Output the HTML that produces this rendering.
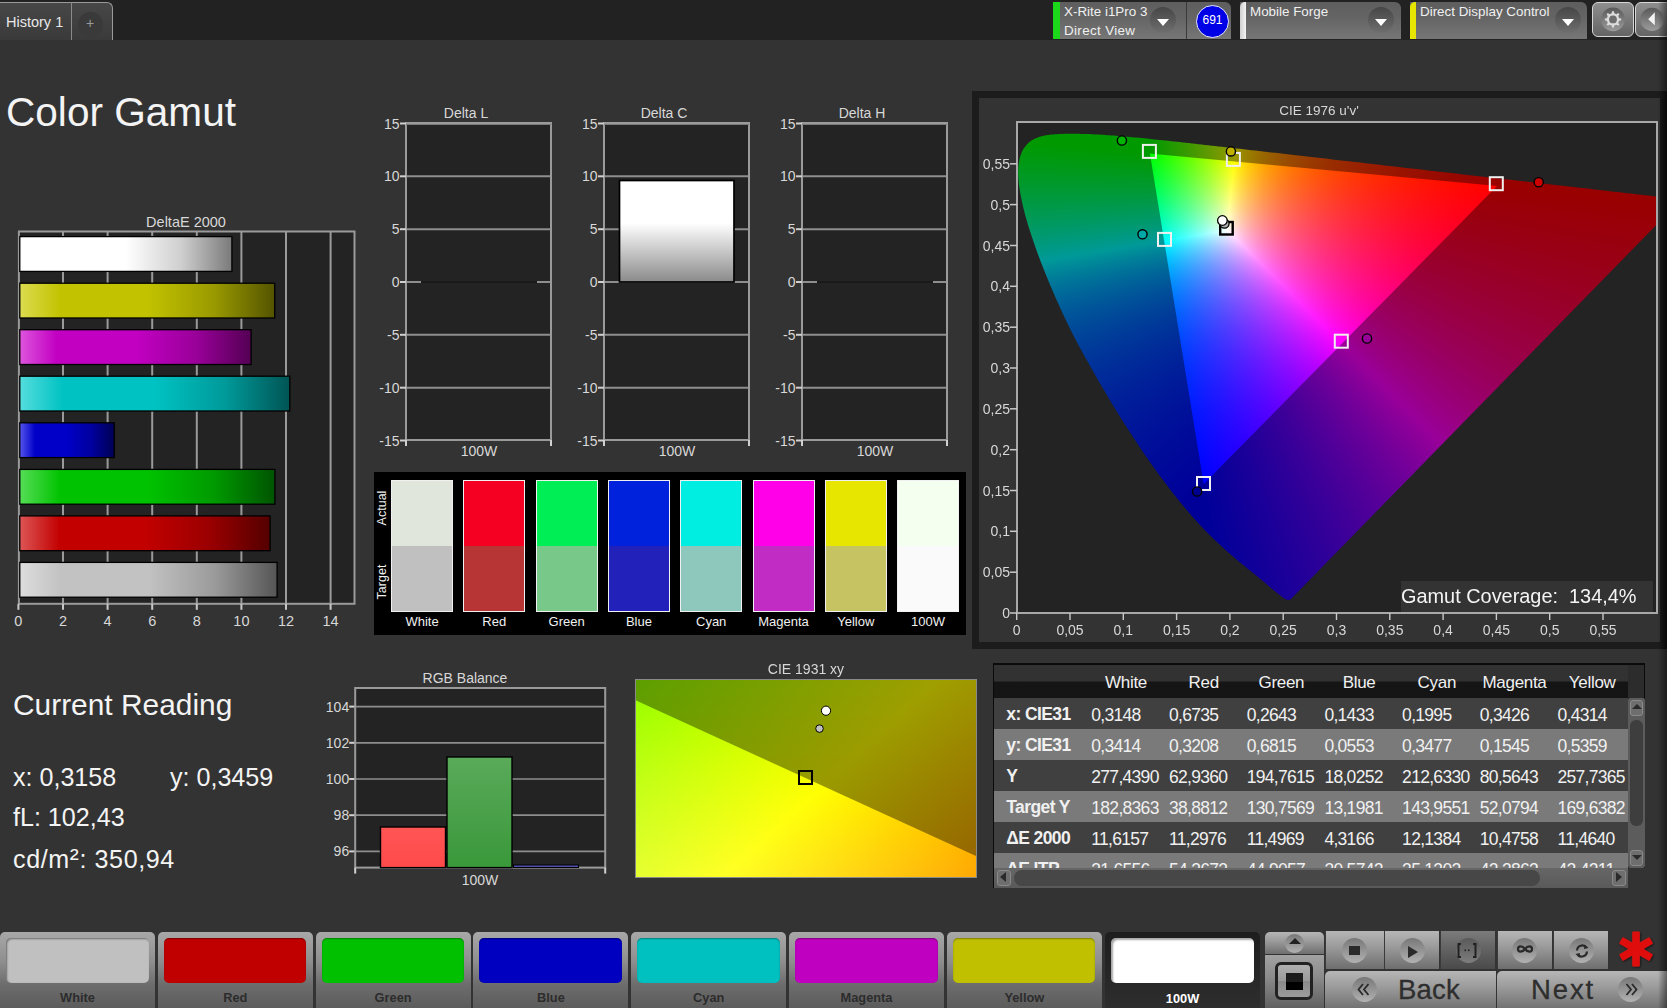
<!DOCTYPE html>
<html><head><meta charset="utf-8">
<style>
*{box-sizing:border-box;margin:0;padding:0}
html,body{width:1667px;height:1008px;overflow:hidden;background:#333333;font-family:"Liberation Sans",sans-serif;color:#e6e6e6}
.a{position:absolute}
svg text{font-family:"Liberation Sans",sans-serif}
#topbar{left:0;top:0;width:1667px;height:40px;background:#222222}
.tab{left:0;top:2px;width:113px;height:38px;background:linear-gradient(#474747,#3a3a3a);border-top:1.3px solid #9a9a9a;border-right:1.3px solid #9a9a9a;border-top-right-radius:6px}
.wid{top:2px;height:37px;background:linear-gradient(#5e5e5e,#646464 40%,#767676);border-radius:0 6px 0 0}
.strip{top:0;left:0;width:7px;height:37px}
.dd{width:26px;height:26px;border-radius:50%;background:linear-gradient(#464646,#6e6e6e)}
.dd:after{content:"";position:absolute;left:7px;top:11.5px;border-left:6px solid transparent;border-right:6px solid transparent;border-top:7px solid #fff}
.wtxt{font-size:13.4px;color:#f0f0f0;white-space:nowrap}
#title{left:6px;top:89.3px;font-size:40.6px;color:#f4f4f4;white-space:nowrap}
</style></head><body>
<div id="topbar" class="a"></div>
<div class="a tab">
  <div class="a" style="left:6px;top:10.5px;font-size:14.5px;color:#e8e8e8;white-space:nowrap">History 1</div>
  <div class="a" style="left:71px;top:-1px;width:1.3px;height:38px;background:#8a8a8a"></div>
  <div class="a" style="left:78px;top:9px;width:25px;height:25px;border-radius:50%;background:#3a3a3a"></div>
  <div class="a" style="left:86px;top:12px;font-size:14px;color:#9a9a9a">+</div>
</div>

<!-- meter widget -->
<div class="a wid" style="left:1053px;width:178px">
  <div class="a strip" style="background:#1bd81b"></div>
  <div class="a wtxt" style="left:11px;top:2px">X-Rite i1Pro 3</div>
  <div class="a wtxt" style="left:11px;top:21px;letter-spacing:0.35px">Direct View</div>
  <div class="a dd" style="left:97px;top:5px"></div>
  <div class="a" style="left:133px;top:0;width:1px;height:37px;background:#3a3a3a"></div>
  <div class="a" style="left:143px;top:3px;width:33px;height:33px;border-radius:50%;background:#0000e6;border:1.5px solid #e8e8ff"></div>
  <div class="a" style="left:143px;top:11px;width:33px;text-align:center;font-size:12px;color:#fff">691</div>
</div>
<div class="a wid" style="left:1240px;width:161px">
  <div class="a strip" style="width:6px;background:linear-gradient(90deg,#cfcfcf,#f4f4f4);border-radius:5px 0 0 0"></div>
  <div class="a wtxt" style="left:10px;top:2px">Mobile Forge</div>
  <div class="a dd" style="left:128px;top:5px"></div>
</div>
<div class="a wid" style="left:1410px;width:177px">
  <div class="a strip" style="width:6px;background:#e6e600;border-radius:5px 0 0 0"></div>
  <div class="a wtxt" style="left:10px;top:2px">Direct Display Control</div>
  <div class="a dd" style="left:145px;top:5px"></div>
</div>
<div class="a" style="left:1592px;top:2px;width:42px;height:35px;border-radius:6px;border:1.5px solid #d8d8d8;background:linear-gradient(#8e8e8e,#777 55%,#646464)"></div>
<div class="a" style="left:1635px;top:2px;width:40px;height:35px;border-radius:6px;border:1.5px solid #d8d8d8;background:linear-gradient(#8e8e8e,#777 55%,#646464)"></div>
<svg class="a" style="left:1592px;top:2px" width="75" height="36" viewBox="0 0 75 36">
<defs><linearGradient id="gcirc" x1="0" x2="0" y1="0" y2="1"><stop offset="0" stop-color="#595959"/><stop offset="1" stop-color="#9c9c9c"/></linearGradient></defs>
<circle cx="21" cy="17.4" r="11.8" fill="url(#gcirc)"/>
<path d="M19.75 11.23 L20.02 9.26 L21.98 9.26 L22.25 11.23 L24.48 12.15 L26.06 10.95 L27.45 12.34 L26.25 13.92 L27.17 16.15 L29.14 16.42 L29.14 18.38 L27.17 18.65 L26.25 20.88 L27.45 22.46 L26.06 23.85 L24.48 22.65 L22.25 23.57 L21.98 25.54 L20.02 25.54 L19.75 23.57 L17.52 22.65 L15.94 23.85 L14.55 22.46 L15.75 20.88 L14.83 18.65 L12.86 18.38 L12.86 16.42 L14.83 16.15 L15.75 13.92 L14.55 12.34 L15.94 10.95 L17.52 12.15 Z" fill="#dcdcdc"/><circle cx="21" cy="17.4" r="3.9" fill="#6e6e6e"/>
<circle cx="60" cy="17.4" r="11.6" fill="url(#gcirc)"/>
<path d="M56.2 17.2 L62.8 10.2 L62.8 23.2 Z" fill="#f2f2f2"/>
</svg>
<div id="title" class="a">Color Gamut</div>

<svg class="a" style="left:0;top:200px" width="370" height="440" viewBox="0 200 370 440">
<defs>
<linearGradient id="dew" x1="0" x2="1" y1="0" y2="0"><stop offset="0" stop-color="#ffffff"/><stop offset="0.16" stop-color="#ffffff"/><stop offset="0.5" stop-color="#ffffff"/><stop offset="0.76" stop-color="#cfcfcf"/><stop offset="1" stop-color="#7a7a7a"/></linearGradient>
<linearGradient id="dey" x1="0" x2="1" y1="0" y2="0"><stop offset="0" stop-color="#dcdc50"/><stop offset="0.16" stop-color="#c2c200"/><stop offset="0.5" stop-color="#c2c200"/><stop offset="0.76" stop-color="#9a9a00"/><stop offset="1" stop-color="#545400"/></linearGradient>
<linearGradient id="dem" x1="0" x2="1" y1="0" y2="0"><stop offset="0" stop-color="#dd55dd"/><stop offset="0.16" stop-color="#c200c2"/><stop offset="0.5" stop-color="#c200c2"/><stop offset="0.76" stop-color="#9a009a"/><stop offset="1" stop-color="#540054"/></linearGradient>
<linearGradient id="dec" x1="0" x2="1" y1="0" y2="0"><stop offset="0" stop-color="#55dddd"/><stop offset="0.16" stop-color="#00c2c2"/><stop offset="0.5" stop-color="#00c2c2"/><stop offset="0.76" stop-color="#009a9a"/><stop offset="1" stop-color="#005454"/></linearGradient>
<linearGradient id="deb" x1="0" x2="1" y1="0" y2="0"><stop offset="0" stop-color="#5555ee"/><stop offset="0.16" stop-color="#0000c8"/><stop offset="0.5" stop-color="#0000c8"/><stop offset="0.76" stop-color="#00009e"/><stop offset="1" stop-color="#000054"/></linearGradient>
<linearGradient id="deg" x1="0" x2="1" y1="0" y2="0"><stop offset="0" stop-color="#55dd55"/><stop offset="0.16" stop-color="#00c200"/><stop offset="0.5" stop-color="#00c200"/><stop offset="0.76" stop-color="#009a00"/><stop offset="1" stop-color="#005400"/></linearGradient>
<linearGradient id="der" x1="0" x2="1" y1="0" y2="0"><stop offset="0" stop-color="#dd5555"/><stop offset="0.16" stop-color="#c20000"/><stop offset="0.5" stop-color="#c20000"/><stop offset="0.76" stop-color="#9a0000"/><stop offset="1" stop-color="#540000"/></linearGradient>
<linearGradient id="dek" x1="0" x2="1" y1="0" y2="0"><stop offset="0" stop-color="#dddddd"/><stop offset="0.16" stop-color="#c2c2c2"/><stop offset="0.5" stop-color="#c2c2c2"/><stop offset="0.76" stop-color="#9a9a9a"/><stop offset="1" stop-color="#555555"/></linearGradient>
</defs>
<rect x="18.9" y="231.5" width="335.6" height="372.29999999999995" fill="#232323"/>
<line x1="63.0" y1="231.5" x2="63.0" y2="603.8" stroke="#9a9a9a" stroke-width="2"/>
<line x1="107.6" y1="231.5" x2="107.6" y2="603.8" stroke="#9a9a9a" stroke-width="2"/>
<line x1="152.2" y1="231.5" x2="152.2" y2="603.8" stroke="#9a9a9a" stroke-width="2"/>
<line x1="196.8" y1="231.5" x2="196.8" y2="603.8" stroke="#9a9a9a" stroke-width="2"/>
<line x1="241.4" y1="231.5" x2="241.4" y2="603.8" stroke="#9a9a9a" stroke-width="2"/>
<line x1="286.0" y1="231.5" x2="286.0" y2="603.8" stroke="#9a9a9a" stroke-width="2"/>
<line x1="330.6" y1="231.5" x2="330.6" y2="603.8" stroke="#9a9a9a" stroke-width="2"/>
<rect x="18.9" y="231.5" width="335.6" height="372.29999999999995" fill="none" stroke="#9a9a9a" stroke-width="2"/>
<rect x="19.799999999999997" y="236.6" width="212.1" height="34.8" fill="url(#dew)" stroke="#000" stroke-width="1.3"/>
<rect x="19.799999999999997" y="283.2" width="254.9" height="34.8" fill="url(#dey)" stroke="#000" stroke-width="1.3"/>
<rect x="19.799999999999997" y="329.7" width="231.3" height="34.8" fill="url(#dem)" stroke="#000" stroke-width="1.3"/>
<rect x="19.799999999999997" y="376.2" width="270.0" height="34.8" fill="url(#dec)" stroke="#000" stroke-width="1.3"/>
<rect x="19.799999999999997" y="422.8" width="94.5" height="34.8" fill="url(#deb)" stroke="#000" stroke-width="1.3"/>
<rect x="19.799999999999997" y="469.4" width="255.1" height="34.8" fill="url(#deg)" stroke="#000" stroke-width="1.3"/>
<rect x="19.799999999999997" y="515.9" width="250.3" height="34.8" fill="url(#der)" stroke="#000" stroke-width="1.3"/>
<rect x="19.799999999999997" y="562.4" width="257.3" height="34.8" fill="url(#dek)" stroke="#000" stroke-width="1.3"/>
<line x1="18.4" y1="603.8" x2="18.4" y2="609.8" stroke="#c8c8c8" stroke-width="2"/>
<text x="18.4" y="626" font-size="14.5" fill="#d8d8d8" text-anchor="middle">0</text>
<line x1="63.0" y1="603.8" x2="63.0" y2="609.8" stroke="#c8c8c8" stroke-width="2"/>
<text x="63.0" y="626" font-size="14.5" fill="#d8d8d8" text-anchor="middle">2</text>
<line x1="107.6" y1="603.8" x2="107.6" y2="609.8" stroke="#c8c8c8" stroke-width="2"/>
<text x="107.6" y="626" font-size="14.5" fill="#d8d8d8" text-anchor="middle">4</text>
<line x1="152.2" y1="603.8" x2="152.2" y2="609.8" stroke="#c8c8c8" stroke-width="2"/>
<text x="152.2" y="626" font-size="14.5" fill="#d8d8d8" text-anchor="middle">6</text>
<line x1="196.8" y1="603.8" x2="196.8" y2="609.8" stroke="#c8c8c8" stroke-width="2"/>
<text x="196.8" y="626" font-size="14.5" fill="#d8d8d8" text-anchor="middle">8</text>
<line x1="241.4" y1="603.8" x2="241.4" y2="609.8" stroke="#c8c8c8" stroke-width="2"/>
<text x="241.4" y="626" font-size="14.5" fill="#d8d8d8" text-anchor="middle">10</text>
<line x1="286.0" y1="603.8" x2="286.0" y2="609.8" stroke="#c8c8c8" stroke-width="2"/>
<text x="286.0" y="626" font-size="14.5" fill="#d8d8d8" text-anchor="middle">12</text>
<line x1="330.6" y1="603.8" x2="330.6" y2="609.8" stroke="#c8c8c8" stroke-width="2"/>
<text x="330.6" y="626" font-size="14.5" fill="#d8d8d8" text-anchor="middle">14</text>
<text x="186" y="227" font-size="14.5" fill="#d8d8d8" text-anchor="middle">DeltaE 2000</text>
</svg>
<svg class="a" style="left:366px;top:95px" width="200" height="375" viewBox="366 95 200 375">
<rect x="406" y="123.0" width="145" height="317.0" fill="#232323"/>
<line x1="406" y1="176.3" x2="551" y2="176.3" stroke="#8e8e8e" stroke-width="2"/>
<line x1="406" y1="229.2" x2="551" y2="229.2" stroke="#8e8e8e" stroke-width="2"/>
<line x1="406" y1="282.0" x2="551" y2="282.0" stroke="#8e8e8e" stroke-width="2"/>
<line x1="406" y1="334.8" x2="551" y2="334.8" stroke="#8e8e8e" stroke-width="2"/>
<line x1="406" y1="387.7" x2="551" y2="387.7" stroke="#8e8e8e" stroke-width="2"/>
<rect x="406" y="123.0" width="145" height="317.0" fill="none" stroke="#9a9a9a" stroke-width="2"/>
<line x1="406" y1="124.5" x2="551" y2="124.5" stroke="#7a7a7a" stroke-width="1"/>
<rect x="421" y="281" width="116" height="2" fill="#1a1a1a"/>
<line x1="400" y1="123.5" x2="406" y2="123.5" stroke="#d0d0d0" stroke-width="2"/>
<text x="399.5" y="128.5" font-size="14" fill="#d8d8d8" text-anchor="end">15</text>
<line x1="400" y1="176.3" x2="406" y2="176.3" stroke="#d0d0d0" stroke-width="2"/>
<text x="399.5" y="181.3" font-size="14" fill="#d8d8d8" text-anchor="end">10</text>
<line x1="400" y1="229.2" x2="406" y2="229.2" stroke="#d0d0d0" stroke-width="2"/>
<text x="399.5" y="234.2" font-size="14" fill="#d8d8d8" text-anchor="end">5</text>
<line x1="400" y1="282.0" x2="406" y2="282.0" stroke="#d0d0d0" stroke-width="2"/>
<text x="399.5" y="287.0" font-size="14" fill="#d8d8d8" text-anchor="end">0</text>
<line x1="400" y1="334.8" x2="406" y2="334.8" stroke="#d0d0d0" stroke-width="2"/>
<text x="399.5" y="339.8" font-size="14" fill="#d8d8d8" text-anchor="end">-5</text>
<line x1="400" y1="387.7" x2="406" y2="387.7" stroke="#d0d0d0" stroke-width="2"/>
<text x="399.5" y="392.7" font-size="14" fill="#d8d8d8" text-anchor="end">-10</text>
<line x1="400" y1="440.5" x2="406" y2="440.5" stroke="#d0d0d0" stroke-width="2"/>
<text x="399.5" y="445.5" font-size="14" fill="#d8d8d8" text-anchor="end">-15</text>
<line x1="406" y1="440.0" x2="406" y2="446.0" stroke="#d0d0d0" stroke-width="2"/>
<line x1="551" y1="440.0" x2="551" y2="446.0" stroke="#d0d0d0" stroke-width="2"/>
<text x="479" y="456" font-size="14" fill="#d8d8d8" text-anchor="middle">100W</text>
<text x="466" y="118" font-size="14" fill="#d8d8d8" text-anchor="middle">Delta L</text>
</svg>
<svg class="a" style="left:563.5px;top:95px" width="200" height="375" viewBox="563.5 95 200 375">
<defs><linearGradient id="dcg" x1="0" x2="0" y1="0" y2="1"><stop offset="0" stop-color="#ffffff"/><stop offset="0.42" stop-color="#ffffff"/><stop offset="1" stop-color="#8a8a8a"/></linearGradient></defs>
<rect x="603.5" y="123.0" width="145" height="317.0" fill="#232323"/>
<line x1="603.5" y1="176.3" x2="748.5" y2="176.3" stroke="#8e8e8e" stroke-width="2"/>
<line x1="603.5" y1="229.2" x2="748.5" y2="229.2" stroke="#8e8e8e" stroke-width="2"/>
<line x1="603.5" y1="282.0" x2="748.5" y2="282.0" stroke="#8e8e8e" stroke-width="2"/>
<line x1="603.5" y1="334.8" x2="748.5" y2="334.8" stroke="#8e8e8e" stroke-width="2"/>
<line x1="603.5" y1="387.7" x2="748.5" y2="387.7" stroke="#8e8e8e" stroke-width="2"/>
<rect x="603.5" y="123.0" width="145" height="317.0" fill="none" stroke="#9a9a9a" stroke-width="2"/>
<line x1="603.5" y1="124.5" x2="748.5" y2="124.5" stroke="#7a7a7a" stroke-width="1"/>
<rect x="619.0" y="180.5" width="114.5" height="101.5" fill="url(#dcg)" stroke="#000" stroke-width="1.7"/>
<line x1="597.5" y1="123.5" x2="603.5" y2="123.5" stroke="#d0d0d0" stroke-width="2"/>
<text x="597.0" y="128.5" font-size="14" fill="#d8d8d8" text-anchor="end">15</text>
<line x1="597.5" y1="176.3" x2="603.5" y2="176.3" stroke="#d0d0d0" stroke-width="2"/>
<text x="597.0" y="181.3" font-size="14" fill="#d8d8d8" text-anchor="end">10</text>
<line x1="597.5" y1="229.2" x2="603.5" y2="229.2" stroke="#d0d0d0" stroke-width="2"/>
<text x="597.0" y="234.2" font-size="14" fill="#d8d8d8" text-anchor="end">5</text>
<line x1="597.5" y1="282.0" x2="603.5" y2="282.0" stroke="#d0d0d0" stroke-width="2"/>
<text x="597.0" y="287.0" font-size="14" fill="#d8d8d8" text-anchor="end">0</text>
<line x1="597.5" y1="334.8" x2="603.5" y2="334.8" stroke="#d0d0d0" stroke-width="2"/>
<text x="597.0" y="339.8" font-size="14" fill="#d8d8d8" text-anchor="end">-5</text>
<line x1="597.5" y1="387.7" x2="603.5" y2="387.7" stroke="#d0d0d0" stroke-width="2"/>
<text x="597.0" y="392.7" font-size="14" fill="#d8d8d8" text-anchor="end">-10</text>
<line x1="597.5" y1="440.5" x2="603.5" y2="440.5" stroke="#d0d0d0" stroke-width="2"/>
<text x="597.0" y="445.5" font-size="14" fill="#d8d8d8" text-anchor="end">-15</text>
<line x1="603.5" y1="440.0" x2="603.5" y2="446.0" stroke="#d0d0d0" stroke-width="2"/>
<line x1="748.5" y1="440.0" x2="748.5" y2="446.0" stroke="#d0d0d0" stroke-width="2"/>
<text x="676.5" y="456" font-size="14" fill="#d8d8d8" text-anchor="middle">100W</text>
<text x="663.5" y="118" font-size="14" fill="#d8d8d8" text-anchor="middle">Delta C</text>
</svg>
<svg class="a" style="left:761.8px;top:95px" width="200" height="375" viewBox="761.8 95 200 375">
<rect x="801.8" y="123.0" width="145" height="317.0" fill="#232323"/>
<line x1="801.8" y1="176.3" x2="946.8" y2="176.3" stroke="#8e8e8e" stroke-width="2"/>
<line x1="801.8" y1="229.2" x2="946.8" y2="229.2" stroke="#8e8e8e" stroke-width="2"/>
<line x1="801.8" y1="282.0" x2="946.8" y2="282.0" stroke="#8e8e8e" stroke-width="2"/>
<line x1="801.8" y1="334.8" x2="946.8" y2="334.8" stroke="#8e8e8e" stroke-width="2"/>
<line x1="801.8" y1="387.7" x2="946.8" y2="387.7" stroke="#8e8e8e" stroke-width="2"/>
<rect x="801.8" y="123.0" width="145" height="317.0" fill="none" stroke="#9a9a9a" stroke-width="2"/>
<line x1="801.8" y1="124.5" x2="946.8" y2="124.5" stroke="#7a7a7a" stroke-width="1"/>
<rect x="816.8" y="281" width="116" height="2" fill="#1a1a1a"/>
<line x1="795.8" y1="123.5" x2="801.8" y2="123.5" stroke="#d0d0d0" stroke-width="2"/>
<text x="795.3" y="128.5" font-size="14" fill="#d8d8d8" text-anchor="end">15</text>
<line x1="795.8" y1="176.3" x2="801.8" y2="176.3" stroke="#d0d0d0" stroke-width="2"/>
<text x="795.3" y="181.3" font-size="14" fill="#d8d8d8" text-anchor="end">10</text>
<line x1="795.8" y1="229.2" x2="801.8" y2="229.2" stroke="#d0d0d0" stroke-width="2"/>
<text x="795.3" y="234.2" font-size="14" fill="#d8d8d8" text-anchor="end">5</text>
<line x1="795.8" y1="282.0" x2="801.8" y2="282.0" stroke="#d0d0d0" stroke-width="2"/>
<text x="795.3" y="287.0" font-size="14" fill="#d8d8d8" text-anchor="end">0</text>
<line x1="795.8" y1="334.8" x2="801.8" y2="334.8" stroke="#d0d0d0" stroke-width="2"/>
<text x="795.3" y="339.8" font-size="14" fill="#d8d8d8" text-anchor="end">-5</text>
<line x1="795.8" y1="387.7" x2="801.8" y2="387.7" stroke="#d0d0d0" stroke-width="2"/>
<text x="795.3" y="392.7" font-size="14" fill="#d8d8d8" text-anchor="end">-10</text>
<line x1="795.8" y1="440.5" x2="801.8" y2="440.5" stroke="#d0d0d0" stroke-width="2"/>
<text x="795.3" y="445.5" font-size="14" fill="#d8d8d8" text-anchor="end">-15</text>
<line x1="801.8" y1="440.0" x2="801.8" y2="446.0" stroke="#d0d0d0" stroke-width="2"/>
<line x1="946.8" y1="440.0" x2="946.8" y2="446.0" stroke="#d0d0d0" stroke-width="2"/>
<text x="874.8" y="456" font-size="14" fill="#d8d8d8" text-anchor="middle">100W</text>
<text x="861.8" y="118" font-size="14" fill="#d8d8d8" text-anchor="middle">Delta H</text>
</svg>
<div class="a" style="left:374px;top:472px;width:592px;height:163px;background:#000"></div>
<div class="a" style="left:391.0px;top:480px;width:62px;height:132px;border:1.5px solid #f0f0f0;background:linear-gradient(#e0e6dc 0,#e0e6dc 50%,#c0c0c0 50%,#c0c0c0 100%)"></div>
<div class="a" style="left:381.0px;top:614px;width:82px;text-align:center;font-size:13px;color:#f0f0f0">White</div>
<div class="a" style="left:463.3px;top:480px;width:62px;height:132px;border:1.5px solid #f0f0f0;background:linear-gradient(#f50022 0,#f50022 50%,#b83535 50%,#b83535 100%)"></div>
<div class="a" style="left:453.3px;top:614px;width:82px;text-align:center;font-size:13px;color:#f0f0f0">Red</div>
<div class="a" style="left:535.6px;top:480px;width:62px;height:132px;border:1.5px solid #f0f0f0;background:linear-gradient(#00ee55 0,#00ee55 50%,#77c889 50%,#77c889 100%)"></div>
<div class="a" style="left:525.6px;top:614px;width:82px;text-align:center;font-size:13px;color:#f0f0f0">Green</div>
<div class="a" style="left:607.9px;top:480px;width:62px;height:132px;border:1.5px solid #f0f0f0;background:linear-gradient(#0022dd 0,#0022dd 50%,#2222bb 50%,#2222bb 100%)"></div>
<div class="a" style="left:597.9px;top:614px;width:82px;text-align:center;font-size:13px;color:#f0f0f0">Blue</div>
<div class="a" style="left:680.2px;top:480px;width:62px;height:132px;border:1.5px solid #f0f0f0;background:linear-gradient(#00eee2 0,#00eee2 50%,#8ec8bc 50%,#8ec8bc 100%)"></div>
<div class="a" style="left:670.2px;top:614px;width:82px;text-align:center;font-size:13px;color:#f0f0f0">Cyan</div>
<div class="a" style="left:752.5px;top:480px;width:62px;height:132px;border:1.5px solid #f0f0f0;background:linear-gradient(#ff00e8 0,#ff00e8 50%,#c02cc4 50%,#c02cc4 100%)"></div>
<div class="a" style="left:742.5px;top:614px;width:82px;text-align:center;font-size:13px;color:#f0f0f0">Magenta</div>
<div class="a" style="left:824.8px;top:480px;width:62px;height:132px;border:1.5px solid #f0f0f0;background:linear-gradient(#e6e600 0,#e6e600 50%,#c6c462 50%,#c6c462 100%)"></div>
<div class="a" style="left:814.8px;top:614px;width:82px;text-align:center;font-size:13px;color:#f0f0f0">Yellow</div>
<div class="a" style="left:897.1px;top:480px;width:62px;height:132px;border:1.5px solid #f0f0f0;background:linear-gradient(#f4fff0 0,#f4fff0 50%,#fafafa 50%,#fafafa 100%)"></div>
<div class="a" style="left:887.1px;top:614px;width:82px;text-align:center;font-size:13px;color:#f0f0f0">100W</div>
<div class="a" style="left:352px;top:501px;width:60px;text-align:center;font-size:12.5px;color:#f0f0f0;transform:rotate(-90deg)">Actual</div>
<div class="a" style="left:352px;top:575px;width:60px;text-align:center;font-size:12.5px;color:#f0f0f0;transform:rotate(-90deg)">Target</div>
<div class="a" style="left:972px;top:91px;width:695px;height:558px;background:#1c1c1c"></div>
<div class="a" style="left:979px;top:98px;width:681px;height:544px;background:#333333"></div>
<div class="a" style="left:1660px;top:91px;width:7px;height:558px;background:linear-gradient(90deg,#1c1c1c,#111)"></div>
<div class="a" style="left:1017px;top:122px;width:640px;height:491px;background:#232323"></div>
<noscript><div class="a" style="left:1017px;top:122px;width:640px;height:491px;clip-path:polygon(273.5px 477.4px,273.3px 477.4px,273.0px 477.7px,272.7px 477.7px,272.3px 478.0px,271.7px 478.0px,271.0px 478.0px,270.1px 478.0px,268.6px 477.2px,265.8px 475.4px,262.1px 472.5px,256.7px 468.2px,249.9px 462.4px,241.3px 455.3px,230.0px 446.1px,216.5px 434.8px,199.8px 419.9px,179.8px 399.6px,153.3px 367.7px,122.0px 324.1px,88.0px 269.8px,55.3px 211.1px,29.7px 154.8px,12.4px 107.3px,3.4px 72.0px,1.2px 47.4px,4.6px 30.5px,12.8px 19.8px,24.3px 14.3px,38.1px 12.3px,53.1px 11.8px,68.3px 12.0px,84.2px 12.7px,101.3px 14.0px,119.8px 15.6px,140.3px 17.7px,162.9px 20.1px,187.9px 22.9px,215.7px 26.0px,246.1px 29.5px,279.4px 33.3px,315.2px 37.4px,353.1px 41.7px,392.1px 46.2px,429.8px 50.5px,466.5px 54.7px,499.8px 58.5px,529.3px 61.9px,554.3px 64.8px,575.3px 67.2px,592.9px 69.2px,608.3px 70.9px,621.2px 72.4px,631.7px 73.6px,639.8px 74.5px,650.9px 75.8px,660.5px 76.9px,664.2px 77.3px);background:linear-gradient(90deg,#009900 0px,#009900 12px,#009900 24px,#009900 36px,#009900 48px,#009900 60px,#009900 72px,#009900 84px,#009900 96px,#009900 108px,#009900 120px,#059900 132px,#159900 144px,#269900 156px,#389900 168px,#4c9900 180px,#609900 192px,#779900 204px,#8f9900 216px,#998a00 228px,#997600 240px,#996700 252px,#995a00 264px,#994f00 276px,#994500 288px,#993d00 300px,#993700 312px,#993000 324px,#992b00 336px,#992600 348px,#992200 360px,#991e00 372px,#991b00 384px,#991700 396px,#991500 408px,#991200 420px,#990f00 432px,#990d00 444px,#990b00 456px,#990900 468px,#990700 480px,#990500 492px,#990400 504px,#990200 516px,#990100 528px,#990000 540px,#990000 552px,#990000 564px,#990000 576px,#990000 588px,#990000 600px,#990000 612px,#990000 624px,#990000 636px,#990000 640px) 0 0px/640px 4px no-repeat,linear-gradient(90deg,#009900 0px,#009900 12px,#009900 24px,#009900 36px,#009900 48px,#009900 60px,#009900 72px,#009900 84px,#009900 96px,#009900 108px,#009900 120px,#049900 132px,#149900 144px,#259900 156px,#389900 168px,#4c9900 180px,#619900 192px,#779900 204px,#8f9900 216px,#998900 228px,#997500 240px,#996600 252px,#995900 264px,#994e00 276px,#994500 288px,#993d00 300px,#993600 312px,#993000 324px,#992a00 336px,#992600 348px,#992100 360px,#991e00 372px,#991a00 384px,#991700 396px,#991400 408px,#991100 420px,#990f00 432px,#990d00 444px,#990a00 456px,#990900 468px,#990700 480px,#990500 492px,#990300 504px,#990200 516px,#990100 528px,#990000 540px,#990000 552px,#990000 564px,#990000 576px,#990000 588px,#990000 600px,#990000 612px,#990000 624px,#990000 636px,#990000 640px) 0 4px/640px 4px no-repeat,linear-gradient(90deg,#009900 0px,#009900 12px,#009900 24px,#009900 36px,#009900 48px,#009900 60px,#009900 72px,#009900 84px,#009900 96px,#009900 108px,#009900 120px,#039900 132px,#139900 144px,#259900 156px,#379900 168px,#4b9900 180px,#619900 192px,#789900 204px,#909900 216px,#998800 228px,#997500 240px,#996500 252px,#995800 264px,#994d00 276px,#994400 288px,#993c00 300px,#993500 312px,#982f00 324px,#992a00 336px,#992500 348px,#992100 360px,#991d00 372px,#991900 384px,#991600 396px,#991300 408px,#991100 420px,#990e00 432px,#990c00 444px,#990a00 456px,#990800 468px,#990600 480px,#990500 492px,#990300 504px,#990100 516px,#990000 528px,#990000 540px,#990000 552px,#990000 564px,#990000 576px,#990000 588px,#990000 600px,#990000 612px,#990000 624px,#990000 636px,#990000 640px) 0 8px/640px 4px no-repeat,linear-gradient(90deg,#009900 0px,#009900 12px,#009900 24px,#009900 36px,#009900 48px,#009900 60px,#009900 72px,#009900 84px,#009900 96px,#009900 108px,#009900 120px,#029900 132px,#139900 144px,#249900 156px,#379900 168px,#4b9900 180px,#619900 192px,#789900 204px,#919900 216px,#998700 228px,#997400 240px,#996400 252px,#995700 264px,#994c00 276px,#994300 288px,#993b00 300px,#993400 312px,#992e00 324px,#992900 336px,#992400 348px,#992000 360px,#991c00 372px,#991900 384px,#991600 396px,#991300 408px,#991000 420px,#990e00 432px,#990c00 444px,#990900 456px,#990800 468px,#990600 480px,#990400 492px,#980300 504px,#990100 516px,#990000 528px,#990000 540px,#990000 552px,#990000 564px,#990000 576px,#990000 588px,#990000 600px,#990000 612px,#990000 624px,#990000 636px,#990000 640px) 0 12px/640px 4px no-repeat,linear-gradient(90deg,#009900 0px,#009900 12px,#009900 24px,#009900 36px,#009900 48px,#009900 60px,#009900 72px,#009900 84px,#009900 96px,#009900 108px,#009900 120px,#019900 132px,#129900 144px,#249900 156px,#379900 168px,#4b9900 180px,#619900 192px,#789900 204px,#929900 216px,#998700 228px,#997300 240px,#996300 252px,#995600 264px,#994b00 276px,#994200 288px,#993a00 300px,#993300 312px,#992e00 324px,#992800 336px,#992400 348px,#991f00 360px,#991c00 372px,#991800 384px,#991500 396px,#991200 408px,#991000 420px,#990d00 432px,#990b00 444px,#990900 456px,#990700 468px,#990500 480px,#990400 492px,#990200 504px,#990100 516px,#990000 528px,#990000 540px,#990000 552px,#990000 564px,#990000 576px,#990000 588px,#990000 600px,#990000 612px,#990000 624px,#990000 636px,#990000 640px) 0 16px/640px 4px no-repeat,linear-gradient(90deg,#009902 0px,#009901 12px,#009900 24px,#009900 36px,#009900 48px,#009900 60px,#009900 72px,#009900 84px,#009900 96px,#009900 108px,#009900 120px,#009900 132px,#119900 144px,#239900 156px,#369900 168px,#4b9900 180px,#619900 192px,#799900 204px,#929900 216px,#998600 228px,#997200 240px,#996200 252px,#995500 264px,#994a00 276px,#994100 288px,#993a00 300px,#993300 312px,#992d00 324px,#992800 336px,#992300 348px,#991f00 360px,#991b00 372px,#991800 384px,#991400 396px,#991200 408px,#990f00 420px,#990d00 432px,#990a00 444px,#990800 456px,#990700 468px,#990500 480px,#990300 492px,#990200 504px,#990000 516px,#990000 528px,#990000 540px,#990000 552px,#990000 564px,#990000 576px,#990000 588px,#990000 600px,#990000 612px,#990000 624px,#990000 636px,#990000 640px) 0 20px/640px 4px no-repeat,linear-gradient(90deg,#009906 0px,#009905 12px,#009904 24px,#009903 36px,#009902 48px,#009901 60px,#009900 72px,#009900 84px,#009900 96px,#009900 108px,#009900 120px,#009900 132px,#109900 144px,#239900 156px,#369900 168px,#4b9900 180px,#619900 192px,#799900 204px,#939900 216px,#998500 228px,#997100 240px,#996100 252px,#995400 264px,#994a00 276px,#994000 288px,#993900 300px,#993200 312px,#992c00 324px,#992700 336px,#992200 348px,#991e00 360px,#991a00 372px,#991700 384px,#991400 396px,#991100 408px,#990e00 420px,#990c00 432px,#990a00 444px,#990800 456px,#990600 468px,#990400 480px,#990300 492px,#990100 504px,#990000 516px,#990000 528px,#990000 540px,#990000 552px,#990000 564px,#990000 576px,#990000 588px,#990000 600px,#990000 612px,#990000 624px,#990000 636px,#990000 640px) 0 24px/640px 4px no-repeat,linear-gradient(90deg,#00990a 0px,#009909 12px,#009908 24px,#009907 36px,#009906 48px,#009905 60px,#009904 72px,#009903 84px,#009902 96px,#009900 108px,#009900 120px,#009900 132px,#109900 144px,#229900 156px,#369900 168px,#4b9900 180px,#619900 192px,#7a9900 204px,#949900 216px,#998400 228px,#997000 240px,#996000 252px,#995300 264px,#994900 276px,#994000 288px,#993800 300px,#993100 312px,#992b00 324px,#992600 336px,#992100 348px,#991d00 360px,#991a00 372px,#991600 384px,#991300 396px,#991000 408px,#990e00 420px,#990c00 432px,#990900 444px,#990700 456px,#990600 468px,#990400 480px,#990200 492px,#990100 504px,#990000 516px,#990000 528px,#990000 540px,#990000 552px,#990000 564px,#990000 576px,#990000 588px,#990000 600px,#990000 612px,#990000 624px,#990000 636px,#990000 640px) 0 28px/640px 4px no-repeat,linear-gradient(90deg,#00990e 0px,#00990d 12px,#00990c 24px,#00990b 36px,#00990b 48px,#00990a 60px,#009909 72px,#009908 84px,#009906 96px,#009905 108px,#009904 120px,#009903 132px,#009903 133.5px,#01ff05 133.51px,#19ff03 144px,#38ff00 156px,#3dff00 158.5px,#269900 158.51px,#359900 168px,#4b9900 180px,#619900 192px,#7a9900 204px,#959900 216px,#998300 228px,#996f00 240px,#995f00 252px,#995300 264px,#994800 276px,#993f00 288px,#993700 300px,#993000 312px,#992b00 324px,#992500 336px,#992100 348px,#991d00 360px,#991900 372px,#991600 384px,#991300 396px,#991000 408px,#990d00 420px,#990b00 432px,#990900 444px,#990700 456px,#990500 468px,#990300 480px,#990200 492px,#990000 504px,#990000 516px,#990000 528px,#990000 540px,#990000 552px,#990000 564px,#990000 576px,#990000 588px,#990000 600px,#990000 612px,#990000 624px,#990000 636px,#990000 640px) 0 32px/640px 4px no-repeat,linear-gradient(90deg,#009912 0px,#009911 12px,#009911 24px,#009910 36px,#00990f 48px,#00990e 60px,#00990d 72px,#00990c 84px,#00990b 96px,#00990a 108px,#009909 120px,#009908 132px,#009908 133.5px,#00ff0d 133.51px,#18ff0c 144px,#37ff0a 156px,#58ff07 168px,#7cff05 180px,#a3fe02 192px,#c2ff00 201.5px,#769900 201.51px,#7b9900 204px,#969900 216px,#998200 228px,#996e00 240px,#995e00 252px,#995200 264px,#994700 276px,#993e00 288px,#993600 300px,#993000 312px,#992a00 324px,#992500 336px,#992000 348px,#991c00 360px,#991800 372px,#991500 384px,#991200 396px,#990f00 408px,#990d00 420px,#990a00 432px,#990800 444px,#990600 456px,#990400 468px,#990300 480px,#990100 492px,#990000 504px,#990000 516px,#990000 528px,#990000 540px,#990000 552px,#990000 564px,#990000 576px,#990000 588px,#990000 600px,#990000 612px,#990000 624px,#990000 636px,#990000 640px) 0 36px/640px 4px no-repeat,linear-gradient(90deg,#009916 0px,#009915 12px,#009915 24px,#009914 36px,#009913 48px,#009913 60px,#009912 72px,#009911 84px,#009910 96px,#009910 108px,#00990f 120px,#00990e 132px,#00990d 134.5px,#00ff16 134.51px,#17ff15 144px,#36ff13 156px,#58ff11 168px,#7cff0f 180px,#a3ff0d 192px,#cdff0a 204px,#fbff07 216px,#ffd703 228px,#ffb600 240px,#fead00 244.5px,#996600 244.51px,#995d00 252px,#995100 264px,#994600 276px,#993d00 288px,#993500 300px,#992f00 312px,#992900 324px,#992400 336px,#991f00 348px,#991b00 360px,#991800 372px,#991400 384px,#991100 396px,#990f00 408px,#990c00 420px,#990a00 432px,#990800 444px,#990600 456px,#990400 468px,#990200 480px,#990100 492px,#990000 504px,#990000 516px,#990000 528px,#990000 540px,#990000 552px,#990000 564px,#990000 576px,#990000 588px,#990000 600px,#990000 612px,#990000 624px,#990000 636px,#990000 640px) 0 40px/640px 4px no-repeat,linear-gradient(90deg,#00991a 0px,#00991a 12px,#009919 24px,#009919 36px,#009918 48px,#009917 60px,#009917 72px,#009916 84px,#009915 96px,#009915 108px,#009914 120px,#009913 132px,#009913 135.5px,#01ff20 135.51px,#15ff1f 144px,#35ff1d 156px,#57ff1b 168px,#7cfe1a 180px,#a3ff18 192px,#ceff15 204px,#fdff13 216px,#ffd60e 228px,#ffb50a 240px,#ff9b06 252px,#ff8504 264px,#ff7401 276px,#ff6600 287.5px,#993c00 287.51px,#993c00 288px,#993500 300px,#992e00 312px,#992800 324px,#992300 336px,#991f00 348px,#991b00 360px,#991700 372px,#991400 384px,#991100 396px,#990e00 408px,#990c00 420px,#990900 432px,#990700 444px,#990500 456px,#990300 468px,#990200 480px,#990000 492px,#990000 504px,#990000 516px,#990000 528px,#990000 540px,#990000 552px,#990000 564px,#990000 576px,#990000 588px,#990000 600px,#990000 612px,#990000 624px,#990000 636px,#990000 640px) 0 44px/640px 4px no-repeat,linear-gradient(90deg,#00991e 0px,#00991e 12px,#00991e 24px,#00991d 36px,#00991d 48px,#00991c 60px,#00991c 72px,#00991b 84px,#00991b 96px,#00991a 108px,#009919 120px,#009919 132px,#009919 135.5px,#00ff29 135.51px,#14ff28 144px,#34ff27 156px,#56ff26 168px,#7cff24 180px,#a4fe23 192px,#cfff21 204px,#feff1f 216px,#ffd418 228px,#ffb313 240px,#ff990f 252px,#ff840b 264px,#ff7208 276px,#ff6306 288px,#ff5604 300px,#ff4c02 312px,#ff4200 324px,#ff3e00 330.5px,#992400 330.51px,#992200 336px,#991e00 348px,#991a00 360px,#991600 372px,#991300 384px,#991000 396px,#990d00 408px,#990b00 420px,#990900 432px,#990700 444px,#990500 456px,#990300 468px,#990100 480px,#990000 492px,#990000 504px,#990000 516px,#990000 528px,#990000 540px,#990000 552px,#990000 564px,#990000 576px,#990000 588px,#990000 600px,#990000 612px,#990000 624px,#990000 636px,#990000 640px) 0 48px/640px 4px no-repeat,linear-gradient(90deg,#009923 0px,#009922 12px,#009922 24px,#009922 36px,#009921 48px,#009921 60px,#009921 72px,#009920 84px,#009920 96px,#009920 108px,#00991f 120px,#00991f 132px,#00991e 136.5px,#01ff33 136.51px,#12ff33 144px,#33ff32 156px,#56ff31 168px,#7bff2f 180px,#a4ff2e 192px,#d0ff2d 204px,#fffd2b 216px,#ffd223 228px,#feb11c 240px,#ff9717 252px,#ff8213 264px,#ff700f 276px,#ff620c 288px,#ff5509 300px,#ff4a07 312px,#ff4105 324px,#ff3804 336px,#ff3102 348px,#ff2a01 360px,#fe2400 372px,#ff2400 373.5px,#991500 373.51px,#991200 384px,#991000 396px,#990d00 408px,#990a00 420px,#990800 432px,#990600 444px,#990400 456px,#990200 468px,#990100 480px,#990000 492px,#990000 504px,#990000 516px,#990000 528px,#990000 540px,#990000 552px,#990000 564px,#990000 576px,#990000 588px,#990000 600px,#990000 612px,#990000 624px,#990000 636px,#990000 640px) 0 52px/640px 4px no-repeat,linear-gradient(90deg,#009927 0px,#009927 12px,#009927 24px,#009927 36px,#009926 48px,#009926 60px,#009926 72px,#009926 84px,#009925 96px,#009925 108px,#009925 120px,#009925 132px,#009924 137.5px,#01ff3d 137.51px,#11ff3d 144px,#32ff3c 156px,#55ff3c 168px,#7bff3b 180px,#a4ff3a 192px,#d1ff39 204px,#fefc38 216px,#fed12e 228px,#feb026 240px,#fe961f 252px,#ff801a 264px,#ff6f16 276px,#ff6012 288px,#ff540f 300px,#ff490d 312px,#ff3f0a 324px,#ff3708 336px,#fe3007 348px,#ff2905 360px,#ff2304 372px,#ff1e02 384px,#ff1901 396px,#ff1500 408px,#ff1200 416.5px,#990a00 416.51px,#990a00 420px,#990800 432px,#990600 444px,#990400 456px,#990200 468px,#990000 480px,#990000 492px,#990000 504px,#990000 516px,#990000 528px,#990000 540px,#990000 552px,#990000 564px,#990000 576px,#990000 588px,#990000 600px,#990000 612px,#990000 624px,#990000 636px,#990000 640px) 0 56px/640px 4px no-repeat,linear-gradient(90deg,#00992b 0px,#00992b 12px,#00992b 24px,#00992b 36px,#00992b 48px,#00992b 60px,#00992b 72px,#00992b 84px,#00992b 96px,#00992b 108px,#00992b 120px,#00992b 132px,#00992b 137.5px,#00ff47 137.51px,#0fff47 144px,#31ff47 156px,#54ff47 168px,#7bfe47 180px,#a4ff46 192px,#d2ff46 204px,#fffa45 216px,#ffcf38 228px,#ffae2f 240px,#ff9428 252px,#ff7f22 264px,#fe6d1d 276px,#ff5f19 288px,#ff5215 300px,#ff4712 312px,#ff3e10 324px,#ff360d 336px,#ff2e0b 348px,#ff2809 360px,#ff2208 372px,#ff1d06 384px,#ff1805 396px,#fe1404 408px,#ff1003 420px,#ff0c02 432px,#ff0901 444px,#ff0600 456px,#ff0500 459.5px,#990300 459.51px,#990100 468px,#990000 480px,#990000 492px,#990000 504px,#990000 516px,#990000 528px,#990000 540px,#990000 552px,#990000 564px,#990000 576px,#990000 588px,#990000 600px,#990000 612px,#990000 624px,#990000 636px,#990000 640px) 0 60px/640px 4px no-repeat,linear-gradient(90deg,#009930 0px,#009930 12px,#009930 24px,#009930 36px,#009930 48px,#009930 60px,#009930 72px,#009930 84px,#009931 96px,#009931 108px,#009931 120px,#009931 132px,#009931 138.5px,#01ff52 138.51px,#0eff52 144px,#2fff52 156px,#53ff52 168px,#7afe53 180px,#a5fe53 192px,#d2ff53 204px,#fff952 216px,#fecd44 228px,#feac39 240px,#fe9230 252px,#fe7d2a 264px,#ff6c24 276px,#ff5d1f 288px,#ff511b 300px,#ff4618 312px,#ff3d15 324px,#ff3412 336px,#ff2d10 348px,#ff270e 360px,#ff210c 372px,#ff1c0a 384px,#ff1709 396px,#ff1307 408px,#ff0f06 420px,#ff0b05 432px,#ff0804 444px,#ff0503 456px,#ff0202 468px,#ff0001 478.5px,#990000 478.51px,#990000 480px,#990000 492px,#990000 504px,#990000 516px,#990000 528px,#990000 540px,#990000 552px,#990000 564px,#990000 576px,#990000 588px,#990000 600px,#990000 612px,#990000 624px,#990000 636px,#990000 640px) 0 64px/640px 4px no-repeat,linear-gradient(90deg,#009935 0px,#009935 12px,#009935 24px,#009935 36px,#009935 48px,#009936 60px,#009936 72px,#009936 84px,#009936 96px,#009937 108px,#009937 120px,#009937 132px,#009937 139.5px,#02ff5d 139.51px,#0cff5d 144px,#2eff5e 156px,#53ff5e 168px,#7aff5f 180px,#a5ff60 192px,#d3ff61 204px,#fff75f 216px,#ffcc4f 228px,#ffaa43 240px,#ff9039 252px,#fe7b32 264px,#fe6a2b 276px,#ff5c26 288px,#ff4f21 300px,#fe451d 312px,#ff3b1a 324px,#ff3317 336px,#ff2c14 348px,#ff2612 360px,#ff2010 372px,#ff1b0e 384px,#ff160c 396px,#fe120b 408px,#fe0e09 420px,#ff0a08 432px,#fe0707 444px,#ff0406 456px,#ff0105 468px,#ff0004 474.5px,#990002 474.51px,#990002 480px,#990002 492px,#990001 504px,#990001 516px,#990000 528px,#990000 540px,#990000 552px,#990000 564px,#990000 576px,#990000 588px,#990000 600px,#990000 612px,#990000 624px,#990000 636px,#990000 640px) 0 68px/640px 4px no-repeat,linear-gradient(90deg,#009939 0px,#00993a 12px,#00993a 24px,#00993a 36px,#00993b 48px,#00993b 60px,#00993b 72px,#00993c 84px,#00993c 96px,#00993d 108px,#00993d 120px,#00993e 132px,#00993e 139.5px,#00ff68 139.51px,#0bff68 144px,#2dff69 156px,#52fe6a 168px,#7aff6c 180px,#a5ff6d 192px,#d4ff6e 204px,#fff56c 216px,#ffca5a 228px,#ffa94d 240px,#ff8f42 252px,#fe7a39 264px,#ff6932 276px,#ff5a2c 288px,#ff4e27 300px,#ff4323 312px,#ff3a1f 324px,#ff321c 336px,#ff2b19 348px,#ff2416 360px,#ff1f14 372px,#ff1a12 384px,#ff1510 396px,#ff110e 408px,#fe0d0d 420px,#ff090b 432px,#ff060a 444px,#ff0309 456px,#ff0008 468px,#ff0007 470.5px,#990004 470.51px,#990004 480px,#990003 492px,#990003 504px,#990002 516px,#990002 528px,#990001 540px,#990001 552px,#990000 564px,#990000 576px,#990000 588px,#990000 600px,#990000 612px,#990000 624px,#990000 636px,#990000 640px) 0 72px/640px 4px no-repeat,linear-gradient(90deg,#00993e 0px,#00993e 12px,#00993f 24px,#00993f 36px,#009940 48px,#009940 60px,#009941 72px,#009942 84px,#009942 96px,#009943 108px,#009944 120px,#009944 132px,#009945 140.5px,#01ff73 140.51px,#09ff74 144px,#2cfe75 156px,#51ff77 168px,#79ff79 180px,#a5ff7b 192px,#d5ff7d 204px,#fff47a 216px,#ffc866 228px,#ffa757 240px,#ff8d4b 252px,#ff7841 264px,#ff673a 276px,#fe5833 288px,#ff4c2e 300px,#ff4229 312px,#ff3925 324px,#fe3121 336px,#ff291e 348px,#ff231b 360px,#ff1e18 372px,#ff1816 384px,#ff1414 396px,#ff1012 408px,#ff0c10 420px,#ff080f 432px,#ff050d 444px,#ff020c 456px,#ff000b 466.5px,#990006 466.51px,#990006 468px,#990005 480px,#990005 492px,#990004 504px,#990004 516px,#990003 528px,#990003 540px,#990002 552px,#990002 564px,#990001 576px,#990001 588px,#990000 600px,#990000 612px,#990000 624px,#990000 636px,#990000 640px) 0 76px/640px 4px no-repeat,linear-gradient(90deg,#009943 0px,#009943 12px,#009944 24px,#009945 36px,#009945 48px,#009946 60px,#009947 72px,#009947 84px,#009948 96px,#009949 108px,#00994a 120px,#00994b 132px,#00994c 141.5px,#02ff7f 141.51px,#07ff80 144px,#2aff82 156px,#50ff84 168px,#79ff86 180px,#a6ff89 192px,#d6ff8b 204px,#fff287 216px,#fec672 228px,#ffa561 240px,#ff8b54 252px,#fe764a 264px,#fe6541 276px,#ff573a 288px,#ff4b34 300px,#ff402f 312px,#ff372a 324px,#ff2f26 336px,#ff2822 348px,#ff221f 360px,#ff1c1d 372px,#ff171a 384px,#ff1318 396px,#fe0f16 408px,#ff0b14 420px,#ff0712 432px,#ff0410 444px,#ff010f 456px,#ff000e 462.5px,#990008 462.51px,#980008 468px,#990007 480px,#990006 492px,#990006 504px,#990005 516px,#990005 528px,#990004 540px,#990003 552px,#990003 564px,#990002 576px,#990002 588px,#990002 600px,#990001 612px,#990001 624px,#990001 636px,#990000 640px) 0 80px/640px 4px no-repeat,linear-gradient(90deg,#009948 0px,#009948 12px,#009949 24px,#00994a 36px,#00994b 48px,#00994c 60px,#00994d 72px,#00994e 84px,#00994f 96px,#009950 108px,#009951 120px,#009952 132px,#009953 141.5px,#00ff8b 141.51px,#06ff8c 144px,#29fe8e 156px,#4fff91 168px,#79ff94 180px,#a6ff97 192px,#d7ff9b 204px,#fff095 216px,#ffc47d 228px,#ffa36b 240px,#ff895d 252px,#ff7552 264px,#ff6448 276px,#ff5541 288px,#ff493a 300px,#ff3f34 312px,#ff362f 324px,#ff2e2b 336px,#ff2727 348px,#ff2124 360px,#ff1b21 372px,#ff161e 384px,#ff121c 396px,#fe0d19 408px,#ff0a17 420px,#ff0615 432px,#ff0314 444px,#ff0012 456px,#ff0012 458.5px,#99000a 458.51px,#98000a 468px,#990009 480px,#990008 492px,#990007 504px,#990007 516px,#990006 528px,#990005 540px,#990005 552px,#990004 564px,#990004 576px,#990003 588px,#990003 600px,#990002 612px,#990002 624px,#990002 636px,#990002 640px) 0 84px/640px 4px no-repeat,linear-gradient(90deg,#00994d 0px,#00994e 12px,#00994e 24px,#00994f 36px,#009950 48px,#009951 60px,#009953 72px,#009954 84px,#009955 96px,#009956 108px,#009958 120px,#009959 132px,#00995b 142.5px,#01ff98 142.51px,#04ff98 144px,#28ff9b 156px,#4eff9e 168px,#78ffa2 180px,#a6ffa6 192px,#d9ffaa 204px,#ffeea4 216px,#ffc28a 228px,#ffa176 240px,#ff8866 252px,#fe735a 264px,#ff6250 276px,#ff5447 288px,#ff4840 300px,#ff3d3a 312px,#ff3435 324px,#ff2d30 336px,#ff262c 348px,#ff1f28 360px,#ff1a25 372px,#ff1522 384px,#ff111f 396px,#ff0c1d 408px,#ff091b 420px,#ff0519 432px,#ff0217 444px,#ff0015 454.5px,#99000c 454.51px,#99000c 456px,#99000b 468px,#99000b 480px,#99000a 492px,#990009 504px,#990008 516px,#990008 528px,#990007 540px,#990006 552px,#990006 564px,#990005 576px,#990005 588px,#990004 600px,#990004 612px,#990003 624px,#990003 636px,#990003 640px) 0 88px/640px 4px no-repeat,linear-gradient(90deg,#009952 0px,#009953 12px,#009954 24px,#009955 36px,#009956 48px,#009957 60px,#009959 72px,#00995a 84px,#00995c 96px,#00995d 108px,#00995f 120px,#009961 132px,#009963 143.5px,#02ffa5 143.51px,#02ffa5 144px,#26ffa8 156px,#4dffac 168px,#78feb1 180px,#a7ffb5 192px,#daffba 204px,#ffecb2 216px,#ffc096 228px,#ff9f80 240px,#ff8670 252px,#ff7162 264px,#ff6058 276px,#ff524e 288px,#ff4647 300px,#ff3c40 312px,#ff333a 324px,#ff2b35 336px,#ff2431 348px,#ff1e2d 360px,#ff1929 372px,#ff1426 384px,#fe0f23 396px,#ff0b21 408px,#ff081e 420px,#ff041c 432px,#ff011a 444px,#ff0019 450.5px,#99000f 450.51px,#99000e 456px,#99000d 468px,#99000c 480px,#99000b 492px,#99000b 504px,#99000a 516px,#990009 528px,#990008 540px,#990008 552px,#990007 564px,#990006 576px,#990006 588px,#990005 600px,#990005 612px,#990004 624px,#990004 636px,#990004 640px) 0 92px/640px 4px no-repeat,linear-gradient(90deg,#009957 0px,#009958 12px,#009959 24px,#00995b 36px,#00995c 48px,#00995d 60px,#00995f 72px,#009960 84px,#009962 96px,#009964 108px,#009966 120px,#009968 132px,#00996a 143.5px,#00ffb2 143.51px,#00ffb2 144px,#25ffb6 156px,#4cffbb 168px,#78ffc0 180px,#a7ffc5 192px,#dbffcb 204px,#ffeac1 216px,#ffbfa2 228px,#ff9e8b 240px,#ff8479 252px,#ff6f6b 264px,#ff5e5f 276px,#ff5055 288px,#ff454d 300px,#ff3a46 312px,#ff3240 324px,#ff2a3a 336px,#ff2336 348px,#ff1d31 360px,#ff182e 372px,#ff132a 384px,#ff0e27 396px,#ff0a24 408px,#ff0722 420px,#ff031f 432px,#ff001d 444px,#ff001d 446.5px,#990011 446.51px,#990010 456px,#99000f 468px,#99000e 480px,#99000d 492px,#99000c 504px,#99000b 516px,#99000b 528px,#99000a 540px,#990009 552px,#990008 564px,#990008 576px,#990007 588px,#990007 600px,#990006 612px,#990006 624px,#990005 636px,#990005 640px) 0 96px/640px 4px no-repeat,linear-gradient(90deg,#00995c 0px,#00995d 12px,#00995f 24px,#009960 36px,#009962 48px,#009963 60px,#009965 72px,#009967 84px,#009969 96px,#00996b 108px,#00996d 120px,#009970 132px,#009973 144px,#009973 144.5px,#01ffc0 144.51px,#23ffc4 156px,#4bffc9 168px,#77ffcf 180px,#a7ffd5 192px,#dcffdc 204px,#ffe9d0 216px,#ffbdaf 228px,#ff9c96 240px,#fe8283 252px,#fe6d73 264px,#ff5d67 276px,#ff4f5c 288px,#ff4353 300px,#ff394c 312px,#ff3045 324px,#ff2940 336px,#ff223a 348px,#ff1c36 360px,#fe1632 372px,#ff122e 384px,#ff0d2b 396px,#fe0928 408px,#ff0625 420px,#ff0223 432px,#ff0021 442.5px,#990013 442.51px,#980013 444px,#990012 456px,#990011 468px,#990010 480px,#99000f 492px,#99000e 504px,#99000d 516px,#99000c 528px,#99000b 540px,#99000b 552px,#99000a 564px,#990009 576px,#990009 588px,#990008 600px,#990007 612px,#990007 624px,#990006 636px,#990006 640px) 0 100px/640px 4px no-repeat,linear-gradient(90deg,#009962 0px,#009963 12px,#009965 24px,#009966 36px,#009968 48px,#00996a 60px,#00996c 72px,#00996e 84px,#009970 96px,#009972 108px,#009975 120px,#009978 132px,#00997b 144px,#00997b 145.5px,#02ffce 145.51px,#22ffd3 156px,#4affd8 168px,#77ffdf 180px,#a8ffe6 192px,#ddffee 204px,#ffe7df 216px,#ffbbbc 228px,#ff9aa1 240px,#ff808d 252px,#ff6c7c 264px,#ff5b6f 276px,#ff4d63 288px,#fe415a 300px,#ff3752 312px,#ff2f4b 324px,#ff2745 336px,#ff203f 348px,#ff1a3b 360px,#fe1536 372px,#fe1032 384px,#fe0c2f 396px,#ff082c 408px,#ff0529 420px,#ff0126 432px,#ff0025 438.5px,#990016 438.51px,#990015 444px,#990014 456px,#990013 468px,#990011 480px,#990010 492px,#99000f 504px,#99000e 516px,#99000e 528px,#99000d 540px,#99000c 552px,#99000b 564px,#99000a 576px,#99000a 588px,#990009 600px,#990009 612px,#990008 624px,#990008 636px,#990007 640px) 0 104px/640px 4px no-repeat,linear-gradient(90deg,#009967 0px,#009969 12px,#00996a 24px,#00996c 36px,#00996e 48px,#009970 60px,#009972 72px,#009975 84px,#009977 96px,#00997a 108px,#00997d 120px,#009980 132px,#009983 144px,#009984 145.5px,#00ffdc 145.51px,#20ffe1 156px,#49ffe8 168px,#76ffef 180px,#a8fff7 192px,#ddfdff 204px,#ffe5ef 216px,#feb8c9 228px,#ff98ac 240px,#ff7e96 252px,#ff6a85 264px,#ff5977 276px,#ff4b6b 288px,#ff4061 300px,#ff3658 312px,#ff2d51 324px,#ff264a 336px,#ff1f44 348px,#ff193f 360px,#ff143b 372px,#ff0f37 384px,#ff0b33 396px,#ff072f 408px,#ff042c 420px,#ff002a 432px,#ff0029 434.5px,#990018 434.51px,#990017 444px,#990016 456px,#990014 468px,#990013 480px,#990012 492px,#990011 504px,#990010 516px,#99000f 528px,#99000e 540px,#99000d 552px,#99000d 564px,#99000c 576px,#99000b 588px,#99000a 600px,#99000a 612px,#990009 624px,#990009 636px,#990009 640px) 0 108px/640px 4px no-repeat,linear-gradient(90deg,#00996d 0px,#00996e 12px,#009970 24px,#009972 36px,#009974 48px,#009977 60px,#009979 72px,#00997c 84px,#00997f 96px,#009982 108px,#009985 120px,#009988 132px,#00998c 144px,#00998d 146.5px,#01feeb 146.51px,#1efef1 156px,#48fff8 168px,#75fdff 180px,#a1f4ff 192px,#cfebff 204px,#fee2ff 216px,#ffb6d6 228px,#ff96b8 240px,#ff7ca0 252px,#fe688e 264px,#ff577e 276px,#ff4a72 288px,#ff3e67 300px,#ff345e 312px,#ff2c56 324px,#fe244f 336px,#ff1e49 348px,#ff1844 360px,#ff133f 372px,#ff0e3b 384px,#ff0a37 396px,#ff0633 408px,#ff0230 420px,#ff002d 430.5px,#99001b 430.51px,#99001b 432px,#990019 444px,#990018 456px,#990016 468px,#990015 480px,#990014 492px,#990013 504px,#990012 516px,#990011 528px,#990010 540px,#99000f 552px,#99000e 564px,#99000d 576px,#99000c 588px,#99000c 600px,#99000b 612px,#99000a 624px,#99000a 636px,#99000a 640px) 0 112px/640px 4px no-repeat,linear-gradient(90deg,#009972 0px,#009974 12px,#009976 24px,#009978 36px,#00997b 48px,#00997d 60px,#009980 72px,#009983 84px,#009986 96px,#009989 108px,#00998d 120px,#009991 132px,#009995 144px,#009996 147.5px,#03fffb 147.51px,#1dfdff 156px,#44f5ff 168px,#6dedff 180px,#97e4ff 192px,#c2dcff 204px,#efd3ff 216px,#feb4e4 228px,#ff93c3 240px,#ff7aaa 252px,#ff6697 264px,#ff5687 276px,#ff4879 288px,#ff3d6e 300px,#ff3364 312px,#ff2a5c 324px,#ff2355 336px,#ff1c4e 348px,#fe1749 360px,#ff1143 372px,#fe0d3f 384px,#ff093b 396px,#ff0537 408px,#ff0134 420px,#fe0032 427.5px,#99001d 427.51px,#99001d 432px,#99001b 444px,#99001a 456px,#990018 468px,#990017 480px,#990015 492px,#990014 504px,#990013 516px,#990012 528px,#990011 540px,#990010 552px,#99000f 564px,#99000f 576px,#99000e 588px,#99000d 600px,#99000c 612px,#99000c 624px,#99000b 636px,#99000b 640px) 0 116px/640px 4px no-repeat,linear-gradient(90deg,#009978 0px,#00997a 12px,#00997c 24px,#00997f 36px,#009981 48px,#009984 60px,#009987 72px,#00998a 84px,#00998e 96px,#009991 108px,#009995 120px,#009799 132px,#009399 144px,#009299 147.5px,#01f3ff 147.51px,#19eeff 156px,#3fe6ff 168px,#66deff 180px,#8ed6ff 192px,#b7cdff 204px,#e1c5ff 216px,#ffb2f1 228px,#ff91cf 240px,#ff78b5 252px,#ff64a0 264px,#ff548f 276px,#ff4680 288px,#ff3b75 300px,#ff316a 312px,#ff2962 324px,#ff225a 336px,#fe1b53 348px,#fe154d 360px,#ff1048 372px,#ff0c43 384px,#ff083f 396px,#ff043b 408px,#ff0037 420px,#ff0036 423.5px,#990020 423.51px,#99001f 432px,#99001d 444px,#99001b 456px,#99001a 468px,#990018 480px,#990017 492px,#990016 504px,#990015 516px,#990014 528px,#990013 540px,#990012 552px,#990011 564px,#990010 576px,#99000f 588px,#99000e 600px,#99000e 612px,#99000d 624px,#99000c 636px,#99000c 640px) 0 120px/640px 4px no-repeat,linear-gradient(90deg,#00997e 0px,#009980 12px,#009983 24px,#009985 36px,#009988 48px,#00998b 60px,#00998e 72px,#009992 84px,#009996 96px,#009799 108px,#009399 120px,#008f99 132px,#008b99 144px,#008999 148.5px,#02e4ff 148.51px,#16e0ff 156px,#3ad8ff 168px,#60d1ff 180px,#86c9ff 192px,#adc0ff 204px,#d5b8ff 216px,#feafff 228px,#ff8fdb 240px,#ff76bf 252px,#ff62a9 264px,#ff5297 276px,#ff4588 288px,#ff397b 300px,#ff3071 312px,#ff2767 324px,#ff205f 336px,#ff1a58 348px,#fe1452 360px,#ff0f4c 372px,#ff0a47 384px,#ff0643 396px,#ff033f 408px,#ff003b 419.5px,#990023 419.51px,#990023 420px,#990021 432px,#99001f 444px,#99001d 456px,#99001c 468px,#99001a 480px,#990019 492px,#990018 504px,#990016 516px,#990015 528px,#990014 540px,#990013 552px,#990012 564px,#990011 576px,#990010 588px,#990010 600px,#99000f 612px,#99000e 624px,#99000d 636px,#99000d 640px) 0 124px/640px 4px no-repeat,linear-gradient(90deg,#009984 0px,#009986 12px,#009989 24px,#00998c 36px,#00998f 48px,#009992 60px,#009996 72px,#009799 84px,#009499 96px,#009099 108px,#008b99 120px,#008799 132px,#008399 144px,#008299 148.5px,#00d8ff 148.51px,#13d3ff 156px,#36ccfe 168px,#5ac4fe 180px,#7ebdff 192px,#a3b5ff 204px,#c9acff 216px,#f0a4ff 228px,#ff8de7 240px,#fe74c9 252px,#fe60b2 264px,#ff509f 276px,#ff438f 288px,#ff3882 300px,#ff2e77 312px,#ff266d 324px,#ff1f65 336px,#fe185d 348px,#ff1357 360px,#ff0e51 372px,#ff094c 384px,#ff0547 396px,#ff0242 408px,#ff0040 415.5px,#990026 415.51px,#990025 420px,#990023 432px,#990021 444px,#99001f 456px,#99001e 468px,#99001c 480px,#99001b 492px,#990019 504px,#990018 516px,#990017 528px,#990016 540px,#990015 552px,#990014 564px,#990013 576px,#990012 588px,#990011 600px,#990010 612px,#99000f 624px,#99000f 636px,#99000e 640px) 0 128px/640px 4px no-repeat,linear-gradient(90deg,#00998a 0px,#00998d 12px,#009990 24px,#009993 36px,#009996 48px,#009799 60px,#009499 72px,#009099 84px,#008c99 96px,#008899 108px,#008499 120px,#008099 132px,#007c99 144px,#007a99 149.5px,#01cbfe 149.51px,#11c8ff 156px,#32c1ff 168px,#54b9ff 180px,#77b2fe 192px,#9aaaff 204px,#bfa2ff 216px,#e49aff 228px,#ff8bf3 240px,#ff72d4 252px,#ff5ebb 264px,#ff4ea7 276px,#ff4197 288px,#ff3689 300px,#ff2c7d 312px,#ff2473 324px,#ff1d6a 336px,#ff1762 348px,#ff115c 360px,#ff0c55 372px,#ff0850 384px,#ff044b 396px,#ff0046 408px,#ff0045 411.5px,#990029 411.51px,#990028 420px,#990025 432px,#990023 444px,#990021 456px,#99001f 468px,#99001e 480px,#99001c 492px,#99001b 504px,#99001a 516px,#990018 528px,#990017 540px,#990016 552px,#990015 564px,#990014 576px,#990013 588px,#990012 600px,#990011 612px,#990011 624px,#990010 636px,#990010 640px) 0 132px/640px 4px no-repeat,linear-gradient(90deg,#009990 0px,#009993 12px,#009996 24px,#009799 36px,#009499 48px,#009099 60px,#008d99 72px,#008999 84px,#008599 96px,#008299 108px,#007e99 120px,#007a99 132px,#007699 144px,#007399 150.5px,#01c0ff 150.51px,#0fbdff 156px,#2eb6ff 168px,#4faffe 180px,#70a7ff 192px,#92a0fe 204px,#b598ff 216px,#d990fe 228px,#fd88ff 240px,#fe70df 252px,#ff5cc5 264px,#ff4cb0 276px,#ff3f9f 288px,#fe3490 300px,#ff2b84 312px,#ff2379 324px,#ff1c70 336px,#ff1668 348px,#fe1060 360px,#ff0b5a 372px,#fe0754 384px,#ff034f 396px,#fe004b 407.5px,#99002c 407.51px,#99002c 408px,#99002a 420px,#990027 432px,#990025 444px,#990023 456px,#990021 468px,#990020 480px,#99001e 492px,#99001d 504px,#99001b 516px,#99001a 528px,#990019 540px,#990017 552px,#990016 564px,#990015 576px,#990014 588px,#990013 600px,#990013 612px,#990012 624px,#990011 636px,#990011 640px) 0 136px/640px 4px no-repeat,linear-gradient(90deg,#009996 0px,#009799 12px,#009499 24px,#009199 36px,#008d99 48px,#008a99 60px,#008699 72px,#008399 84px,#007f99 96px,#007b99 108px,#007799 120px,#007499 132px,#007099 144px,#006d99 150.5px,#00b6ff 150.51px,#0cb3ff 156px,#2bacff 168px,#4aa5ff 180px,#6a9eff 192px,#8b97fe 204px,#ac8fff 216px,#cf87fe 228px,#f280ff 240px,#ff6eea 252px,#ff5ace 264px,#ff4ab8 276px,#ff3da6 288px,#fe3397 300px,#ff298a 312px,#ff217f 324px,#fe1a75 336px,#ff146d 348px,#ff0f65 360px,#ff0a5f 372px,#ff0658 384px,#ff0253 396px,#ff0050 403.5px,#990030 403.51px,#99002f 408px,#99002c 420px,#990029 432px,#990027 444px,#990025 456px,#990023 468px,#990021 480px,#990020 492px,#99001e 504px,#99001d 516px,#99001b 528px,#99001a 540px,#990019 552px,#990018 564px,#990017 576px,#990016 588px,#990015 600px,#990014 612px,#990013 624px,#990012 636px,#990012 640px) 0 140px/640px 4px no-repeat,linear-gradient(90deg,#009499 0px,#009199 12px,#008e99 24px,#008b99 36px,#008799 48px,#008499 60px,#008099 72px,#007d99 84px,#007999 96px,#007599 108px,#007299 120px,#006e99 132px,#006a99 144px,#006899 151.5px,#01acff 151.51px,#0aaafe 156px,#28a3ff 168px,#469dff 180px,#6595ff 192px,#848eff 204px,#a487ff 216px,#c57fff 228px,#e778fe 240px,#fe6cf5 252px,#ff58d8 264px,#ff48c1 276px,#ff3cae 288px,#ff319e 300px,#ff2891 312px,#ff2085 324px,#ff197b 336px,#ff1372 348px,#ff0d6a 360px,#ff0963 372px,#ff045d 384px,#ff0157 396px,#fe0056 399.5px,#980033 399.51px,#990031 408px,#98002e 420px,#99002c 432px,#990029 444px,#990027 456px,#990025 468px,#990023 480px,#990022 492px,#990020 504px,#99001e 516px,#99001d 528px,#99001c 540px,#99001a 552px,#990019 564px,#990018 576px,#990017 588px,#990016 600px,#990015 612px,#990014 624px,#990013 636px,#990013 640px) 0 144px/640px 4px no-repeat,linear-gradient(90deg,#008e99 0px,#008b99 12px,#008899 24px,#008599 36px,#008199 48px,#007e99 60px,#007b99 72px,#007799 84px,#007499 96px,#007099 108px,#006c99 120px,#006999 132px,#006599 144px,#006299 152.5px,#01a3ff 152.51px,#08a2ff 156px,#259bff 168px,#4294ff 180px,#608dfe 192px,#7e86ff 204px,#9d7ffe 216px,#bc78ff 228px,#dc70ff 240px,#fd69ff 252px,#ff56e2 264px,#ff47ca 276px,#ff3ab6 288px,#fe2fa5 300px,#ff2697 312px,#ff1e8b 324px,#ff1781 336px,#ff1177 348px,#ff0c6f 360px,#fe0768 372px,#ff0361 384px,#ff005c 395.5px,#990037 395.51px,#990037 396px,#990033 408px,#990030 420px,#99002e 432px,#99002b 444px,#990029 456px,#990027 468px,#990025 480px,#990023 492px,#990022 504px,#990020 516px,#99001f 528px,#99001d 540px,#99001c 552px,#99001b 564px,#99001a 576px,#990018 588px,#990017 600px,#990016 612px,#990016 624px,#990015 636px,#990014 640px) 0 148px/640px 4px no-repeat,linear-gradient(90deg,#008999 0px,#008699 12px,#008299 24px,#007f99 36px,#007c99 48px,#007999 60px,#007599 72px,#007299 84px,#006e99 96px,#006b99 108px,#006799 120px,#006499 132px,#006099 144px,#005d99 152.5px,#009bff 152.51px,#079aff 156px,#2293ff 168px,#3e8dfe 180px,#5b86ff 192px,#787fff 204px,#9678ff 216px,#b471fe 228px,#d36afe 240px,#f262fe 252px,#ff54ec 264px,#ff45d3 276px,#ff38be 288px,#fe2dad 300px,#ff249e 312px,#fe1d91 324px,#ff1686 336px,#ff107d 348px,#ff0b74 360px,#ff066c 372px,#ff0266 384px,#ff0062 391.5px,#99003a 391.51px,#990039 396px,#990036 408px,#980033 420px,#990030 432px,#99002d 444px,#99002b 456px,#990029 468px,#990027 480px,#990025 492px,#990023 504px,#990022 516px,#990020 528px,#99001f 540px,#99001d 552px,#99001c 564px,#99001b 576px,#99001a 588px,#990019 600px,#990018 612px,#990017 624px,#990016 636px,#990016 640px) 0 152px/640px 4px no-repeat,linear-gradient(90deg,#008399 0px,#008099 12px,#007d99 24px,#007a99 36px,#007799 48px,#007499 60px,#007099 72px,#006d99 84px,#006a99 96px,#006699 108px,#006399 120px,#005f99 132px,#005b99 144px,#005899 153.5px,#0193ff 153.51px,#0592ff 156px,#208cff 168px,#3b85ff 180px,#567fff 192px,#7278fe 204px,#8f71ff 216px,#ac6afe 228px,#ca63ff 240px,#e95cff 252px,#fe52f6 264px,#ff43dc 276px,#ff36c6 288px,#ff2cb4 300px,#ff23a5 312px,#ff1b97 324px,#ff148c 336px,#ff0f82 348px,#fe0979 360px,#ff0571 372px,#ff016a 384px,#ff0068 387.5px,#99003e 387.51px,#99003c 396px,#990038 408px,#990035 420px,#990032 432px,#99002f 444px,#99002d 456px,#99002b 468px,#990029 480px,#990027 492px,#990025 504px,#990023 516px,#990022 528px,#990020 540px,#99001f 552px,#99001e 564px,#99001c 576px,#99001b 588px,#99001a 600px,#990019 612px,#990018 624px,#990017 636px,#990017 640px) 0 156px/640px 4px no-repeat,linear-gradient(90deg,#007e99 0px,#007b99 12px,#007899 24px,#007599 36px,#007299 48px,#006f99 60px,#006c98 72px,#006899 84px,#006599 96px,#006299 108px,#005e99 120px,#005b99 132px,#005799 144px,#005499 154.5px,#018cff 154.51px,#038bff 156px,#1d85ff 168px,#377fff 180px,#5278ff 192px,#6d72ff 204px,#896bff 216px,#a564ff 228px,#c25dff 240px,#df56ff 252px,#fd4ffe 264px,#ff41e5 276px,#ff34ce 288px,#ff2abb 300px,#ff21ab 312px,#fe199e 324px,#fe1392 336px,#ff0d87 348px,#ff087e 360px,#ff0376 372px,#ff006f 383.5px,#990042 383.51px,#990042 384px,#99003e 396px,#99003b 408px,#990037 420px,#990034 432px,#990032 444px,#99002f 456px,#99002d 468px,#99002b 480px,#990029 492px,#990027 504px,#990025 516px,#990023 528px,#990022 540px,#990020 552px,#99001f 564px,#99001e 576px,#99001d 588px,#99001b 600px,#99001a 612px,#990019 624px,#980018 636px,#990018 640px) 0 160px/640px 4px no-repeat,linear-gradient(90deg,#007a99 0px,#007799 12px,#007499 24px,#007199 36px,#006e99 48px,#006a99 60px,#006799 72px,#006499 84px,#006199 96px,#005d98 108px,#005a99 120px,#005799 132px,#005399 144px,#005098 154.5px,#0085ff 154.51px,#0285ff 156px,#1b7fff 168px,#3478ff 180px,#4e72ff 192px,#696cff 204px,#8365ff 216px,#9f5fff 228px,#ba58ff 240px,#d751ff 252px,#f34aff 264px,#ff3eee 276px,#ff32d6 288px,#ff28c3 300px,#ff1fb2 312px,#ff18a4 324px,#fe1197 336px,#ff0c8d 348px,#ff0783 360px,#fe027b 372px,#ff0076 379.5px,#990046 379.51px,#990045 384px,#990041 396px,#99003d 408px,#99003a 420px,#990036 432px,#990034 444px,#990031 456px,#99002f 468px,#99002c 480px,#99002a 492px,#990028 504px,#990027 516px,#990025 528px,#990023 540px,#990022 552px,#990020 564px,#99001f 576px,#99001e 588px,#99001d 600px,#99001c 612px,#99001b 624px,#99001a 636px,#990019 640px) 0 164px/640px 4px no-repeat,linear-gradient(90deg,#007599 0px,#007299 12px,#006f99 24px,#006c99 36px,#006999 48px,#006699 60px,#006399 72px,#006099 84px,#005d99 96px,#005999 108px,#005699 120px,#005399 132px,#004f99 144px,#004c99 155.5px,#017eff 155.51px,#017eff 156px,#1979fe 168px,#3173ff 180px,#4a6cff 192px,#6466ff 204px,#7e60ff 216px,#9859ff 228px,#b353ff 240px,#ce4cff 252px,#ea45ff 264px,#ff3cf7 276px,#ff30de 288px,#ff26ca 300px,#ff1eb9 312px,#ff16aa 324px,#ff109d 336px,#ff0a92 348px,#ff0588 360px,#fe017f 372px,#ff007d 375.5px,#99004b 375.51px,#990047 384px,#990043 396px,#99003f 408px,#99003c 420px,#990039 432px,#990036 444px,#990033 456px,#990031 468px,#99002e 480px,#99002c 492px,#99002a 504px,#990028 516px,#990026 528px,#990025 540px,#990023 552px,#990022 564px,#990021 576px,#99001f 588px,#99001e 600px,#99001d 612px,#99001c 624px,#99001b 636px,#99001a 640px) 0 168px/640px 4px no-repeat,linear-gradient(90deg,#007199 0px,#006e99 12px,#006b99 24px,#006899 36px,#006599 48px,#006299 60px,#005f99 72px,#005c99 84px,#005999 96px,#005699 108px,#005299 120px,#004f99 132px,#004c99 144px,#004899 156px,#004899 156.5px,#0178ff 156.51px,#1773ff 168px,#2f6dff 180px,#4767ff 192px,#6061ff 204px,#795bff 216px,#9254ff 228px,#ac4eff 240px,#c747ff 252px,#e241ff 264px,#fd3aff 276px,#ff2ee7 288px,#ff24d2 300px,#ff1cc0 312px,#ff14b0 324px,#ff0ea3 336px,#ff0997 348px,#ff048d 360px,#ff0085 371.5px,#99004f 371.51px,#99004f 372px,#99004a 384px,#990046 396px,#990042 408px,#99003e 420px,#99003b 432px,#990038 444px,#990035 456px,#990032 468px,#990030 480px,#99002e 492px,#99002c 504px,#99002a 516px,#990028 528px,#990026 540px,#990025 552px,#990023 564px,#990022 576px,#990021 588px,#99001f 600px,#99001e 612px,#99001d 624px,#99001c 636px,#99001c 640px) 0 172px/640px 4px no-repeat,linear-gradient(90deg,#006d99 0px,#006a99 12px,#006799 24px,#006499 36px,#006199 48px,#005e99 60px,#005b99 72px,#005899 84px,#005599 96px,#005299 108px,#004f99 120px,#004c99 132px,#004899 144px,#004599 156px,#004599 156.5px,#0073ff 156.51px,#156dff 168px,#2c68ff 180px,#4462fe 192px,#5c5cff 204px,#7456ff 216px,#8d50ff 228px,#a649ff 240px,#c043ff 252px,#da3cff 264px,#f436ff 276px,#ff2cef 288px,#ff22d9 300px,#ff1ac7 312px,#ff13b7 324px,#fe0da9 336px,#fe079d 348px,#ff0292 360px,#ff008d 367.5px,#990054 367.51px,#990052 372px,#99004d 384px,#990048 396px,#990044 408px,#990041 420px,#99003d 432px,#99003a 444px,#990037 456px,#990034 468px,#990032 480px,#990030 492px,#99002e 504px,#99002c 516px,#99002a 528px,#990028 540px,#990026 552px,#990025 564px,#990023 576px,#990022 588px,#990021 600px,#99001f 612px,#99001e 624px,#99001d 636px,#99001d 640px) 0 176px/640px 4px no-repeat,linear-gradient(90deg,#006999 0px,#006699 12px,#006499 24px,#006199 36px,#005e99 48px,#005b99 60px,#005899 72px,#005599 84px,#005299 96px,#004f99 108px,#004c99 120px,#004899 132px,#004599 144px,#004299 156px,#004199 157.5px,#016dff 157.51px,#1368fe 168px,#2a63ff 180px,#415dff 192px,#5857fe 204px,#7051ff 216px,#884bff 228px,#a045ff 240px,#b93fff 252px,#d238ff 264px,#ec32ff 276px,#ff2af8 288px,#ff21e1 300px,#fe18ce 312px,#ff11bd 324px,#ff0baf 336px,#ff06a3 348px,#ff0198 360px,#ff0094 364.5px,#990058 364.51px,#990055 372px,#990050 384px,#99004b 396px,#980047 408px,#990043 420px,#99003f 432px,#99003c 444px,#990039 456px,#990036 468px,#990034 480px,#990031 492px,#99002f 504px,#99002d 516px,#99002b 528px,#99002a 540px,#990028 552px,#990026 564px,#990025 576px,#990023 588px,#990022 600px,#990021 612px,#990020 624px,#99001e 636px,#99001e 640px) 0 180px/640px 4px no-repeat,linear-gradient(90deg,#006599 0px,#006399 12px,#006099 24px,#005d99 36px,#005a99 48px,#005799 60px,#005499 72px,#005299 84px,#004f99 96px,#004b99 108px,#004899 120px,#004599 132px,#004299 144px,#003f99 156px,#003e99 158.5px,#0168ff 158.51px,#1164ff 168px,#275eff 180px,#3e58ff 192px,#5453ff 204px,#6b4dff 216px,#8347ff 228px,#9a41ff 240px,#b23bff 252px,#cb35ff 264px,#e42eff 276px,#fd28fe 288px,#ff1fe9 300px,#ff16d5 312px,#ff0fc4 324px,#ff09b5 336px,#fe04a8 348px,#ff009d 360px,#ff009d 360.5px,#99005d 360.51px,#990058 372px,#990052 384px,#98004e 396px,#990049 408px,#990045 420px,#990042 432px,#99003e 444px,#99003b 456px,#990038 468px,#990036 480px,#990033 492px,#990031 504px,#99002f 516px,#99002d 528px,#99002b 540px,#990029 552px,#990028 564px,#990026 576px,#990025 588px,#990023 600px,#990022 612px,#990021 624px,#990020 636px,#99001f 640px) 0 184px/640px 4px no-repeat,linear-gradient(90deg,#006299 0px,#005f99 12px,#005d99 24px,#005a99 36px,#005799 48px,#005499 60px,#005199 72px,#004e99 84px,#004b99 96px,#004899 108px,#004599 120px,#004299 132px,#003f99 144px,#003c99 156px,#003b99 158.5px,#0063ff 158.51px,#105fff 168px,#255aff 180px,#3b54ff 192px,#514eff 204px,#6749ff 216px,#7e43ff 228px,#953dff 240px,#ac37ff 252px,#c431ff 264px,#dc2bff 276px,#f525ff 288px,#ff1df0 300px,#ff15dc 312px,#ff0eca 324px,#ff08bb 336px,#ff03ae 348px,#ff00a6 356.5px,#990063 356.51px,#990061 360px,#99005b 372px,#990055 384px,#990050 396px,#99004c 408px,#990048 420px,#990044 432px,#990040 444px,#99003d 456px,#99003a 468px,#990038 480px,#990035 492px,#990033 504px,#990031 516px,#99002f 528px,#99002d 540px,#99002b 552px,#990029 564px,#990028 576px,#990026 588px,#990025 600px,#990023 612px,#990022 624px,#990021 636px,#980021 640px) 0 188px/640px 4px no-repeat,linear-gradient(90deg,#005f99 0px,#005c99 12px,#005999 24px,#005799 36px,#005499 48px,#005199 60px,#004e99 72px,#004b99 84px,#004899 96px,#004699 108px,#004399 120px,#003f99 132px,#003c99 144px,#003999 156px,#003999 159.5px,#015eff 159.51px,#0e5bff 168px,#2355ff 180px,#3850ff 192px,#4e4aff 204px,#6345ff 216px,#793fff 228px,#9039ff 240px,#a734ff 252px,#be2eff 264px,#d528ff 276px,#ed22ff 288px,#ff1bf8 300px,#ff13e3 312px,#ff0cd1 324px,#ff06c1 336px,#ff01b3 348px,#ff00af 352.5px,#990068 352.51px,#990064 360px,#99005e 372px,#990058 384px,#990053 396px,#99004e 408px,#99004a 420px,#990046 432px,#990043 444px,#99003f 456px,#99003c 468px,#99003a 480px,#990037 492px,#990035 504px,#990032 516px,#990030 528px,#99002e 540px,#99002c 552px,#99002b 564px,#990029 576px,#990028 588px,#990026 600px,#990025 612px,#980023 624px,#980022 636px,#990022 640px) 0 192px/640px 4px no-repeat,linear-gradient(90deg,#005b99 0px,#005999 12px,#005699 24px,#005499 36px,#005199 48px,#004e99 60px,#004b99 72px,#004899 84px,#004699 96px,#004399 108px,#004099 120px,#003d99 132px,#003a99 144px,#003799 156px,#003699 160.5px,#0159ff 160.51px,#0d56ff 168px,#2151ff 180px,#364cff 192px,#4b47fe 204px,#6041fe 216px,#753cfe 228px,#8b36ff 240px,#a130fe 252px,#b72bff 264px,#ce25fe 276px,#e51fff 288px,#fd19ff 300px,#ff11ea 312px,#ff0ad7 324px,#fe05c7 336px,#ff00b9 348px,#ff00b9 348.5px,#99006e 348.51px,#990067 360px,#990061 372px,#99005b 384px,#980055 396px,#990051 408px,#99004c 420px,#990048 432px,#990045 444px,#990041 456px,#99003e 468px,#99003b 480px,#990039 492px,#990036 504px,#990034 516px,#990032 528px,#990030 540px,#99002e 552px,#99002c 564px,#99002b 576px,#990029 588px,#990027 600px,#990026 612px,#990025 624px,#990023 636px,#990023 640px) 0 196px/640px 4px no-repeat,linear-gradient(90deg,#005899 0px,#005699 12px,#005399 24px,#005199 36px,#004e99 48px,#004b99 60px,#004999 72px,#004699 84px,#004399 96px,#004099 108px,#003d99 120px,#003a99 132px,#003799 144px,#003499 156px,#003399 160.5px,#0055ff 160.51px,#0b53ff 168px,#1f4dff 180px,#3348ff 192px,#4843ff 204px,#5c3eff 216px,#7138ff 228px,#8633ff 240px,#9c2dfe 252px,#b227ff 264px,#c822ff 276px,#de1cff 288px,#f516fe 300px,#fe0ff2 312px,#ff09de 324px,#fe03cd 336px,#ff00c3 344.5px,#990074 344.51px,#990072 348px,#99006b 360px,#990064 372px,#99005e 384px,#990058 396px,#990053 408px,#99004f 420px,#99004b 432px,#990047 444px,#990043 456px,#990040 468px,#99003d 480px,#99003b 492px,#990038 504px,#990036 516px,#990034 528px,#990031 540px,#990030 552px,#99002e 564px,#99002c 576px,#99002a 588px,#990029 600px,#990027 612px,#990026 624px,#990025 636px,#990024 640px) 0 200px/640px 4px no-repeat,linear-gradient(90deg,#005699 0px,#005399 12px,#005099 24px,#004e99 36px,#004b99 48px,#004999 60px,#004699 72px,#004399 84px,#004099 96px,#003e99 108px,#003b99 120px,#003899 132px,#003599 144px,#003299 156px,#003199 161.5px,#0151ff 161.51px,#0a4fff 168px,#1d4afe 180px,#3145ff 192px,#453fff 204px,#593afe 216px,#6d35ff 228px,#8230ff 240px,#972aff 252px,#ac25ff 264px,#c21ffe 276px,#d819ff 288px,#ee14ff 300px,#fe0df9 312px,#ff07e5 324px,#fe01d4 336px,#ff00ce 340.5px,#99007b 340.51px,#990076 348px,#99006e 360px,#990067 372px,#990060 384px,#99005b 396px,#990056 408px,#990051 420px,#99004d 432px,#990049 444px,#990046 456px,#990042 468px,#99003f 480px,#99003c 492px,#99003a 504px,#990037 516px,#990035 528px,#990033 540px,#990031 552px,#99002f 564px,#99002d 576px,#99002c 588px,#99002a 600px,#990029 612px,#990027 624px,#990026 636px,#990025 640px) 0 204px/640px 4px no-repeat,linear-gradient(90deg,#005399 0px,#005099 12px,#004e99 24px,#004b99 36px,#004999 48px,#004699 60px,#004399 72px,#004199 84px,#003e99 96px,#003b99 108px,#003899 120px,#003699 132px,#003399 144px,#003099 156px,#002f99 161.5px,#004eff 161.51px,#094bfe 168px,#1c46fe 180px,#2f41ff 192px,#423cfe 204px,#5637ff 216px,#6a32ff 228px,#7e2dff 240px,#9227fe 252px,#a722ff 264px,#bc1cfe 276px,#d117ff 288px,#e711ff 300px,#fd0bff 312px,#ff05ec 324px,#ff00da 336px,#ff00da 336.5px,#990082 336.51px,#990079 348px,#990071 360px,#99006a 372px,#980063 384px,#99005e 396px,#990058 408px,#990054 420px,#99004f 432px,#99004b 444px,#990048 456px,#990044 468px,#990041 480px,#99003e 492px,#99003c 504px,#990039 516px,#990037 528px,#990035 540px,#990033 552px,#990031 564px,#99002f 576px,#99002d 588px,#99002c 600px,#99002a 612px,#990029 624px,#990027 636px,#990027 640px) 0 208px/640px 4px no-repeat,linear-gradient(90deg,#005099 0px,#004e99 12px,#004b99 24px,#004999 36px,#004699 48px,#004499 60px,#004199 72px,#003e99 84px,#003c99 96px,#003999 108px,#003699 120px,#003399 132px,#003199 144px,#002e99 156px,#002c99 162.5px,#004aff 162.51px,#0848fe 168px,#1a43ff 180px,#2d3eff 192px,#4039ff 204px,#5334ff 216px,#662fff 228px,#7a2afe 240px,#8e24ff 252px,#a21fff 264px,#b61aff 276px,#cb14ff 288px,#e00ffe 300px,#f509ff 312px,#fe03f3 324px,#fe00e6 332.5px,#990089 332.51px,#990086 336px,#99007d 348px,#990074 360px,#98006d 372px,#990066 384px,#990060 396px,#99005b 408px,#990056 420px,#990052 432px,#99004d 444px,#99004a 456px,#990046 468px,#990043 480px,#990040 492px,#99003d 504px,#99003b 516px,#990038 528px,#990036 540px,#990034 552px,#990032 564px,#990030 576px,#99002f 588px,#99002d 600px,#99002b 612px,#99002a 624px,#990028 636px,#990028 640px) 0 212px/640px 4px no-repeat,linear-gradient(90deg,#004e99 0px,#004b99 12px,#004999 24px,#004699 36px,#004499 48px,#004199 60px,#003f99 72px,#003c99 84px,#003999 96px,#003799 108px,#003499 120px,#003199 132px,#002f99 144px,#002c99 156px,#002a99 163.5px,#0146ff 163.51px,#0745ff 168px,#1940ff 180px,#2b3bfe 192px,#3d36ff 204px,#5031ff 216px,#632cff 228px,#7627fe 240px,#8a22ff 252px,#9d1dff 264px,#b117ff 276px,#c512ff 288px,#da0dff 300px,#ef07ff 312px,#ff02fa 324px,#ff00f3 328.5px,#990091 328.51px,#99008a 336px,#990080 348px,#990078 360px,#990070 372px,#990069 384px,#990063 396px,#99005d 408px,#990058 420px,#990054 432px,#990050 444px,#99004c 456px,#990048 468px,#990045 480px,#990042 492px,#99003f 504px,#99003d 516px,#99003a 528px,#990038 540px,#990036 552px,#990034 564px,#990032 576px,#990030 588px,#99002e 600px,#99002d 612px,#99002b 624px,#99002a 636px,#990029 640px) 0 216px/640px 4px no-repeat,linear-gradient(90deg,#004b99 0px,#004999 12px,#004699 24px,#004499 36px,#004199 48px,#003f99 60px,#003c99 72px,#003a99 84px,#003799 96px,#003599 108px,#003299 120px,#002f99 132px,#002d99 144px,#002a99 156px,#002899 163.5px,#0043fe 163.51px,#0541ff 168px,#173dfe 180px,#2938fe 192px,#3b33ff 204px,#4d2eff 216px,#6029fe 228px,#7324fe 240px,#851fff 252px,#991aff 264px,#ac15ff 276px,#c010ff 288px,#d40bff 300px,#e805ff 312px,#fd00ff 324px,#fd00ff 324.5px,#980099 324.51px,#99008e 336px,#990084 348px,#99007b 360px,#990073 372px,#99006c 384px,#990066 396px,#990060 408px,#99005b 420px,#990056 432px,#990052 444px,#99004e 456px,#99004a 468px,#990047 480px,#990044 492px,#990041 504px,#99003e 516px,#99003c 528px,#990039 540px,#990037 552px,#990035 564px,#990033 576px,#990031 588px,#990030 600px,#99002e 612px,#99002c 624px,#99002b 636px,#99002b 640px) 0 220px/640px 4px no-repeat,linear-gradient(90deg,#004999 0px,#004699 12px,#004499 24px,#004299 36px,#003f99 48px,#003d99 60px,#003a99 72px,#003899 84px,#003599 96px,#003399 108px,#003099 120px,#002d99 132px,#002b99 144px,#002899 156px,#002699 164.5px,#0040ff 164.51px,#043eff 168px,#163aff 180px,#2735ff 192px,#3930fe 204px,#4b2cff 216px,#5d27ff 228px,#6f22ff 240px,#821dfe 252px,#9418ff 264px,#a713ff 276px,#bb0eff 288px,#ce09ff 300px,#e203ff 312px,#ef00ff 320.5px,#900099 320.51px,#930099 324px,#990092 336px,#990087 348px,#99007e 360px,#990076 372px,#99006f 384px,#990068 396px,#990063 408px,#99005d 420px,#990059 432px,#990054 444px,#990050 456px,#99004c 468px,#990049 480px,#990046 492px,#990043 504px,#990040 516px,#99003e 528px,#99003b 540px,#990039 552px,#990037 564px,#990035 576px,#990033 588px,#990031 600px,#99002f 612px,#99002e 624px,#99002c 636px,#99002c 640px) 0 224px/640px 4px no-repeat,linear-gradient(90deg,#004699 0px,#004499 12px,#004299 24px,#003f99 36px,#003d99 48px,#003b99 60px,#003899 72px,#003699 84px,#003399 96px,#003199 108px,#002e99 120px,#002b99 132px,#002999 144px,#002699 156px,#002499 165.5px,#013cff 165.51px,#033bff 168px,#1437ff 180px,#2532ff 192px,#372eff 204px,#4829ff 216px,#5a24ff 228px,#6c20fe 240px,#7e1bfe 252px,#9016ff 264px,#a311ff 276px,#b60cff 288px,#c907fe 300px,#dc02fe 312px,#e200ff 316.5px,#890099 316.51px,#8f0099 324px,#990096 336px,#99008b 348px,#990082 360px,#990079 372px,#990072 384px,#99006b 396px,#990065 408px,#990060 420px,#99005b 432px,#990056 444px,#990052 456px,#99004e 468px,#99004b 480px,#990048 492px,#990045 504px,#990042 516px,#99003f 528px,#99003d 540px,#99003a 552px,#990038 564px,#990036 576px,#990034 588px,#990032 600px,#990031 612px,#99002f 624px,#99002e 636px,#99002d 640px) 0 228px/640px 4px no-repeat,linear-gradient(90deg,#004499 0px,#004299 12px,#004099 24px,#003d99 36px,#003b99 48px,#003999 60px,#003699 72px,#003499 84px,#003199 96px,#002f99 108px,#002c99 120px,#002a99 132px,#002799 144px,#002499 156px,#002399 165.5px,#0039ff 165.51px,#0239ff 168px,#1334ff 180px,#2430ff 192px,#352bff 204px,#4627ff 216px,#5722ff 228px,#691dff 240px,#7a19ff 252px,#8c14ff 264px,#9e0fff 276px,#b10aff 288px,#c305ff 300px,#d600ff 312px,#d600ff 312.5px,#810099 312.51px,#8c0099 324px,#970099 336px,#99008f 348px,#990085 360px,#99007c 372px,#990075 384px,#99006e 396px,#990068 408px,#990062 420px,#99005d 432px,#990059 444px,#990054 456px,#990051 468px,#99004d 480px,#99004a 492px,#990046 504px,#990044 516px,#990041 528px,#99003e 540px,#99003c 552px,#99003a 564px,#990038 576px,#990036 588px,#990034 600px,#990032 612px,#990030 624px,#99002f 636px,#99002e 640px) 0 232px/640px 4px no-repeat,linear-gradient(90deg,#004299 0px,#004099 12px,#003e99 24px,#003b98 36px,#003999 48px,#003799 60px,#003498 72px,#003299 84px,#002f99 96px,#002d99 108px,#002a99 120px,#002899 132px,#002599 144px,#002399 156px,#002199 166.5px,#0036ff 166.51px,#0136fe 168px,#1232ff 180px,#222dff 192px,#3329ff 204px,#4324ff 216px,#5420ff 228px,#661bff 240px,#7716ff 252px,#8812ff 264px,#9a0dff 276px,#ac08ff 288px,#be03ff 300px,#cb00ff 308.5px,#7a0099 308.51px,#7d0099 312px,#880099 324px,#930099 336px,#990092 348px,#980088 360px,#990080 372px,#990078 384px,#990071 396px,#99006b 408px,#990065 420px,#990060 432px,#99005b 444px,#990057 456px,#990053 468px,#99004f 480px,#99004b 492px,#990048 504px,#990045 516px,#990043 528px,#990040 540px,#99003e 552px,#99003b 564px,#990039 576px,#990037 588px,#990035 600px,#990033 612px,#990032 624px,#990030 636px,#990030 640px) 0 236px/640px 4px no-repeat,linear-gradient(90deg,#004099 0px,#003e99 12px,#003c99 24px,#003999 36px,#003799 48px,#003599 60px,#003299 72px,#003099 84px,#002e99 96px,#002b99 108px,#002999 120px,#002698 132px,#002499 144px,#002199 156px,#001f99 167.5px,#0134ff 167.51px,#0134ff 168px,#102fff 180px,#212bff 192px,#3126ff 204px,#4122ff 216px,#521eff 228px,#6319ff 240px,#7414ff 252px,#8510ff 264px,#960bff 276px,#a806ff 288px,#b901ff 300px,#bf00ff 304.5px,#740099 304.51px,#7a0099 312px,#850099 324px,#900099 336px,#990096 348px,#99008c 360px,#990083 372px,#99007b 384px,#990074 396px,#99006d 408px,#990067 420px,#990062 432px,#99005d 444px,#990059 456px,#990055 468px,#990051 480px,#99004d 492px,#99004a 504px,#990047 516px,#990044 528px,#990042 540px,#99003f 552px,#99003d 564px,#99003b 576px,#990039 588px,#990037 600px,#990035 612px,#990033 624px,#990031 636px,#990031 640px) 0 240px/640px 4px no-repeat,linear-gradient(90deg,#003e99 0px,#003c99 12px,#003a99 24px,#003899 36px,#003599 48px,#003399 60px,#003199 72px,#002e99 84px,#002c99 96px,#002a99 108px,#002799 120px,#002599 132px,#002299 144px,#002099 156px,#001d98 167.5px,#0031ff 167.51px,#0031ff 168px,#0f2dff 180px,#1f29ff 192px,#2f24fe 204px,#3f20ff 216px,#4f1bff 228px,#6017ff 240px,#7012ff 252px,#810eff 264px,#9209ff 276px,#a305ff 288px,#b500ff 300px,#b500ff 300.5px,#6d0099 300.51px,#770099 312px,#820099 324px,#8c0099 336px,#970099 348px,#99008f 360px,#990086 372px,#99007e 384px,#990077 396px,#990070 408px,#99006a 420px,#990064 432px,#990060 444px,#99005b 456px,#990057 468px,#990053 480px,#99004f 492px,#99004c 504px,#990049 516px,#990046 528px,#990043 540px,#990041 552px,#99003e 564px,#99003c 576px,#99003a 588px,#990038 600px,#990036 612px,#990034 624px,#990033 636px,#990032 640px) 0 244px/640px 4px no-repeat,linear-gradient(90deg,#003c99 0px,#003a99 12px,#003899 24px,#003699 36px,#003399 48px,#003199 60px,#002f99 72px,#002d99 84px,#002a99 96px,#002899 108px,#002699 120px,#002399 132px,#002199 144px,#001e99 156px,#001c99 168px,#001c99 168.5px,#002eff 168.51px,#0e2bff 180px,#1e26ff 192px,#2d22ff 204px,#3d1eff 216px,#4d19fe 228px,#5d15ff 240px,#6d11ff 252px,#7e0cff 264px,#8f08ff 276px,#9f03ff 288px,#ac00fe 297.5px,#680098 297.51px,#6a0099 300px,#740099 312px,#7e0098 324px,#890099 336px,#940099 348px,#990093 360px,#990089 372px,#990081 384px,#990079 396px,#990073 408px,#99006c 420px,#990067 432px,#990062 444px,#99005d 456px,#990059 468px,#990055 480px,#990051 492px,#99004e 504px,#99004b 516px,#990048 528px,#990045 540px,#980042 552px,#990040 564px,#99003e 576px,#99003b 588px,#990039 600px,#990038 612px,#990036 624px,#990034 636px,#990033 640px) 0 248px/640px 4px no-repeat,linear-gradient(90deg,#003a99 0px,#003899 12px,#003699 24px,#003499 36px,#003299 48px,#003099 60px,#002d99 72px,#002b99 84px,#002999 96px,#002699 108px,#002499 120px,#002299 132px,#001f99 144px,#001d99 156px,#001a99 168px,#001a99 169.5px,#012cff 169.51px,#0d28ff 180px,#1c24ff 192px,#2c20ff 204px,#3b1cfe 216px,#4b17ff 228px,#5b13ff 240px,#6a0fff 252px,#7b0aff 264px,#8b06ff 276px,#9b01ff 288px,#a200ff 293.5px,#620099 293.51px,#670099 300px,#710099 312px,#7b0099 324px,#860099 336px,#900099 348px,#990096 360px,#99008d 372px,#990084 384px,#99007c 396px,#990075 408px,#99006f 420px,#990069 432px,#990064 444px,#99005f 456px,#99005b 468px,#990057 480px,#990053 492px,#990050 504px,#99004c 516px,#990049 528px,#980047 540px,#990044 552px,#990042 564px,#99003f 576px,#99003d 588px,#99003b 600px,#990039 612px,#990037 624px,#990035 636px,#990035 640px) 0 252px/640px 4px no-repeat,linear-gradient(90deg,#003999 0px,#003799 12px,#003499 24px,#003299 36px,#003099 48px,#002e99 60px,#002c99 72px,#002999 84px,#002799 96px,#002599 108px,#002399 120px,#002099 132px,#001e99 144px,#001c99 156px,#001999 168px,#001999 169.5px,#002aff 169.51px,#0c26ff 180px,#1b22ff 192px,#2a1eff 204px,#391aff 216px,#4816fe 228px,#5811ff 240px,#680dff 252px,#7709ff 264px,#8704ff 276px,#9800ff 288px,#9900ff 289.5px,#5c0099 289.51px,#650099 300px,#6e0099 312px,#790099 324px,#830099 336px,#8d0099 348px,#970099 360px,#990090 372px,#990087 384px,#99007f 396px,#990078 408px,#990072 420px,#99006c 432px,#990066 444px,#990062 456px,#99005d 468px,#990059 480px,#990055 492px,#990052 504px,#99004e 516px,#99004b 528px,#990048 540px,#990046 552px,#990043 564px,#990041 576px,#99003e 588px,#99003c 600px,#99003a 612px,#990038 624px,#990037 636px,#990036 640px) 0 256px/640px 4px no-repeat,linear-gradient(90deg,#003799 0px,#003599 12px,#003399 24px,#003199 36px,#002f99 48px,#002c99 60px,#002a99 72px,#002899 84px,#002699 96px,#002399 108px,#002199 120px,#001f99 132px,#001d99 144px,#001a99 156px,#001899 168px,#001799 170.5px,#0027ff 170.51px,#0b24ff 180px,#1a20ff 192px,#281cff 204px,#3718ff 216px,#4614ff 228px,#5610ff 240px,#650bfe 252px,#7407ff 264px,#8403ff 276px,#9000ff 285.5px,#570099 285.51px,#590099 288px,#620099 300px,#6c0099 312px,#760099 324px,#800099 336px,#8a0099 348px,#940099 360px,#990093 372px,#99008a 384px,#990082 396px,#99007b 408px,#990074 420px,#99006e 432px,#990069 444px,#990064 456px,#99005f 468px,#99005b 480px,#990057 492px,#990053 504px,#990050 516px,#99004d 528px,#99004a 540px,#990047 552px,#990045 564px,#990042 576px,#990040 588px,#99003e 600px,#99003c 612px,#99003a 624px,#990038 636px,#990037 640px) 0 260px/640px 4px no-repeat,linear-gradient(90deg,#003599 0px,#003399 12px,#003199 24px,#002f99 36px,#002d99 48px,#002b99 60px,#002999 72px,#002699 84px,#002499 96px,#002299 108px,#002099 120px,#001e99 132px,#001b99 144px,#001999 156px,#001799 168px,#001699 171.5px,#0125ff 171.51px,#0a22ff 180px,#181eff 192px,#271aff 204px,#3616ff 216px,#4412ff 228px,#530eff 240px,#620aff 252px,#7206ff 264px,#8101ff 276px,#8700ff 281.5px,#520099 281.51px,#570099 288px,#600099 300px,#690099 312px,#730099 324px,#7d0099 336px,#870099 348px,#910099 360px,#990096 372px,#99008d 384px,#990085 396px,#99007e 408px,#990077 420px,#990071 432px,#99006b 444px,#990066 456px,#990061 468px,#99005d 480px,#990059 492px,#990055 504px,#990052 516px,#98004f 528px,#99004c 540px,#990049 552px,#990046 564px,#990044 576px,#990041 588px,#99003f 600px,#99003d 612px,#99003b 624px,#990039 636px,#990039 640px) 0 264px/640px 4px no-repeat,linear-gradient(90deg,#003499 0px,#003299 12px,#003099 24px,#002e99 36px,#002b99 48px,#002999 60px,#002799 72px,#002599 84px,#002399 96px,#002199 108px,#001f99 120px,#001c99 132px,#001a99 144px,#001899 156px,#001599 168px,#001599 171.5px,#0023ff 171.51px,#0920ff 180px,#171cff 192px,#2518fe 204px,#3414ff 216px,#4210ff 228px,#510cff 240px,#6008ff 252px,#6f04fe 264px,#7e00ff 276px,#7f00ff 277.5px,#4d0099 277.51px,#540099 288px,#5e0099 300px,#670099 312px,#700099 324px,#7a0099 336px,#840099 348px,#8d0099 360px,#970099 372px,#990090 384px,#990088 396px,#990080 408px,#990079 420px,#990073 432px,#99006e 444px,#990068 456px,#990064 468px,#99005f 480px,#99005b 492px,#990057 504px,#990054 516px,#990050 528px,#99004d 540px,#99004a 552px,#990048 564px,#990045 576px,#990043 588px,#990041 600px,#99003e 612px,#99003c 624px,#99003a 636px,#99003a 640px) 0 268px/640px 4px no-repeat,linear-gradient(90deg,#003299 0px,#003099 12px,#002e99 24px,#002c99 36px,#002a99 48px,#002899 60px,#002699 72px,#002499 84px,#002299 96px,#001f99 108px,#001d99 120px,#001b99 132px,#001999 144px,#001799 156px,#001499 168px,#001499 172.5px,#0021ff 172.51px,#081eff 180px,#161bff 192px,#2417fe 204px,#3213fe 216px,#400fff 228px,#4f0bfe 240px,#5d07ff 252px,#6c03fe 264px,#7700ff 273.5px,#480099 273.51px,#4a0099 276px,#530099 288px,#5c0099 300px,#650099 312px,#6e0099 324px,#770099 336px,#810099 348px,#8a0099 360px,#940099 372px,#990094 384px,#99008b 396px,#990083 408px,#99007c 420px,#990076 432px,#990070 444px,#99006b 456px,#990066 468px,#990061 480px,#99005d 492px,#990059 504px,#990056 516px,#990052 528px,#99004f 540px,#99004c 552px,#990049 564px,#990047 576px,#990044 588px,#990042 600px,#990040 612px,#99003e 624px,#99003c 636px,#99003b 640px) 0 272px/640px 4px no-repeat,linear-gradient(90deg,#003199 0px,#002f99 12px,#002d99 24px,#002b99 36px,#002999 48px,#002799 60px,#002499 72px,#002299 84px,#002099 96px,#001e99 108px,#001c99 120px,#001a99 132px,#001899 144px,#001599 156px,#001399 168px,#001299 173.5px,#011eff 173.51px,#071dff 180px,#1519fe 192px,#2315ff 204px,#3111ff 216px,#3f0dff 228px,#4d09ff 240px,#5b05ff 252px,#6901ff 264px,#7000ff 269.5px,#430099 269.51px,#480099 276px,#510099 288px,#5a0099 300px,#630099 312px,#6c0099 324px,#750099 336px,#7e0099 348px,#870099 360px,#910099 372px,#990097 384px,#99008e 396px,#990086 408px,#99007f 420px,#990078 432px,#990072 444px,#99006d 456px,#990068 468px,#990063 480px,#99005f 492px,#99005b 504px,#990057 516px,#990054 528px,#990051 540px,#99004e 552px,#99004b 564px,#990048 576px,#990046 588px,#990043 600px,#990041 612px,#99003f 624px,#99003d 636px,#99003c 640px) 0 276px/640px 4px no-repeat,linear-gradient(90deg,#002f99 0px,#002d99 12px,#002b99 24px,#002999 36px,#002799 48px,#002599 60px,#002399 72px,#002199 84px,#001f99 96px,#001d99 108px,#001b99 120px,#001999 132px,#001799 144px,#001499 156px,#001299 168px,#001199 173.5px,#001dff 173.51px,#061bfe 180px,#1417ff 192px,#2113ff 204px,#2f10ff 216px,#3d0cff 228px,#4b08fe 240px,#5904ff 252px,#6700ff 264px,#6800ff 265.5px,#3f0099 265.51px,#460099 276px,#4f0099 288px,#580099 300px,#600099 312px,#690099 324px,#720099 336px,#7b0099 348px,#850099 360px,#8e0099 372px,#970099 384px,#990091 396px,#990089 408px,#990081 420px,#99007b 432px,#990075 444px,#99006f 456px,#99006a 468px,#990065 480px,#980061 492px,#99005d 504px,#990059 516px,#990056 528px,#990052 540px,#99004f 552px,#99004d 564px,#99004a 576px,#990047 588px,#990045 600px,#990043 612px,#990040 624px,#99003e 636px,#99003e 640px) 0 280px/640px 4px no-repeat,linear-gradient(90deg,#002e99 0px,#002c99 12px,#002a99 24px,#002899 36px,#002699 48px,#002499 60px,#002299 72px,#002099 84px,#001e99 96px,#001c99 108px,#001a99 120px,#001899 132px,#001599 144px,#001399 156px,#001199 168px,#001099 174.5px,#001bff 174.51px,#0619ff 180px,#1316ff 192px,#2012ff 204px,#2e0efe 216px,#3b0afe 228px,#4906fe 240px,#5703fe 252px,#6100ff 261.5px,#3b0099 261.51px,#3c0099 264px,#450099 276px,#4d0099 288px,#560099 300px,#5e0099 312px,#670099 324px,#700099 336px,#790099 348px,#820099 360px,#8b0099 372px,#940099 384px,#990094 396px,#99008c 408px,#990084 420px,#99007d 432px,#990077 444px,#990071 456px,#99006c 468px,#990067 480px,#990063 492px,#98005f 504px,#99005b 516px,#990057 528px,#990054 540px,#990051 552px,#99004e 564px,#99004b 576px,#990049 588px,#990046 600px,#990044 612px,#990042 624px,#990040 636px,#99003f 640px) 0 284px/640px 4px no-repeat,linear-gradient(90deg,#002c99 0px,#002b99 12px,#002999 24px,#002799 36px,#002599 48px,#002399 60px,#002199 72px,#001f99 84px,#001d99 96px,#001b99 108px,#001999 120px,#001699 132px,#001499 144px,#001299 156px,#001099 168px,#000f99 175.5px,#0119ff 175.51px,#0518fe 180px,#1214ff 192px,#1f10ff 204px,#2c0dff 216px,#3909ff 228px,#4705ff 240px,#5401ff 252px,#5a00ff 257.5px,#370099 257.51px,#3b0099 264px,#430099 276px,#4b0099 288px,#540099 300px,#5c0099 312px,#650099 324px,#6e0099 336px,#760099 348px,#7f0099 360px,#880099 372px,#910099 384px,#990097 396px,#99008e 408px,#990087 420px,#990080 432px,#990079 444px,#990074 456px,#99006e 468px,#990069 480px,#990065 492px,#990061 504px,#99005d 516px,#990059 528px,#990056 540px,#990053 552px,#990050 564px,#99004d 576px,#99004a 588px,#990048 600px,#990045 612px,#990043 624px,#990041 636px,#990040 640px) 0 288px/640px 4px no-repeat,linear-gradient(90deg,#002b99 0px,#002999 12px,#002799 24px,#002599 36px,#002399 48px,#002199 60px,#002099 72px,#001e99 84px,#001c99 96px,#001999 108px,#001799 120px,#001599 132px,#001399 144px,#001199 156px,#000f99 168px,#000e99 175.5px,#0017ff 175.51px,#0416ff 180px,#1112ff 192px,#1e0fff 204px,#2b0bff 216px,#3807fe 228px,#4504ff 240px,#5200ff 252px,#5300ff 253.5px,#330099 253.51px,#390099 264px,#410099 276px,#4a0099 288px,#520099 300px,#5a0099 312px,#630099 324px,#6b0099 336px,#740099 348px,#7d0099 360px,#850099 372px,#8e0099 384px,#970099 396px,#990091 408px,#990089 420px,#990082 432px,#99007c 444px,#990076 456px,#990071 468px,#98006c 480px,#990067 492px,#990063 504px,#99005f 516px,#99005b 528px,#990058 540px,#990054 552px,#990051 564px,#99004e 576px,#99004c 588px,#990049 600px,#990047 612px,#990045 624px,#990042 636px,#990042 640px) 0 292px/640px 4px no-repeat,linear-gradient(90deg,#002a99 0px,#002899 12px,#002699 24px,#002499 36px,#002299 48px,#002099 60px,#001e99 72px,#001c99 84px,#001a99 96px,#001899 108px,#001699 120px,#001499 132px,#001299 144px,#001099 156px,#000e99 168px,#000d99 176.5px,#0015fe 176.51px,#0314ff 180px,#1011fe 192px,#1d0dff 204px,#290aff 216px,#3606ff 228px,#4303ff 240px,#4d00ff 249.5px,#2f0099 249.51px,#300099 252px,#380099 264px,#400099 276px,#480099 288px,#500099 300px,#580099 312px,#610099 324px,#690099 336px,#720099 348px,#7a0099 360px,#830099 372px,#8b0099 384px,#940099 396px,#990094 408px,#99008c 420px,#990085 432px,#98007e 444px,#990078 456px,#990073 468px,#99006e 480px,#990069 492px,#990065 504px,#990061 516px,#99005d 528px,#990059 540px,#990056 552px,#990053 564px,#990050 576px,#99004d 588px,#99004b 600px,#990048 612px,#990046 624px,#990044 636px,#990043 640px) 0 296px/640px 4px no-repeat,linear-gradient(90deg,#002999 0px,#002799 12px,#002599 24px,#002399 36px,#002199 48px,#001f99 60px,#001d99 72px,#001b99 84px,#001999 96px,#001799 108px,#001599 120px,#001399 132px,#001199 144px,#000f99 156px,#000d99 168px,#000c99 176.5px,#0014fe 176.51px,#0313ff 180px,#0f0fff 192px,#1b0cfe 204px,#2808ff 216px,#3505ff 228px,#4201ff 240px,#4700ff 245.5px,#2b0099 245.51px,#2f0099 252px,#370099 264px,#3f0099 276px,#470099 288px,#4f0099 300px,#570099 312px,#5f0099 324px,#670099 336px,#6f0099 348px,#780099 360px,#800099 372px,#890099 384px,#910099 396px,#990097 408px,#99008f 420px,#990087 432px,#990081 444px,#98007b 456px,#990075 468px,#990070 480px,#99006b 492px,#990067 504px,#990062 516px,#99005f 528px,#99005b 540px,#990058 552px,#990055 564px,#990052 576px,#99004f 588px,#99004c 600px,#99004a 612px,#990047 624px,#990045 636px,#990044 640px) 0 300px/640px 4px no-repeat,linear-gradient(90deg,#002799 0px,#002699 12px,#002499 24px,#002299 36px,#002099 48px,#001e99 60px,#001c99 72px,#001a99 84px,#001899 96px,#001699 108px,#001499 120px,#001299 132px,#001099 144px,#000e99 156px,#000c99 168px,#000b99 177.5px,#0012ff 177.51px,#0212ff 180px,#0e0eff 192px,#1a0bff 204px,#2707fe 216px,#3304ff 228px,#4000ff 240px,#4100ff 241.5px,#270099 241.51px,#2e0099 252px,#350099 264px,#3d0099 276px,#450099 288px,#4d0099 300px,#550099 312px,#5d0099 324px,#650099 336px,#6d0099 348px,#750099 360px,#7e0099 372px,#860099 384px,#8f0099 396px,#970099 408px,#990092 420px,#99008a 432px,#990083 444px,#99007d 456px,#990077 468px,#990072 480px,#99006d 492px,#990069 504px,#990064 516px,#990060 528px,#99005d 540px,#990059 552px,#990056 564px,#990053 576px,#990050 588px,#99004e 600px,#99004b 612px,#990049 624px,#990046 636px,#990046 640px) 0 304px/640px 4px no-repeat,linear-gradient(90deg,#002699 0px,#002499 12px,#002399 24px,#002199 36px,#001f99 48px,#001d99 60px,#001b99 72px,#001999 84px,#001799 96px,#001599 108px,#001399 120px,#001199 132px,#000f99 144px,#000e99 156px,#000c99 168px,#000a99 178.5px,#0010ff 178.51px,#0110ff 180px,#0d0dff 192px,#1909ff 204px,#2606ff 216px,#3202ff 228px,#3b00ff 237.5px,#240099 237.51px,#250099 240px,#2d0099 252px,#340099 264px,#3c0099 276px,#440099 288px,#4b0099 300px,#530099 312px,#5b0099 324px,#630099 336px,#6b0099 348px,#730099 360px,#7b0099 372px,#840099 384px,#8c0099 396px,#940099 408px,#990094 420px,#99008d 432px,#990086 444px,#98007f 456px,#99007a 468px,#990074 480px,#99006f 492px,#99006b 504px,#990066 516px,#990062 528px,#99005f 540px,#99005b 552px,#990058 564px,#990055 576px,#990052 588px,#99004f 600px,#99004d 612px,#99004a 624px,#990048 636px,#990047 640px) 0 308px/640px 4px no-repeat,linear-gradient(90deg,#002599 0px,#002399 12px,#002199 24px,#002099 36px,#001e99 48px,#001c99 60px,#001a99 72px,#001899 84px,#001699 96px,#001499 108px,#001299 120px,#001199 132px,#000f99 144px,#000d99 156px,#000b99 168px,#000999 178.5px,#000fff 178.51px,#010fff 180px,#0c0bff 192px,#1808ff 204px,#2405ff 216px,#3001ff 228px,#3700ff 234.5px,#210099 234.51px,#240099 240px,#2c0099 252px,#330099 264px,#3b0099 276px,#420099 288px,#4a0099 300px,#510099 312px,#590099 324px,#610099 336px,#690099 348px,#710099 360px,#790099 372px,#810099 384px,#890099 396px,#920099 408px,#990097 420px,#99008f 432px,#990088 444px,#990082 456px,#99007c 468px,#990076 480px,#990071 492px,#99006d 504px,#990068 516px,#990064 528px,#990060 540px,#99005d 552px,#990059 564px,#990056 576px,#990053 588px,#990051 600px,#99004e 612px,#99004c 624px,#990049 636px,#990048 640px) 0 312px/640px 4px no-repeat,linear-gradient(90deg,#002499 0px,#002299 12px,#002099 24px,#001f99 36px,#001d99 48px,#001b99 60px,#001999 72px,#001799 84px,#001599 96px,#001399 108px,#001299 120px,#001099 132px,#000e99 144px,#000c98 156px,#000a99 168px,#000898 179.5px,#000dff 179.51px,#000dff 180px,#0c0aff 192px,#1707ff 204px,#2303ff 216px,#2f00ff 228px,#3100ff 230.5px,#1e0099 230.51px,#230099 240px,#2b0099 252px,#320099 264px,#390099 276px,#410099 288px,#480099 300px,#500098 312px,#580099 324px,#5f0099 336px,#670099 348px,#6f0099 360px,#770099 372px,#7f0099 384px,#870099 396px,#8f0099 408px,#970099 420px,#990092 432px,#99008b 444px,#990084 456px,#99007e 468px,#990078 480px,#990073 492px,#99006f 504px,#99006a 516px,#990066 528px,#990062 540px,#99005e 552px,#99005b 564px,#990058 576px,#990055 588px,#990052 600px,#99004f 612px,#99004d 624px,#99004b 636px,#99004a 640px) 0 316px/640px 4px no-repeat,linear-gradient(90deg,#002399 0px,#002199 12px,#001f99 24px,#001d99 36px,#001c99 48px,#001a99 60px,#001899 72px,#001699 84px,#001499 96px,#001399 108px,#001199 120px,#000f99 132px,#000d98 144px,#000b99 156px,#000999 168px,#000799 180px,#000799 180.5px,#000cff 180.51px,#0b09ff 192px,#1606ff 204px,#2202ff 216px,#2c00ff 226.5px,#1b0099 226.51px,#1b0099 228px,#220099 240px,#2a0099 252px,#310099 264px,#380098 276px,#3f0099 288px,#470099 300px,#4e0099 312px,#560099 324px,#5d0099 336px,#650099 348px,#6d0099 360px,#750099 372px,#7c0099 384px,#840099 396px,#8c0099 408px,#940099 420px,#990095 432px,#99008d 444px,#990086 456px,#990080 468px,#99007b 480px,#990075 492px,#990070 504px,#99006c 516px,#990068 528px,#990064 540px,#990060 552px,#99005d 564px,#99005a 576px,#990056 588px,#990054 600px,#990051 612px,#99004e 624px,#99004c 636px,#99004b 640px) 0 320px/640px 4px no-repeat,linear-gradient(90deg,#002299 0px,#002099 12px,#001e99 24px,#001c99 36px,#001b99 48px,#001999 60px,#001799 72px,#001599 84px,#001499 96px,#001299 108px,#001099 120px,#000e99 132px,#000c99 144px,#000a99 156px,#000899 168px,#000699 180px,#000699 180.5px,#000bff 180.51px,#0a08ff 192px,#1504ff 204px,#2101ff 216px,#2700ff 222.5px,#180099 222.51px,#1b0099 228px,#220099 240px,#290099 252px,#300099 264px,#370099 276px,#3e0099 288px,#450099 300px,#4d0099 312px,#540099 324px,#5c0099 336px,#630099 348px,#6b0099 360px,#720099 372px,#7a0099 384px,#820099 396px,#8a0099 408px,#920099 420px,#990097 432px,#990090 444px,#990089 456px,#990083 468px,#99007d 480px,#990077 492px,#990072 504px,#99006e 516px,#99006a 528px,#990066 540px,#990062 552px,#99005e 564px,#99005b 576px,#990058 588px,#990055 600px,#990052 612px,#990050 624px,#99004d 636px,#99004c 640px) 0 324px/640px 4px no-repeat,linear-gradient(90deg,#002199 0px,#001f99 12px,#001d99 24px,#001b99 36px,#001a99 48px,#001899 60px,#001699 72px,#001499 84px,#001399 96px,#001199 108px,#000f99 120px,#000d99 132px,#000b99 144px,#000999 156px,#000899 168px,#000699 180px,#000599 181.5px,#0009ff 181.51px,#0907ff 192px,#1503ff 204px,#2000ff 216px,#2200ff 218.5px,#150099 218.51px,#1a0099 228px,#210099 240px,#280099 252px,#2f0099 264px,#360099 276px,#3d0099 288px,#440099 300px,#4b0099 312px,#530099 324px,#5a0099 336px,#610099 348px,#690099 360px,#700099 372px,#780099 384px,#800099 396px,#870099 408px,#8f0099 420px,#970099 432px,#990092 444px,#99008b 456px,#990085 468px,#99007f 480px,#99007a 492px,#990074 504px,#990070 516px,#99006b 528px,#990067 540px,#990064 552px,#990060 564px,#99005d 576px,#99005a 588px,#990057 600px,#990054 612px,#990051 624px,#99004f 636px,#99004e 640px) 0 328px/640px 4px no-repeat,linear-gradient(90deg,#002099 0px,#001e99 12px,#001c99 24px,#001b99 36px,#001999 48px,#001799 60px,#001599 72px,#001499 84px,#001299 96px,#001099 108px,#000e99 120px,#000c99 132px,#000b99 144px,#000999 156px,#000799 168px,#000599 180px,#000599 182.5px,#0008ff 182.51px,#0905ff 192px,#1402ff 204px,#1d00ff 214.5px,#120099 214.51px,#120099 216px,#190099 228px,#200099 240px,#270099 252px,#2e0099 264px,#350099 276px,#3c0099 288px,#430099 300px,#4a0099 312px,#510099 324px,#580099 336px,#600099 348px,#670099 360px,#6e0099 372px,#760099 384px,#7d0099 396px,#850099 408px,#8d0099 420px,#940099 432px,#990095 444px,#99008e 456px,#990087 468px,#990081 480px,#99007c 492px,#990077 504px,#990072 516px,#99006d 528px,#990069 540px,#990065 552px,#990062 564px,#99005e 576px,#99005b 588px,#990058 600px,#990055 612px,#990053 624px,#990050 636px,#99004f 640px) 0 332px/640px 4px no-repeat,linear-gradient(90deg,#001f99 0px,#001d99 12px,#001b99 24px,#001a99 36px,#001899 48px,#001699 60px,#001499 72px,#001399 84px,#001199 96px,#000f99 108px,#000d99 120px,#000c99 132px,#000a99 144px,#000899 156px,#000699 168px,#000499 180px,#000499 182.5px,#0007ff 182.51px,#0804fe 192px,#1301ff 204px,#1800ff 210.5px,#0f0099 210.51px,#120099 216px,#180099 228px,#1f0099 240px,#260099 252px,#2d0099 264px,#340099 276px,#3a0099 288px,#410099 300px,#480099 312px,#500099 324px,#570099 336px,#5e0099 348px,#650099 360px,#6c0099 372px,#740099 384px,#7b0099 396px,#830099 408px,#8a0099 420px,#920099 432px,#990097 444px,#990090 456px,#990089 468px,#990083 480px,#99007e 492px,#990079 504px,#990074 516px,#99006f 528px,#99006b 540px,#990067 552px,#990063 564px,#990060 576px,#99005d 588px,#99005a 600px,#990057 612px,#990054 624px,#990051 636px,#990051 640px) 0 336px/640px 4px no-repeat,linear-gradient(90deg,#001e99 0px,#001c99 12px,#001a99 24px,#001999 36px,#001799 48px,#001599 60px,#001499 72px,#001299 84px,#001099 96px,#000e99 108px,#000d99 120px,#000b99 132px,#000999 144px,#000799 156px,#000599 168px,#000499 180px,#000399 183.5px,#0005ff 183.51px,#0703ff 192px,#1200ff 204px,#1400ff 206.5px,#0c0099 206.51px,#110099 216px,#180099 228px,#1e0099 240px,#250099 252px,#2c0099 264px,#320099 276px,#390099 288px,#400099 300px,#470099 312px,#4e0099 324px,#550099 336px,#5c0099 348px,#630099 360px,#6b0099 372px,#720099 384px,#790099 396px,#810099 408px,#880099 420px,#8f0099 432px,#970099 444px,#990093 456px,#99008c 468px,#990086 480px,#990080 492px,#99007b 504px,#990076 516px,#990071 528px,#99006d 540px,#990069 552px,#990065 564px,#990062 576px,#99005e 588px,#99005b 600px,#990058 612px,#990055 624px,#990053 636px,#990052 640px) 0 340px/640px 4px no-repeat,linear-gradient(90deg,#001d99 0px,#001b99 12px,#001999 24px,#001899 36px,#001699 48px,#001499 60px,#001399 72px,#001199 84px,#000f99 96px,#000e99 108px,#000c99 120px,#000a99 132px,#000899 144px,#000799 156px,#000599 168px,#000399 180px,#000299 184.5px,#0004ff 184.51px,#0602ff 192px,#0f00ff 202.5px,#0a0099 202.51px,#0a0099 204px,#110099 216px,#170099 228px,#1e0099 240px,#240099 252px,#2b0099 264px,#310099 276px,#380099 288px,#3f0099 300px,#460099 312px,#4d0099 324px,#540099 336px,#5b0099 348px,#620099 360px,#690099 372px,#700099 384px,#770099 396px,#7e0099 408px,#860099 420px,#8d0099 432px,#950099 444px,#990095 456px,#99008e 468px,#990088 480px,#990082 492px,#99007d 504px,#990078 516px,#990073 528px,#99006f 540px,#99006b 552px,#990067 564px,#990063 576px,#990060 588px,#99005d 600px,#99005a 612px,#990057 624px,#990054 636px,#990053 640px) 0 344px/640px 4px no-repeat,linear-gradient(90deg,#001c99 0px,#001a99 12px,#001999 24px,#001799 36px,#001599 48px,#001499 60px,#001299 72px,#001099 84px,#000f99 96px,#000d99 108px,#000b99 120px,#000999 132px,#000899 144px,#000699 156px,#000499 168px,#000299 180px,#000299 184.5px,#0003ff 184.51px,#0601ff 192px,#0b00ff 198.5px,#070099 198.51px,#0a0099 204px,#100099 216px,#160099 228px,#1d0099 240px,#230099 252px,#2a0099 264px,#300099 276px,#370099 288px,#3e0099 300px,#450099 312px,#4b0099 324px,#520099 336px,#590099 348px,#600099 360px,#670099 372px,#6e0099 384px,#750099 396px,#7c0099 408px,#840099 420px,#8b0099 432px,#920099 444px,#990098 456px,#990091 468px,#99008a 480px,#990084 492px,#99007f 504px,#99007a 516px,#990075 528px,#990070 540px,#99006c 552px,#990068 564px,#990065 576px,#990061 588px,#99005e 600px,#99005b 612px,#990058 624px,#990056 636px,#990055 640px) 0 348px/640px 4px no-repeat,linear-gradient(90deg,#001b99 0px,#001999 12px,#001899 24px,#001699 36px,#001499 48px,#001399 60px,#001199 72px,#000f99 84px,#000e99 96px,#000c99 108px,#000a99 120px,#000999 132px,#000799 144px,#000599 156px,#000399 168px,#000299 180px,#000199 185.5px,#0002ff 185.51px,#0500fe 192px,#0700ff 194.5px,#040099 194.51px,#090099 204px,#0f0099 216px,#160099 228px,#1c0099 240px,#230099 252px,#290099 264px,#2f0099 276px,#360099 288px,#3d0099 300px,#430099 312px,#4a0099 324px,#510099 336px,#580099 348px,#5e0099 360px,#650099 372px,#6c0099 384px,#730099 396px,#7a0099 408px,#810099 420px,#890099 432px,#900099 444px,#970099 456px,#990093 468px,#99008c 480px,#990086 492px,#990081 504px,#99007c 516px,#990077 528px,#990072 540px,#99006e 552px,#99006a 564px,#990066 576px,#990063 588px,#990060 600px,#99005d 612px,#99005a 624px,#990057 636px,#990056 640px) 0 352px/640px 4px no-repeat,linear-gradient(90deg,#001a99 0px,#001899 12px,#001799 24px,#001599 36px,#001499 48px,#001299 60px,#001099 72px,#000f99 84px,#000d99 96px,#000b99 108px,#000a99 120px,#000899 132px,#000699 144px,#000599 156px,#000399 168px,#000199 180px,#000099 186.5px,#0000fe 186.51px,#0300ff 190.5px,#020099 190.51px,#030099 192px,#090099 204px,#0f0099 216px,#150099 228px,#1b0099 240px,#220099 252px,#280099 264px,#2f0099 276px,#350099 288px,#3b0099 300px,#420099 312px,#490099 324px,#4f0099 336px,#560099 348px,#5d0099 360px,#640099 372px,#6a0099 384px,#710099 396px,#780099 408px,#7f0099 420px,#860099 432px,#8d0099 444px,#950099 456px,#990095 468px,#99008f 480px,#990088 492px,#990083 504px,#99007e 516px,#990079 528px,#990074 540px,#990070 552px,#99006c 564px,#990068 576px,#990065 588px,#990061 600px,#99005e 612px,#99005b 624px,#990058 636px,#990057 640px) 0 356px/640px 4px no-repeat,linear-gradient(90deg,#001999 0px,#001899 12px,#001699 24px,#001499 36px,#001399 48px,#001199 60px,#001099 72px,#000e99 84px,#000c99 96px,#000b99 108px,#000999 120px,#000799 132px,#000699 144px,#000499 156px,#000299 168px,#000099 180px,#020099 192px,#080099 204px,#0e0099 216px,#150099 228px,#1b0099 240px,#210099 252px,#270099 264px,#2e0099 276px,#340099 288px,#3a0099 300px,#410099 312px,#470099 324px,#4e0099 336px,#550099 348px,#5b0099 360px,#620099 372px,#690099 384px,#6f0099 396px,#760099 408px,#7d0099 420px,#840099 432px,#8b0099 444px,#920099 456px,#990098 468px,#990091 480px,#99008b 492px,#990085 504px,#99007f 516px,#99007b 528px,#990076 540px,#990072 552px,#99006e 564px,#99006a 576px,#990066 588px,#990063 600px,#990060 612px,#99005d 624px,#99005a 636px,#990059 640px) 0 360px/640px 4px no-repeat,linear-gradient(90deg,#001899 0px,#001799 12px,#001599 24px,#001499 36px,#001299 48px,#001099 60px,#000f99 72px,#000d99 84px,#000c99 96px,#000a99 108px,#000899 120px,#000799 132px,#000599 144px,#000399 156px,#000299 168px,#000099 180px,#020099 192px,#080099 204px,#0e0099 216px,#140099 228px,#1a0099 240px,#200099 252px,#260099 264px,#2d0099 276px,#330099 288px,#390099 300px,#400099 312px,#460099 324px,#4d0099 336px,#530099 348px,#5a0099 360px,#600099 372px,#670099 384px,#6e0099 396px,#740099 408px,#7b0099 420px,#820099 432px,#890099 444px,#900099 456px,#970099 468px,#990093 480px,#99008d 492px,#990087 504px,#990081 516px,#99007c 528px,#990078 540px,#990073 552px,#99006f 564px,#99006b 576px,#990068 588px,#990064 600px,#990061 612px,#99005e 624px,#99005b 636px,#99005a 640px) 0 364px/640px 4px no-repeat,linear-gradient(90deg,#001899 0px,#001699 12px,#001499 24px,#001399 36px,#001199 48px,#001099 60px,#000e99 72px,#000d99 84px,#000b99 96px,#000999 108px,#000899 120px,#000699 132px,#000499 144px,#000399 156px,#000199 168px,#000099 180px,#010099 192px,#070099 204px,#0d0099 216px,#130099 228px,#190099 240px,#1f0099 252px,#260099 264px,#2c0099 276px,#320099 288px,#380099 300px,#3f0099 312px,#450099 324px,#4b0099 336px,#520099 348px,#580099 360px,#5f0099 372px,#650099 384px,#6c0099 396px,#730099 408px,#790099 420px,#800099 432px,#870099 444px,#8e0099 456px,#950099 468px,#990095 480px,#99008f 492px,#990089 504px,#990083 516px,#99007e 528px,#99007a 540px,#990075 552px,#980071 564px,#99006d 576px,#990069 588px,#990066 600px,#990063 612px,#99005f 624px,#99005d 636px,#99005c 640px) 0 368px/640px 4px no-repeat,linear-gradient(90deg,#001799 0px,#001599 12px,#001499 24px,#001299 36px,#001199 48px,#000f99 60px,#000d99 72px,#000c99 84px,#000a99 96px,#000999 108px,#000799 120px,#000599 132px,#000499 144px,#000299 156px,#000099 168px,#000099 180px,#010099 192px,#070099 204px,#0d0099 216px,#130099 228px,#190099 240px,#1f0099 252px,#250099 264px,#2b0099 276px,#310099 288px,#370099 300px,#3d0099 312px,#440099 324px,#4a0099 336px,#500099 348px,#570099 360px,#5d0099 372px,#640099 384px,#6a0099 396px,#710099 408px,#770099 420px,#7e0099 432px,#850099 444px,#8c0099 456px,#920099 468px,#990098 480px,#990091 492px,#99008b 504px,#990085 516px,#990080 528px,#99007b 540px,#990077 552px,#990073 564px,#99006f 576px,#99006b 588px,#990067 600px,#990064 612px,#990061 624px,#99005e 636px,#99005d 640px) 0 372px/640px 4px no-repeat,linear-gradient(90deg,#001699 0px,#001499 12px,#001399 24px,#001199 36px,#001099 48px,#000e99 60px,#000d99 72px,#000b99 84px,#000a99 96px,#000899 108px,#000699 120px,#000599 132px,#000399 144px,#000299 156px,#000099 168px,#000099 180px,#010099 192px,#070099 204px,#0c0099 216px,#120099 228px,#180099 240px,#1e0099 252px,#240099 264px,#2a0099 276px,#300099 288px,#360099 300px,#3c0099 312px,#430099 324px,#490099 336px,#4f0099 348px,#550099 360px,#5c0099 372px,#620099 384px,#690099 396px,#6f0099 408px,#760099 420px,#7c0099 432px,#830099 444px,#8a0099 456px,#900099 468px,#970099 480px,#990093 492px,#99008d 504px,#990088 516px,#990082 528px,#99007d 540px,#990079 552px,#990074 564px,#990070 576px,#99006d 588px,#990069 600px,#990066 612px,#990062 624px,#99005f 636px,#99005e 640px) 0 376px/640px 4px no-repeat,linear-gradient(90deg,#001599 0px,#001499 12px,#001299 24px,#001199 36px,#000f99 48px,#000e99 60px,#000c99 72px,#000b99 84px,#000999 96px,#000799 108px,#000699 120px,#000499 132px,#000398 144px,#000199 156px,#000099 168px,#000099 180px,#000099 192px,#060099 204px,#0c0099 216px,#120099 228px,#180099 240px,#1d0099 252px,#230099 264px,#290099 276px,#2f0099 288px,#350099 300px,#3b0098 312px,#410099 324px,#480099 336px,#4e0099 348px,#540099 360px,#5a0099 372px,#610099 384px,#670099 396px,#6d0099 408px,#740099 420px,#7a0099 432px,#810099 444px,#870099 456px,#8e0099 468px,#950099 480px,#990096 492px,#99008f 504px,#99008a 516px,#990084 528px,#99007f 540px,#99007a 552px,#990076 564px,#990072 576px,#99006e 588px,#99006b 600px,#990067 612px,#990064 624px,#990061 636px,#990060 640px) 0 380px/640px 4px no-repeat,linear-gradient(90deg,#001599 0px,#001399 12px,#001299 24px,#001099 36px,#000f99 48px,#000d98 60px,#000b99 72px,#000a99 84px,#000899 96px,#000799 108px,#000598 120px,#000499 132px,#000299 144px,#000099 156px,#000099 168px,#000099 180px,#000098 192px,#060099 204px,#0b0099 216px,#110099 228px,#170099 240px,#1d0099 252px,#230098 264px,#280098 276px,#2e0099 288px,#340099 300px,#3a0099 312px,#400099 324px,#460099 336px,#4d0099 348px,#530099 360px,#590099 372px,#5f0099 384px,#650099 396px,#6c0099 408px,#720099 420px,#790099 432px,#7f0099 444px,#850099 456px,#8c0099 468px,#930099 480px,#990098 492px,#990091 504px,#99008c 516px,#990086 528px,#990081 540px,#99007c 552px,#990078 564px,#990074 576px,#990070 588px,#99006c 600px,#990069 612px,#990065 624px,#990062 636px,#990061 640px) 0 384px/640px 4px no-repeat,linear-gradient(90deg,#001499 0px,#001299 12px,#001199 24px,#000f99 36px,#000e99 48px,#000c99 60px,#000b99 72px,#000999 84px,#000899 96px,#000699 108px,#000599 120px,#000399 132px,#000299 144px,#000099 156px,#000099 168px,#000099 180px,#000099 192px,#050099 204px,#0b0099 216px,#110099 228px,#160099 240px,#1c0099 252px,#220099 264px,#280098 276px,#2e0099 288px,#330099 300px,#390099 312px,#3f0099 324px,#450099 336px,#4b0099 348px,#510099 360px,#580099 372px,#5e0099 384px,#640099 396px,#6a0099 408px,#700099 420px,#770099 432px,#7d0099 444px,#830099 456px,#8a0099 468px,#900099 480px,#970099 492px,#990094 504px,#99008e 516px,#990088 528px,#990083 540px,#99007e 552px,#99007a 564px,#990075 576px,#990071 588px,#99006e 600px,#99006a 612px,#990067 624px,#990064 636px,#990063 640px) 0 388px/640px 4px no-repeat,linear-gradient(90deg,#001399 0px,#001299 12px,#001099 24px,#000f99 36px,#000d99 48px,#000c99 60px,#000a99 72px,#000999 84px,#000799 96px,#000699 108px,#000499 120px,#000399 132px,#000199 144px,#000099 156px,#000099 168px,#000099 180px,#000099 192px,#050099 204px,#0b0099 216px,#100099 228px,#160099 240px,#1b0099 252px,#210099 264px,#270099 276px,#2d0099 288px,#330099 300px,#380099 312px,#3e0099 324px,#440099 336px,#4a0099 348px,#500099 360px,#560099 372px,#5c0099 384px,#620099 396px,#690099 408px,#6f0099 420px,#750099 432px,#7b0099 444px,#820099 456px,#880099 468px,#8e0099 480px,#950098 492px,#990096 504px,#990090 516px,#99008a 528px,#990085 540px,#990080 552px,#99007b 564px,#990077 576px,#990073 588px,#99006f 600px,#99006c 612px,#990068 624px,#990065 636px,#990064 640px) 0 392px/640px 4px no-repeat,linear-gradient(90deg,#001299 0px,#001199 12px,#000f99 24px,#000e99 36px,#000d99 48px,#000b99 60px,#000a99 72px,#000899 84px,#000799 96px,#000599 108px,#000499 120px,#000299 132px,#000099 144px,#000099 156px,#000099 168px,#000099 180px,#000099 192px,#050099 204px,#0a0099 216px,#100099 228px,#150099 240px,#1b0099 252px,#210099 264px,#260099 276px,#2c0099 288px,#320099 300px,#370099 312px,#3d0099 324px,#430099 336px,#490099 348px,#4f0099 360px,#550099 372px,#5b0099 384px,#610099 396px,#670099 408px,#6d0099 420px,#730099 432px,#790099 444px,#800099 456px,#860099 468px,#8c0099 480px,#930099 492px,#990098 504px,#990092 516px,#99008c 528px,#990087 540px,#990082 552px,#99007d 564px,#990079 576px,#990075 588px,#990071 600px,#99006d 612px,#99006a 624px,#990067 636px,#990066 640px) 0 396px/640px 4px no-repeat,linear-gradient(90deg,#001299 0px,#001099 12px,#000f99 24px,#000d99 36px,#000c99 48px,#000a99 60px,#000999 72px,#000799 84px,#000699 96px,#000499 108px,#000399 120px,#000199 132px,#000099 144px,#000099 156px,#000099 168px,#000099 180px,#000099 192px,#040099 204px,#0a0099 216px,#0f0099 228px,#150099 240px,#1a0099 252px,#200099 264px,#250099 276px,#2b0099 288px,#310099 300px,#360099 312px,#3c0099 324px,#420099 336px,#480099 348px,#4e0099 360px,#540099 372px,#590099 384px,#5f0099 396px,#650099 408px,#6c0099 420px,#720099 432px,#780099 444px,#7e0099 456px,#840099 468px,#8a0099 480px,#910099 492px,#970099 504px,#990094 516px,#99008e 528px,#990089 540px,#990084 552px,#99007f 564px,#99007a 576px,#990076 588px,#990072 600px,#99006f 612px,#99006b 624px,#990068 636px,#990067 640px) 0 400px/640px 4px no-repeat,linear-gradient(90deg,#001199 0px,#001099 12px,#000e99 24px,#000d99 36px,#000b99 48px,#000a99 60px,#000899 72px,#000799 84px,#000599 96px,#000499 108px,#000299 120px,#000199 132px,#000099 144px,#000099 156px,#000099 168px,#000099 180px,#000099 192px,#040099 204px,#090099 216px,#0f0099 228px,#140099 240px,#1a0099 252px,#1f0099 264px,#250099 276px,#2a0099 288px,#300099 300px,#360099 312px,#3b0099 324px,#410099 336px,#470099 348px,#4c0099 360px,#520099 372px,#580099 384px,#5e0099 396px,#640099 408px,#6a0099 420px,#700099 432px,#760099 444px,#7c0099 456px,#820099 468px,#880099 480px,#8f0099 492px,#950099 504px,#990096 516px,#990090 528px,#99008b 540px,#990085 552px,#990081 564px,#99007c 576px,#990078 588px,#990074 600px,#990070 612px,#99006d 624px,#990069 636px,#990068 640px) 0 404px/640px 4px no-repeat,linear-gradient(90deg,#001099 0px,#000f99 12px,#000e99 24px,#000c99 36px,#000b99 48px,#000999 60px,#000899 72px,#000699 84px,#000599 96px,#000399 108px,#000299 120px,#000099 132px,#000099 144px,#000099 156px,#000099 168px,#000099 180px,#000099 192px,#040099 204px,#090099 216px,#0e0099 228px,#140099 240px,#190099 252px,#1f0099 264px,#240099 276px,#2a0099 288px,#2f0099 300px,#350099 312px,#3a0099 324px,#400099 336px,#460099 348px,#4b0099 360px,#510099 372px,#570099 384px,#5d0099 396px,#630099 408px,#680099 420px,#6e0099 432px,#740099 444px,#7a0099 456px,#800099 468px,#870099 480px,#8d0099 492px,#930099 504px,#990098 516px,#990092 528px,#99008c 540px,#990087 552px,#990082 564px,#99007e 576px,#99007a 588px,#990076 600px,#990072 612px,#99006e 624px,#99006b 636px,#99006a 640px) 0 408px/640px 4px no-repeat,linear-gradient(90deg,#001099 0px,#000e99 12px,#000d99 24px,#000c99 36px,#000a99 48px,#000999 60px,#000799 72px,#000699 84px,#000499 96px,#000399 108px,#000199 120px,#000099 132px,#000099 144px,#000099 156px,#000099 168px,#000099 180px,#000099 192px,#030099 204px,#090099 216px,#0e0099 228px,#130099 240px,#190099 252px,#1e0099 264px,#230099 276px,#290099 288px,#2e0099 300px,#340099 312px,#390099 324px,#3f0099 336px,#450099 348px,#4a0099 360px,#500099 372px,#560099 384px,#5b0099 396px,#610099 408px,#670099 420px,#6d0099 432px,#730099 444px,#790099 456px,#7f0099 468px,#850099 480px,#8b0099 492px,#910099 504px,#970099 516px,#990094 528px,#99008e 540px,#990089 552px,#990084 564px,#990080 576px,#99007b 588px,#990077 600px,#990073 612px,#990070 624px,#99006c 636px,#99006b 640px) 0 412px/640px 4px no-repeat,linear-gradient(90deg,#000f99 0px,#000e99 12px,#000c99 24px,#000b99 36px,#000a99 48px,#000899 60px,#000799 72px,#000599 84px,#000499 96px,#000299 108px,#000199 120px,#000099 132px,#000099 144px,#000099 156px,#000099 168px,#000099 180px,#000099 192px,#030099 204px,#080099 216px,#0d0099 228px,#130099 240px,#180099 252px,#1d0099 264px,#230099 276px,#280099 288px,#2d0099 300px,#330099 312px,#380099 324px,#3e0099 336px,#430099 348px,#490099 360px,#4f0099 372px,#540099 384px,#5a0099 396px,#600099 408px,#660099 420px,#6b0099 432px,#710099 444px,#770099 456px,#7d0099 468px,#830099 480px,#890099 492px,#8f0099 504px,#950099 516px,#990096 528px,#990090 540px,#99008b 552px,#990086 564px,#990081 576px,#99007d 588px,#990079 600px,#990075 612px,#990071 624px,#99006e 636px,#99006d 640px) 0 416px/640px 4px no-repeat,linear-gradient(90deg,#000e99 0px,#000d99 12px,#000c99 24px,#000a99 36px,#000999 48px,#000899 60px,#000699 72px,#000599 84px,#000399 96px,#000299 108px,#000099 120px,#000099 132px,#000099 144px,#000099 156px,#000099 168px,#000099 180px,#000099 192px,#030099 204px,#080099 216px,#0d0099 228px,#120099 240px,#170099 252px,#1d0099 264px,#220099 276px,#270099 288px,#2d0099 300px,#320099 312px,#380099 324px,#3d0099 336px,#420099 348px,#480099 360px,#4e0099 372px,#530099 384px,#590099 396px,#5e0099 408px,#640099 420px,#6a0099 432px,#700099 444px,#750099 456px,#7b0099 468px,#810099 480px,#870099 492px,#8d0099 504px,#930099 516px,#990098 528px,#990092 540px,#99008d 552px,#990088 564px,#990083 576px,#99007f 588px,#99007a 600px,#990077 612px,#990073 624px,#99006f 636px,#99006e 640px) 0 420px/640px 4px no-repeat,linear-gradient(90deg,#000e99 0px,#000d99 12px,#000b99 24px,#000a99 36px,#000899 48px,#000799 60px,#000699 72px,#000499 84px,#000399 96px,#000199 108px,#000099 120px,#000099 132px,#000099 144px,#000099 156px,#000099 168px,#000099 180px,#000099 192px,#020099 204px,#070099 216px,#0d0099 228px,#120099 240px,#170099 252px,#1c0099 264px,#210099 276px,#270099 288px,#2c0099 300px,#310099 312px,#370099 324px,#3c0099 336px,#410099 348px,#470099 360px,#4c0099 372px,#520099 384px,#580099 396px,#5d0099 408px,#630099 420px,#680099 432px,#6e0099 444px,#740099 456px,#7a0099 468px,#7f0099 480px,#850099 492px,#8b0099 504px,#910099 516px,#970099 528px,#990094 540px,#99008f 552px,#99008a 564px,#980085 576px,#990080 588px,#99007c 600px,#990078 612px,#990074 624px,#990071 636px,#990070 640px) 0 424px/640px 4px no-repeat,linear-gradient(90deg,#000d99 0px,#000c99 12px,#000b98 24px,#000999 36px,#000899 48px,#000699 60px,#000599 72px,#000499 84px,#000299 96px,#000199 108px,#000099 120px,#000099 132px,#000099 144px,#000099 156px,#000099 168px,#000099 180px,#000099 192px,#020099 204px,#070099 216px,#0c0099 228px,#110099 240px,#160099 252px,#1c0099 264px,#210099 276px,#260099 288px,#2b0099 300px,#300099 312px,#360099 324px,#3b0099 336px,#400099 348px,#460099 360px,#4b0099 372px,#510099 384px,#560099 396px,#5c0098 408px,#610099 420px,#670099 432px,#6d0099 444px,#720099 456px,#780099 468px,#7e0099 480px,#830099 492px,#890099 504px,#8f0099 516px,#950099 528px,#990096 540px,#990091 552px,#99008b 564px,#990087 576px,#990082 588px,#99007e 600px,#99007a 612px,#990076 624px,#990072 636px,#990071 640px) 0 428px/640px 4px no-repeat,linear-gradient(90deg,#000d99 0px,#000b99 12px,#000a99 24px,#000999 36px,#000799 48px,#000699 60px,#000599 72px,#000399 84px,#000299 96px,#000099 108px,#000099 120px,#000099 132px,#000099 144px,#000099 156px,#000099 168px,#000099 180px,#000099 192px,#020098 204px,#070099 216px,#0c0098 228px,#110099 240px,#160099 252px,#1b0099 264px,#200099 276px,#250099 288px,#2a0099 300px,#300099 312px,#350099 324px,#3a0099 336px,#400099 348px,#450099 360px,#4a0099 372px,#500099 384px,#550099 396px,#5b0099 408px,#600099 420px,#660099 432px,#6b0099 444px,#710099 456px,#760099 468px,#7c0099 480px,#820098 492px,#870099 504px,#8d0099 516px,#930099 528px,#990098 540px,#980092 552px,#99008d 564px,#990088 576px,#990084 588px,#99007f 600px,#99007b 612px,#990077 624px,#990074 636px,#990073 640px) 0 432px/640px 4px no-repeat,linear-gradient(90deg,#000c99 0px,#000b99 12px,#000999 24px,#000899 36px,#000799 48px,#000599 60px,#000499 72px,#000399 84px,#000199 96px,#000099 108px,#000099 120px,#000099 132px,#000099 144px,#000099 156px,#000099 168px,#000099 180px,#000099 192px,#020099 204px,#060099 216px,#0b0099 228px,#100099 240px,#150099 252px,#1a0099 264px,#200099 276px,#250099 288px,#2a0099 300px,#2f0099 312px,#340099 324px,#390099 336px,#3f0099 348px,#440099 360px,#490099 372px,#4f0099 384px,#540099 396px,#590099 408px,#5f0099 420px,#640099 432px,#6a0099 444px,#6f0099 456px,#750099 468px,#7a0099 480px,#800099 492px,#860099 504px,#8b0099 516px,#910099 528px,#970099 540px,#990094 552px,#99008f 564px,#99008a 576px,#990085 588px,#990081 600px,#99007d 612px,#990079 624px,#990075 636px,#990074 640px) 0 436px/640px 4px no-repeat,linear-gradient(90deg,#000c99 0px,#000a99 12px,#000999 24px,#000899 36px,#000699 48px,#000599 60px,#000499 72px,#000299 84px,#000199 96px,#000099 108px,#000099 120px,#000099 132px,#000099 144px,#000099 156px,#000099 168px,#000099 180px,#000099 192px,#010099 204px,#060099 216px,#0b0099 228px,#100099 240px,#150099 252px,#1a0099 264px,#1f0099 276px,#240099 288px,#290099 300px,#2e0099 312px,#330099 324px,#380099 336px,#3e0099 348px,#430099 360px,#480099 372px,#4d0099 384px,#530099 396px,#580099 408px,#5d0099 420px,#630099 432px,#680099 444px,#6e0099 456px,#730099 468px,#790099 480px,#7e0099 492px,#840099 504px,#8a0099 516px,#8f0099 528px,#950099 540px,#990096 552px,#990091 564px,#99008c 576px,#990087 588px,#990083 600px,#99007e 612px,#99007a 624px,#990077 636px,#990075 640px) 0 440px/640px 4px no-repeat,linear-gradient(90deg,#000b99 0px,#000a99 12px,#000899 24px,#000799 36px,#000699 48px,#000499 60px,#000399 72px,#000299 84px,#000099 96px,#000099 108px,#000099 120px,#000099 132px,#000099 144px,#000099 156px,#000099 168px,#000099 180px,#000099 192px,#010099 204px,#060099 216px,#0b0099 228px,#100099 240px,#140099 252px,#190099 264px,#1e0099 276px,#230099 288px,#280099 300px,#2d0099 312px,#330099 324px,#380099 336px,#3d0099 348px,#420099 360px,#470099 372px,#4c0099 384px,#520099 396px,#570099 408px,#5c0099 420px,#620099 432px,#670099 444px,#6c0099 456px,#720099 468px,#770099 480px,#7d0099 492px,#820099 504px,#880099 516px,#8e0099 528px,#930099 540px,#990098 552px,#990093 564px,#99008e 576px,#990089 588px,#990084 600px,#990080 612px,#99007c 624px,#990078 636px,#990077 640px) 0 444px/640px 4px no-repeat,linear-gradient(90deg,#000a99 0px,#000999 12px,#000899 24px,#000799 36px,#000599 48px,#000499 60px,#000399 72px,#000199 84px,#000099 96px,#000099 108px,#000099 120px,#000099 132px,#000099 144px,#000099 156px,#000099 168px,#000099 180px,#000099 192px,#010099 204px,#050099 216px,#0a0099 228px,#0f0099 240px,#140099 252px,#190099 264px,#1e0099 276px,#230099 288px,#280099 300px,#2d0099 312px,#320099 324px,#370099 336px,#3c0099 348px,#410099 360px,#460099 372px,#4b0099 384px,#510099 396px,#560099 408px,#5b0099 420px,#600099 432px,#660099 444px,#6b0099 456px,#700099 468px,#760099 480px,#7b0099 492px,#810099 504px,#860099 516px,#8c0099 528px,#910099 540px,#970099 552px,#990095 564px,#99008f 576px,#99008a 588px,#990086 600px,#990082 612px,#99007d 624px,#99007a 636px,#990078 640px) 0 448px/640px 4px no-repeat,linear-gradient(90deg,#000a99 0px,#000999 12px,#000799 24px,#000699 36px,#000599 48px,#000399 60px,#000299 72px,#000199 84px,#000099 96px,#000099 108px,#000099 120px,#000099 132px,#000099 144px,#000099 156px,#000099 168px,#000099 180px,#000099 192px,#000099 204px,#050099 216px,#0a0099 228px,#0f0099 240px,#140099 252px,#180099 264px,#1d0099 276px,#220099 288px,#270099 300px,#2c0099 312px,#310099 324px,#360099 336px,#3b0099 348px,#400099 360px,#450099 372px,#4a0099 384px,#4f0099 396px,#550099 408px,#5a0099 420px,#5f0099 432px,#640099 444px,#6a0099 456px,#6f0099 468px,#740099 480px,#7a0099 492px,#7f0099 504px,#850099 516px,#8a0099 528px,#900099 540px,#950099 552px,#990096 564px,#990091 576px,#99008c 588px,#990088 600px,#990083 612px,#99007f 624px,#99007b 636px,#99007a 640px) 0 452px/640px 4px no-repeat,linear-gradient(90deg,#000999 0px,#000899 12px,#000799 24px,#000699 36px,#000499 48px,#000399 60px,#000299 72px,#000099 84px,#000099 96px,#000099 108px,#000098 120px,#000099 132px,#000099 144px,#000099 156px,#000099 168px,#000099 180px,#000099 192px,#000099 204px,#050099 216px,#0a0099 228px,#0e0099 240px,#130099 252px,#180099 264px,#1d0099 276px,#220099 288px,#260099 300px,#2b0099 312px,#300099 324px,#350099 336px,#3a0099 348px,#3f0099 360px,#440099 372px,#490099 384px,#4e0099 396px,#530099 408px,#590099 420px,#5e0099 432px,#630099 444px,#680099 456px,#6e0099 468px,#730099 480px,#780099 492px,#7e0099 504px,#830099 516px,#880099 528px,#8e0099 540px,#930099 552px,#990098 564px,#990093 576px,#99008e 588px,#990089 600px,#990085 612px,#990081 624px,#99007d 636px,#99007b 640px) 0 456px/640px 4px no-repeat,linear-gradient(90deg,#000999 0px,#000899 12px,#000699 24px,#000599 36px,#000499 48px,#000399 60px,#000199 72px,#000099 84px,#000099 96px,#000099 108px,#000099 120px,#000099 132px,#000099 144px,#000099 156px,#000099 168px,#000099 180px,#000099 192px,#000099 204px,#050099 216px,#090099 228px,#0e0099 240px,#130099 252px,#170099 264px,#1c0099 276px,#210099 288px,#260099 300px,#2b0099 312px,#300099 324px,#340099 336px,#390099 348px,#3e0099 360px,#430099 372px,#480099 384px,#4d0099 396px,#520099 408px,#580099 420px,#5d0099 432px,#620099 444px,#670099 456px,#6c0099 468px,#710099 480px,#770099 492px,#7c0099 504px,#810099 516px,#870099 528px,#8c0099 540px,#910099 552px,#970099 564px,#990095 576px,#990090 588px,#99008b 600px,#990086 612px,#990082 624px,#99007e 636px,#99007d 640px) 0 460px/640px 4px no-repeat,linear-gradient(90deg,#000899 0px,#000799 12px,#000699 24px,#000599 36px,#000399 48px,#000299 60px,#000199 72px,#000099 84px,#000099 96px,#000099 108px,#000099 120px,#000099 132px,#000099 144px,#000099 156px,#000099 168px,#000099 180px,#000099 192px,#000099 204px,#040099 216px,#090099 228px,#0e0099 240px,#120099 252px,#170099 264px,#1c0099 276px,#200099 288px,#250099 300px,#2a0099 312px,#2f0099 324px,#340099 336px,#390099 348px,#3d0099 360px,#420099 372px,#470099 384px,#4c0099 396px,#510099 408px,#560099 420px,#5b0099 432px,#610099 444px,#660099 456px,#6b0099 468px,#700099 480px,#750099 492px,#7a0099 504px,#800099 516px,#850099 528px,#8a0099 540px,#900099 552px,#950099 564px,#990096 576px,#990091 588px,#99008d 600px,#990088 612px,#990084 624px,#990080 636px,#99007e 640px) 0 464px/640px 4px no-repeat,linear-gradient(90deg,#000899 0px,#000799 12px,#000599 24px,#000499 36px,#000399 48px,#000299 60px,#000099 72px,#000099 84px,#000099 96px,#000099 108px,#000099 120px,#000099 132px,#000099 144px,#000099 156px,#000099 168px,#000099 180px,#000099 192px,#000099 204px,#040099 216px,#090099 228px,#0d0099 240px,#120099 252px,#160099 264px,#1b0099 276px,#200099 288px,#250099 300px,#290099 312px,#2e0099 324px,#330099 336px,#380099 348px,#3d0099 360px,#410099 372px,#460099 384px,#4b0099 396px,#500099 408px,#550099 420px,#5a0099 432px,#5f0099 444px,#640099 456px,#6a0099 468px,#6f0099 480px,#740099 492px,#790099 504px,#7e0099 516px,#830099 528px,#890099 540px,#8e0099 552px,#930099 564px,#990098 576px,#990093 588px,#99008e 600px,#99008a 612px,#990085 624px,#990081 636px,#990080 640px) 0 468px/640px 4px no-repeat,linear-gradient(90deg,#000799 0px,#000699 12px,#000599 24px,#000498 36px,#000299 48px,#000199 60px,#000099 72px,#000099 84px,#000099 96px,#000099 108px,#000099 120px,#000099 132px,#000099 144px,#000099 156px,#000099 168px,#000099 180px,#000099 192px,#000098 204px,#040099 216px,#080099 228px,#0d0099 240px,#110099 252px,#160099 264px,#1b0099 276px,#1f0099 288px,#240099 300px,#290099 312px,#2d0099 324px,#320099 336px,#370099 348px,#3c0099 360px,#410099 372px,#450099 384px,#4a0099 396px,#4f0099 408px,#540099 420px,#590099 432px,#5e0099 444px,#630099 456px,#680099 468px,#6d0099 480px,#720099 492px,#780099 504px,#7d0099 516px,#820099 528px,#870099 540px,#8c0099 552px,#920099 564px,#970099 576px,#990095 588px,#990090 600px,#99008b 612px,#990087 624px,#990083 636px,#990081 640px) 0 472px/640px 4px no-repeat,linear-gradient(90deg,#000799 0px,#000699 12px,#000599 24px,#000399 36px,#000299 48px,#000199 60px,#000099 72px,#000099 84px,#000099 96px,#000099 108px,#000099 120px,#000099 132px,#000099 144px,#000099 156px,#000099 168px,#000099 180px,#000099 192px,#000099 204px,#030099 216px,#080099 228px,#0c0099 240px,#110099 252px,#160099 264px,#1a0099 276px,#1f0099 288px,#230099 300px,#280099 312px,#2d0099 324px,#310099 336px,#360099 348px,#3b0099 360px,#400099 372px,#450099 384px,#490099 396px,#4e0099 408px,#530099 420px,#580099 432px,#5d0099 444px,#620099 456px,#670099 468px,#6c0099 480px,#710099 492px,#760099 504px,#7b0099 516px,#800099 528px,#860099 540px,#8b0099 552px,#900099 564px,#950099 576px,#990097 588px,#990092 600px,#99008d 612px,#990088 624px,#990084 636px,#990083 640px) 0 476px/640px 4px no-repeat,linear-gradient(90deg,#000699 0px,#000599 12px,#000499 24px,#000399 36px,#000299 48px,#000099 60px,#000099 72px,#000099 84px,#000099 96px,#000099 108px,#000099 120px,#000099 132px,#000099 144px,#000099 156px,#000099 168px,#000099 180px,#000099 192px,#000099 204px,#030099 216px,#080099 228px,#0c0099 240px,#110099 252px,#150099 264px,#1a0099 276px,#1e0099 288px,#230099 300px,#270099 312px,#2c0099 324px,#310099 336px,#350098 348px,#3a0098 360px,#3f0098 372px,#440099 384px,#480099 396px,#4d0099 408px,#520099 420px,#570099 432px,#5c0099 444px,#610099 456px,#660099 468px,#6b0099 480px,#700099 492px,#750099 504px,#7a0099 516px,#7f0099 528px,#840099 540px,#890099 552px,#8e0099 564px,#930099 576px,#990098 588px,#990093 600px,#99008f 612px,#99008a 624px,#990086 636px,#990084 640px) 0 480px/640px 4px no-repeat,linear-gradient(90deg,#000699 0px,#000599 12px,#000499 24px,#000299 36px,#000199 48px,#000099 60px,#000099 72px,#000099 84px,#000099 96px,#000099 108px,#000099 120px,#000099 132px,#000099 144px,#000099 156px,#000099 168px,#000099 180px,#000099 192px,#000099 204px,#030099 216px,#070099 228px,#0c0099 240px,#100099 252px,#150099 264px,#190099 276px,#1e0099 288px,#220099 300px,#270099 312px,#2b0099 324px,#300099 336px,#350099 348px,#390099 360px,#3e0099 372px,#430099 384px,#480099 396px,#4c0099 408px,#510099 420px,#560099 432px,#5b0099 444px,#600099 456px,#640099 468px,#690099 480px,#6e0099 492px,#730099 504px,#780099 516px,#7d0099 528px,#820099 540px,#880099 552px,#8d0099 564px,#920099 576px,#970099 588px,#990095 600px,#990090 612px,#99008c 624px,#990087 636px,#990086 640px) 0 484px/640px 4px no-repeat,linear-gradient(90deg,#000699 0px,#000499 12px,#000399 24px,#000299 36px,#000199 48px,#000099 60px,#000099 72px,#000099 84px,#000099 96px,#000099 108px,#000099 120px,#000099 132px,#000099 144px,#000099 156px,#000099 168px,#000099 180px,#000099 192px,#000099 204px,#030099 216px,#070099 228px,#0b0099 240px,#100099 252px,#140099 264px,#190099 276px,#1d0099 288px,#220099 300px,#260099 312px,#2b0099 324px,#2f0099 336px,#340099 348px,#390099 360px,#3d0099 372px,#420099 384px,#470099 396px,#4b0099 408px,#500099 420px,#550099 432px,#5a0099 444px,#5f0099 456px,#630099 468px,#680099 480px,#6d0099 492px,#720099 504px,#770099 516px,#7c0099 528px,#810099 540px,#860099 552px,#8b0099 564px,#900099 576px,#950099 588px,#990096 600px,#990092 612px,#99008d 624px,#990089 636px,#990087 640px) 0 488px/640px 4px no-repeat"></div></noscript>
<canvas id="cv76" class="a" style="left:1017px;top:122px" width="640" height="491"></canvas>
<script>
(function(){
var c=document.getElementById('cv76');var ctx=c.getContext('2d');var W=c.width,H=c.height;
var o=document.createElement('canvas');o.width=W;o.height=H;var oc=o.getContext('2d');
var im=oc.createImageData(W,H);var d=im.data;
function TP(u,v){return [1016.7+u*1066-1017,613-v*816.7-122];}
var TV=[TP(0.4507,0.5229),TP(0.1250,0.5625),TP(0.1754,0.1579)];
var EA=[],EB=[],EC=[];
for(var e=0;e<3;e++){var p1=TV[e],p2=TV[(e+1)%3],p3=TV[(e+2)%3];var a=p2[1]-p1[1],b=p1[0]-p2[0];var L=Math.sqrt(a*a+b*b);a/=L;b/=L;var c=-(a*p1[0]+b*p1[1]);
if(a*p3[0]+b*p3[1]+c<0){a=-a;b=-b;c=-c;}EA.push(a);EB.push(b);EC.push(c);}
for(var j=0;j<H;j++){var v=(613-(122+j+0.5))/816.7;if(v<0.002)v=0.002;
for(var i=0;i<W;i++){var u=(1017+i+0.5-1016.7)/1066;
var dd=6*u-16*v+12;var x=9*u/dd,y=4*v/dd;var X=x/y,Z=(1-x-y)/y;
var R=3.2406*X-1.5372-0.4986*Z,G=-0.9689*X+1.8758+0.0415*Z,B=0.0557*X-0.2040+1.0570*Z;
if(R<0)R=0;if(G<0)G=0;if(B<0)B=0;var m=Math.max(R,G,B);if(m<=0)m=1;
var px=i+0.5,py=j+0.5;var dm=1e9;for(var e=0;e<3;e++){var dv=(EA[e]*px+EB[e]*py+EC[e]);if(dv<dm)dm=dv;}
var cov=dm+0.5;if(cov<0)cov=0;if(cov>1)cov=1;
var k=(0.6+0.4*cov)*255/m;var p=(j*W+i)*4;d[p]=R*k;d[p+1]=G*k;d[p+2]=B*k;d[p+3]=255;}}
oc.putImageData(im,0,0);
var P=[273.45,477.45,273.27,477.50,273.02,477.58,272.73,477.67,272.40,477.77,272.05,477.86,271.70,477.94,271.36,477.98,271.03,477.99,270.73,477.97,270.42,477.91,270.12,477.84,269.81,477.75,269.51,477.64,269.19,477.51,268.88,477.37,268.55,477.21,268.23,477.04,267.90,476.85,267.58,476.64,267.25,476.42,266.91,476.19,266.55,475.93,266.18,475.66,265.79,475.38,265.38,475.08,264.97,474.77,264.54,474.45,264.09,474.11,263.63,473.75,263.14,473.37,262.62,472.96,262.06,472.52,261.48,472.06,260.87,471.57,260.23,471.06,259.56,470.53,258.87,469.98,258.16,469.40,257.43,468.80,256.67,468.17,255.90,467.53,255.12,466.86,254.31,466.17,253.48,465.46,252.62,464.73,251.74,463.97,250.82,463.20,249.88,462.41,248.91,461.60,247.92,460.78,246.91,459.94,245.86,459.08,244.78,458.19,243.67,457.28,242.50,456.32,241.29,455.33,240.02,454.29,238.71,453.22,237.36,452.12,235.96,450.99,234.53,449.82,233.06,448.62,231.56,447.39,230.02,446.13,228.46,444.84,226.86,443.53,225.24,442.20,223.58,440.84,221.87,439.43,220.12,437.96,218.32,436.43,216.46,434.83,214.55,433.17,212.59,431.47,210.59,429.72,208.54,427.90,206.43,426.02,204.28,424.06,202.07,422.00,199.81,419.85,197.51,417.65,195.20,415.43,192.84,413.15,190.43,410.77,187.94,408.26,185.35,405.58,182.65,402.70,179.81,399.57,176.84,396.22,173.75,392.69,170.56,388.98,167.26,385.09,163.87,381.02,160.41,376.76,156.88,372.32,153.29,367.69,149.62,362.87,145.85,357.86,142.01,352.67,138.09,347.29,134.11,341.74,130.09,336.01,126.04,330.13,121.96,324.09,117.83,317.84,113.62,311.37,109.36,304.71,105.06,297.89,100.75,290.96,96.45,283.94,92.19,276.88,87.98,269.81,83.78,262.67,79.55,255.40,75.31,248.03,71.10,240.60,66.96,233.16,62.92,225.74,59.01,218.38,55.28,211.13,51.68,203.91,48.19,196.67,44.81,189.44,41.54,182.26,38.39,175.16,35.36,168.19,32.47,161.39,29.72,154.78,27.10,148.34,24.61,142.00,22.24,135.78,20.01,129.71,17.90,123.81,15.93,118.09,14.09,112.57,12.38,107.28,10.81,102.21,9.38,97.34,8.10,92.68,6.94,88.20,5.90,83.90,4.97,79.76,4.14,75.80,3.40,71.98,2.77,68.34,2.25,64.90,1.84,61.64,1.54,58.54,1.34,55.58,1.22,52.75,1.19,50.03,1.23,47.40,1.36,44.88,1.58,42.49,1.90,40.23,2.30,38.09,2.78,36.05,3.33,34.12,3.96,32.27,4.65,30.51,5.42,28.84,6.27,27.27,7.21,25.81,8.21,24.44,9.28,23.15,10.41,21.96,11.58,20.84,12.80,19.79,14.06,18.83,15.39,17.97,16.78,17.20,18.22,16.51,19.70,15.89,21.22,15.32,22.77,14.80,24.34,14.32,25.95,13.89,27.59,13.54,29.28,13.24,31.00,13.00,32.74,12.79,34.51,12.62,36.29,12.45,38.08,12.30,39.90,12.16,41.74,12.05,43.60,11.97,45.48,11.91,47.37,11.87,49.27,11.84,51.17,11.82,53.06,11.80,54.95,11.78,56.84,11.78,58.72,11.79,60.62,11.82,62.52,11.85,64.43,11.88,66.35,11.93,68.28,11.99,70.23,12.05,72.17,12.12,74.13,12.20,76.10,12.29,78.08,12.39,80.08,12.49,82.11,12.61,84.15,12.73,86.22,12.85,88.31,12.99,90.41,13.13,92.54,13.28,94.68,13.44,96.85,13.61,99.04,13.78,101.26,13.95,103.50,14.14,105.76,14.33,108.04,14.53,110.34,14.74,112.67,14.95,115.03,15.17,117.42,15.39,119.84,15.62,122.29,15.86,124.76,16.10,127.27,16.35,129.80,16.60,132.36,16.87,134.96,17.13,137.59,17.40,140.26,17.68,142.97,17.96,145.71,18.25,148.48,18.54,151.30,18.84,154.14,19.15,157.02,19.46,159.95,19.78,162.91,20.10,165.90,20.43,168.93,20.76,172.00,21.10,175.11,21.45,178.25,21.80,181.44,22.15,184.67,22.52,187.94,22.88,191.26,23.25,194.62,23.63,198.02,24.01,201.46,24.40,204.95,24.79,208.48,25.19,212.05,25.59,215.67,26.00,219.32,26.42,223.03,26.84,226.77,27.26,230.55,27.70,234.38,28.13,238.25,28.58,242.17,29.02,246.13,29.48,250.13,29.94,254.18,30.40,258.27,30.87,262.41,31.34,266.58,31.82,270.80,32.31,275.06,32.79,279.36,33.29,283.70,33.79,288.08,34.29,292.51,34.80,296.98,35.31,301.49,35.83,306.03,36.35,310.59,36.87,315.19,37.40,319.82,37.93,324.50,38.46,329.21,39.00,333.96,39.54,338.72,40.08,343.51,40.62,348.31,41.17,353.11,41.72,357.94,42.27,362.80,42.83,367.69,43.40,372.59,43.96,377.49,44.53,382.38,45.09,387.23,45.65,392.05,46.20,396.83,46.75,401.60,47.30,406.34,47.84,411.07,48.38,415.77,48.92,420.46,49.46,425.14,49.99,429.80,50.53,434.47,51.06,439.14,51.60,443.81,52.13,448.45,52.66,453.07,53.19,457.63,53.71,462.13,54.23,466.55,54.73,470.90,55.22,475.20,55.71,479.45,56.19,483.65,56.67,487.79,57.14,491.87,57.60,495.88,58.06,499.84,58.51,503.73,58.95,507.57,59.39,511.34,59.83,515.06,60.26,518.71,60.68,522.30,61.09,525.81,61.49,529.25,61.89,532.62,62.28,535.92,62.66,539.14,63.03,542.30,63.39,545.40,63.75,548.42,64.10,551.39,64.44,554.29,64.77,557.13,65.09,559.90,65.41,562.60,65.71,565.23,66.01,567.81,66.31,570.34,66.59,572.82,66.87,575.25,67.15,577.64,67.42,579.96,67.69,582.23,67.95,584.45,68.21,586.62,68.46,588.76,68.70,590.86,68.94,592.93,69.18,594.98,69.42,596.98,69.65,598.96,69.88,600.89,70.10,602.79,70.32,604.65,70.53,606.47,70.74,608.26,70.95,610.01,71.15,611.72,71.34,613.40,71.54,615.04,71.73,616.64,71.91,618.21,72.09,619.73,72.27,621.22,72.43,622.66,72.60,624.07,72.76,625.43,72.91,626.76,73.06,628.05,73.20,629.30,73.34,630.51,73.48,631.70,73.61,632.80,73.74,633.82,73.85,634.79,73.96,635.73,74.07,636.67,74.18,637.64,74.29,638.69,74.41,639.83,74.54,641.08,74.69,642.42,74.84,643.83,75.00,645.27,75.17,646.72,75.34,648.16,75.50,649.56,75.66,650.90,75.82,652.21,75.97,653.54,76.12,654.87,76.27,656.16,76.42,657.40,76.56,658.55,76.70,659.60,76.82,660.51,76.92,661.28,77.01,661.94,77.09,662.50,77.15,662.97,77.20,663.37,77.25,663.71,77.29,663.99,77.32,664.24,77.35];
ctx.save();ctx.beginPath();ctx.moveTo(P[0],P[1]);for(var q=2;q<P.length;q+=2)ctx.lineTo(P[q],P[q+1]);ctx.closePath();
ctx.lineJoin='round';ctx.clip();ctx.drawImage(o,0,0);ctx.restore();
})();
</script>
<svg class="a" style="left:979px;top:98px" width="681" height="544" viewBox="979 98 681 544">
<text x="1319" y="115" font-size="13.5" fill="#d8d8d8" text-anchor="middle">CIE 1976 u'v'</text>
<rect x="1017" y="122" width="640" height="491" fill="none" stroke="#a8a8a8" stroke-width="2"/>
<line x1="1010" y1="613.0" x2="1017" y2="613.0" stroke="#c8c8c8" stroke-width="1.5"/>
<text x="1010" y="618.0" font-size="14" fill="#d8d8d8" text-anchor="end">0</text>
<line x1="1010" y1="572.2" x2="1017" y2="572.2" stroke="#c8c8c8" stroke-width="1.5"/>
<text x="1010" y="577.2" font-size="14" fill="#d8d8d8" text-anchor="end">0,05</text>
<line x1="1010" y1="531.3" x2="1017" y2="531.3" stroke="#c8c8c8" stroke-width="1.5"/>
<text x="1010" y="536.3" font-size="14" fill="#d8d8d8" text-anchor="end">0,1</text>
<line x1="1010" y1="490.5" x2="1017" y2="490.5" stroke="#c8c8c8" stroke-width="1.5"/>
<text x="1010" y="495.5" font-size="14" fill="#d8d8d8" text-anchor="end">0,15</text>
<line x1="1010" y1="449.7" x2="1017" y2="449.7" stroke="#c8c8c8" stroke-width="1.5"/>
<text x="1010" y="454.7" font-size="14" fill="#d8d8d8" text-anchor="end">0,2</text>
<line x1="1010" y1="408.8" x2="1017" y2="408.8" stroke="#c8c8c8" stroke-width="1.5"/>
<text x="1010" y="413.8" font-size="14" fill="#d8d8d8" text-anchor="end">0,25</text>
<line x1="1010" y1="368.0" x2="1017" y2="368.0" stroke="#c8c8c8" stroke-width="1.5"/>
<text x="1010" y="373.0" font-size="14" fill="#d8d8d8" text-anchor="end">0,3</text>
<line x1="1010" y1="327.2" x2="1017" y2="327.2" stroke="#c8c8c8" stroke-width="1.5"/>
<text x="1010" y="332.2" font-size="14" fill="#d8d8d8" text-anchor="end">0,35</text>
<line x1="1010" y1="286.3" x2="1017" y2="286.3" stroke="#c8c8c8" stroke-width="1.5"/>
<text x="1010" y="291.3" font-size="14" fill="#d8d8d8" text-anchor="end">0,4</text>
<line x1="1010" y1="245.5" x2="1017" y2="245.5" stroke="#c8c8c8" stroke-width="1.5"/>
<text x="1010" y="250.5" font-size="14" fill="#d8d8d8" text-anchor="end">0,45</text>
<line x1="1010" y1="204.6" x2="1017" y2="204.6" stroke="#c8c8c8" stroke-width="1.5"/>
<text x="1010" y="209.6" font-size="14" fill="#d8d8d8" text-anchor="end">0,5</text>
<line x1="1010" y1="163.8" x2="1017" y2="163.8" stroke="#c8c8c8" stroke-width="1.5"/>
<text x="1010" y="168.8" font-size="14" fill="#d8d8d8" text-anchor="end">0,55</text>
<line x1="1016.7" y1="613" x2="1016.7" y2="620" stroke="#c8c8c8" stroke-width="1.4"/>
<text x="1016.7" y="635" font-size="14" fill="#d8d8d8" text-anchor="middle">0</text>
<line x1="1070.0" y1="613" x2="1070.0" y2="620" stroke="#c8c8c8" stroke-width="1.4"/>
<text x="1070.0" y="635" font-size="14" fill="#d8d8d8" text-anchor="middle">0,05</text>
<line x1="1123.3" y1="613" x2="1123.3" y2="620" stroke="#c8c8c8" stroke-width="1.4"/>
<text x="1123.3" y="635" font-size="14" fill="#d8d8d8" text-anchor="middle">0,1</text>
<line x1="1176.6" y1="613" x2="1176.6" y2="620" stroke="#c8c8c8" stroke-width="1.4"/>
<text x="1176.6" y="635" font-size="14" fill="#d8d8d8" text-anchor="middle">0,15</text>
<line x1="1229.9" y1="613" x2="1229.9" y2="620" stroke="#c8c8c8" stroke-width="1.4"/>
<text x="1229.9" y="635" font-size="14" fill="#d8d8d8" text-anchor="middle">0,2</text>
<line x1="1283.2" y1="613" x2="1283.2" y2="620" stroke="#c8c8c8" stroke-width="1.4"/>
<text x="1283.2" y="635" font-size="14" fill="#d8d8d8" text-anchor="middle">0,25</text>
<line x1="1336.5" y1="613" x2="1336.5" y2="620" stroke="#c8c8c8" stroke-width="1.4"/>
<text x="1336.5" y="635" font-size="14" fill="#d8d8d8" text-anchor="middle">0,3</text>
<line x1="1389.8" y1="613" x2="1389.8" y2="620" stroke="#c8c8c8" stroke-width="1.4"/>
<text x="1389.8" y="635" font-size="14" fill="#d8d8d8" text-anchor="middle">0,35</text>
<line x1="1443.1" y1="613" x2="1443.1" y2="620" stroke="#c8c8c8" stroke-width="1.4"/>
<text x="1443.1" y="635" font-size="14" fill="#d8d8d8" text-anchor="middle">0,4</text>
<line x1="1496.4" y1="613" x2="1496.4" y2="620" stroke="#c8c8c8" stroke-width="1.4"/>
<text x="1496.4" y="635" font-size="14" fill="#d8d8d8" text-anchor="middle">0,45</text>
<line x1="1549.7" y1="613" x2="1549.7" y2="620" stroke="#c8c8c8" stroke-width="1.4"/>
<text x="1549.7" y="635" font-size="14" fill="#d8d8d8" text-anchor="middle">0,5</text>
<line x1="1603.0" y1="613" x2="1603.0" y2="620" stroke="#c8c8c8" stroke-width="1.4"/>
<text x="1603.0" y="635" font-size="14" fill="#d8d8d8" text-anchor="middle">0,55</text>
<rect x="1401" y="581" width="252" height="31" fill="#333333"/>
<text x="1401" y="603" font-size="19.9" fill="#f4f4f4" xml:space="preserve">Gamut Coverage:  134,4%</text>
<rect x="1142.9" y="144.9" width="13" height="13" fill="none" stroke="#f0f0f0" stroke-width="2"/>
<rect x="1226.9" y="152.9" width="13" height="13" fill="none" stroke="#f0f0f0" stroke-width="2"/>
<rect x="1489.8" y="177.2" width="13" height="13" fill="none" stroke="#f0f0f0" stroke-width="2"/>
<rect x="1158.0" y="232.9" width="13" height="13" fill="none" stroke="#f0f0f0" stroke-width="2"/>
<rect x="1334.8" y="334.7" width="13" height="13" fill="none" stroke="#f0f0f0" stroke-width="2"/>
<rect x="1197.0" y="477.0" width="13" height="13" fill="none" stroke="#f0f0f0" stroke-width="2"/>
<circle cx="1121.9" cy="140.5" r="4.6" fill="#00b400" stroke="#000" stroke-width="1.4"/>
<circle cx="1230.9" cy="151.4" r="4.6" fill="#c0b000" stroke="#000" stroke-width="1.4"/>
<circle cx="1538.7" cy="182.2" r="4.6" fill="#cc0000" stroke="#000" stroke-width="1.4"/>
<circle cx="1142.5" cy="234.3" r="4.6" fill="#00a8a8" stroke="#000" stroke-width="1.4"/>
<circle cx="1367" cy="338.5" r="4.6" fill="#9a009a" stroke="#000" stroke-width="1.4"/>
<circle cx="1197.1" cy="491.5" r="4.6" fill="#000090" stroke="#000" stroke-width="1.4"/>
<rect x="1220.2" y="222" width="12.5" height="12.5" fill="none" stroke="#000" stroke-width="2.4"/>
<circle cx="1224.5" cy="223.6" r="4.6" fill="#aaaaaa" stroke="#000" stroke-width="1.3"/>
<circle cx="1222.4" cy="220.5" r="4.8" fill="#ffffff" stroke="#000" stroke-width="1.3"/>
</svg>
<div class="a" style="left:13px;top:688px;font-size:29.9px;color:#f4f4f4;white-space:nowrap">Current Reading</div>
<div class="a" style="left:13px;top:762.5px;font-size:25.1px;color:#f4f4f4;white-space:nowrap">x: 0,3158</div>
<div class="a" style="left:170px;top:762.5px;font-size:25.1px;color:#f4f4f4;white-space:nowrap">y: 0,3459</div>
<div class="a" style="left:13px;top:802.5px;font-size:25.1px;color:#f4f4f4;white-space:nowrap">fL: 102,43</div>
<div class="a" style="left:13px;top:843.5px;font-size:25.1px;color:#f4f4f4;white-space:nowrap;letter-spacing:0.6px">cd/m<span style="font-size:27px">²</span>: 350,94</div>
<svg class="a" style="left:310px;top:660px" width="320" height="235" viewBox="310 660 320 235">
<defs><linearGradient id="rbr" x1="0" x2="0" y1="0" y2="1"><stop offset="0" stop-color="#ff5555"/><stop offset="1" stop-color="#ff4a4a"/></linearGradient>
<linearGradient id="rbg" x1="0" x2="0" y1="0" y2="1"><stop offset="0" stop-color="#5aaa5a"/><stop offset="1" stop-color="#3a983a"/></linearGradient></defs>
<rect x="355.2" y="688" width="250.00000000000006" height="179.60000000000002" fill="#232323"/>
<line x1="355.2" y1="706.6" x2="605.2" y2="706.6" stroke="#8e8e8e" stroke-width="1.7"/>
<line x1="349.2" y1="706.6" x2="355.2" y2="706.6" stroke="#d0d0d0" stroke-width="2"/>
<text x="349.2" y="711.6" font-size="14" fill="#d8d8d8" text-anchor="end">104</text>
<line x1="355.2" y1="742.8" x2="605.2" y2="742.8" stroke="#8e8e8e" stroke-width="1.7"/>
<line x1="349.2" y1="742.8" x2="355.2" y2="742.8" stroke="#d0d0d0" stroke-width="2"/>
<text x="349.2" y="747.8" font-size="14" fill="#d8d8d8" text-anchor="end">102</text>
<line x1="355.2" y1="779.0" x2="605.2" y2="779.0" stroke="#8e8e8e" stroke-width="1.7"/>
<line x1="349.2" y1="779.0" x2="355.2" y2="779.0" stroke="#d0d0d0" stroke-width="2"/>
<text x="349.2" y="784.0" font-size="14" fill="#d8d8d8" text-anchor="end">100</text>
<line x1="355.2" y1="815.2" x2="605.2" y2="815.2" stroke="#8e8e8e" stroke-width="1.7"/>
<line x1="349.2" y1="815.2" x2="355.2" y2="815.2" stroke="#d0d0d0" stroke-width="2"/>
<text x="349.2" y="820.2" font-size="14" fill="#d8d8d8" text-anchor="end">98</text>
<line x1="355.2" y1="851.4" x2="605.2" y2="851.4" stroke="#8e8e8e" stroke-width="1.7"/>
<line x1="349.2" y1="851.4" x2="355.2" y2="851.4" stroke="#d0d0d0" stroke-width="2"/>
<text x="349.2" y="856.4" font-size="14" fill="#d8d8d8" text-anchor="end">96</text>
<rect x="355.2" y="688" width="250.00000000000006" height="179.60000000000002" fill="none" stroke="#9a9a9a" stroke-width="2"/>
<rect x="380.5" y="827" width="65" height="40.6" fill="url(#rbr)" stroke="#000" stroke-width="1.4"/>
<rect x="447" y="757" width="65" height="110.6" fill="url(#rbg)" stroke="#000" stroke-width="1.4"/>
<rect x="513.5" y="865" width="65" height="2.5" fill="#5050b0" stroke="#000" stroke-width="1"/>
<line x1="355.2" y1="867.6" x2="355.2" y2="873.6" stroke="#d0d0d0" stroke-width="2"/>
<line x1="605.2" y1="867.6" x2="605.2" y2="873.6" stroke="#d0d0d0" stroke-width="2"/>
<text x="465" y="683" font-size="14" fill="#d8d8d8" text-anchor="middle">RGB Balance</text>
<text x="480" y="885" font-size="14" fill="#d8d8d8" text-anchor="middle">100W</text>
</svg>
<div class="a" style="left:635px;top:679px;width:342px;height:199px;background:#8a8a8a"></div>
<noscript><div class="a" style="left:636px;top:680px;width:340px;height:197px;background:linear-gradient(135deg,#5a9a00,#9a9400 55%,#8a5a00)"></div><div class="a" style="left:636px;top:680px;width:340px;height:197px;clip-path:polygon(0 21px,340px 176.5px,340px 197px,0 197px);background:linear-gradient(120deg,#99ff00,#ffff20 45%,#ff9900)"></div></noscript>
<canvas id="cv31" class="a" style="left:636px;top:680px" width="340" height="197"></canvas>
<script>
(function(){
var c=document.getElementById('cv31');var ctx=c.getContext('2d');var W=c.width,H=c.height;
var im=ctx.createImageData(W,H);var d=im.data;
function hsv(h,s,v){h=((h%360)+360)%360/60;var i=Math.floor(h),f=h-i,p=v*(1-s),q=v*(1-s*f),t=v*(1-s*(1-f));
var r=[v,q,p,p,t,v][i],g=[t,v,v,q,p,p][i],b=[p,p,t,v,v,q][i];return [r,g,b];}
for(var j=0;j<H;j++){for(var i=0;i<W;i++){var X=i+1.5,Y=j+1.5;
var line=21+0.4575*X;var h=85.2-0.083*X-0.09*Y;var dist=(Y-line)/1.0997;var cov=dist+0.5;if(cov<0)cov=0;if(cov>1)cov=1;
var s=1-0.0012*Math.max(dist,0)*cov;var v=(0.625-0.0002*Y)*(1-cov)+cov;
var cc=hsv(h,s,v);var p=(j*W+i)*4;d[p]=cc[0]*255;d[p+1]=cc[1]*255;d[p+2]=cc[2]*255;d[p+3]=255;}}
ctx.putImageData(im,0,0);
})();
</script>
<svg class="a" style="left:620px;top:650px" width="370" height="240" viewBox="620 650 370 240">
<text x="806" y="674" font-size="14" fill="#d8d8d8" text-anchor="middle">CIE 1931 xy</text>
<rect x="799" y="771" width="13" height="13" fill="none" stroke="#000" stroke-width="2"/>
<circle cx="819.5" cy="728.6" r="3.8" fill="#c0c0c0" stroke="#000" stroke-width="1"/>
<circle cx="826" cy="710.7" r="4.6" fill="#ffffff" stroke="#000" stroke-width="1"/>
</svg>
<div class="a" style="left:993px;top:663px;width:652px;height:225px;background:#0a0a0a"></div>
<div class="a" style="left:994.3px;top:664.5px;width:634px;height:33.5px;background:linear-gradient(#323232 0,#323232 49%,#151515 51%,#141414 100%)"></div>
<div class="a" style="left:1628.3px;top:664.5px;width:16px;height:33.5px;background:#2c2c2c"></div>
<div class="a" style="left:1081.0px;top:673px;width:90px;text-align:center;font-size:17px;color:#f0f0f0;letter-spacing:-0.3px">White</div>
<div class="a" style="left:1158.7px;top:673px;width:90px;text-align:center;font-size:17px;color:#f0f0f0;letter-spacing:-0.3px">Red</div>
<div class="a" style="left:1236.4px;top:673px;width:90px;text-align:center;font-size:17px;color:#f0f0f0;letter-spacing:-0.3px">Green</div>
<div class="a" style="left:1314.1px;top:673px;width:90px;text-align:center;font-size:17px;color:#f0f0f0;letter-spacing:-0.3px">Blue</div>
<div class="a" style="left:1391.8px;top:673px;width:90px;text-align:center;font-size:17px;color:#f0f0f0;letter-spacing:-0.3px">Cyan</div>
<div class="a" style="left:1469.5px;top:673px;width:90px;text-align:center;font-size:17px;color:#f0f0f0;letter-spacing:-0.3px">Magenta</div>
<div class="a" style="left:1547.2px;top:673px;width:90px;text-align:center;font-size:17px;color:#f0f0f0;letter-spacing:-0.3px">Yellow</div>
<div class="a" style="left:994.3px;top:698px;width:634px;height:170px;overflow:hidden">
<div class="a" style="left:0;top:0px;width:634px;height:31px;background:#404040"></div>
<div class="a" style="left:12px;top:6px;font-size:17.5px;font-weight:bold;color:#f0f0f0;white-space:nowrap;letter-spacing:-0.6px">x: CIE31</div>
<div class="a" style="left:97.0px;top:7px;font-size:17.5px;color:#f0f0f0;white-space:nowrap;letter-spacing:-0.7px">0,3148</div>
<div class="a" style="left:174.7px;top:7px;font-size:17.5px;color:#f0f0f0;white-space:nowrap;letter-spacing:-0.7px">0,6735</div>
<div class="a" style="left:252.4px;top:7px;font-size:17.5px;color:#f0f0f0;white-space:nowrap;letter-spacing:-0.7px">0,2643</div>
<div class="a" style="left:330.1px;top:7px;font-size:17.5px;color:#f0f0f0;white-space:nowrap;letter-spacing:-0.7px">0,1433</div>
<div class="a" style="left:407.8px;top:7px;font-size:17.5px;color:#f0f0f0;white-space:nowrap;letter-spacing:-0.7px">0,1995</div>
<div class="a" style="left:485.5px;top:7px;font-size:17.5px;color:#f0f0f0;white-space:nowrap;letter-spacing:-0.7px">0,3426</div>
<div class="a" style="left:563.2px;top:7px;font-size:17.5px;color:#f0f0f0;white-space:nowrap;letter-spacing:-0.7px">0,4314</div>
<div class="a" style="left:0;top:31px;width:634px;height:31px;background:#7a7a7a"></div>
<div class="a" style="left:12px;top:37px;font-size:17.5px;font-weight:bold;color:#f0f0f0;white-space:nowrap;letter-spacing:-0.6px">y: CIE31</div>
<div class="a" style="left:97.0px;top:38px;font-size:17.5px;color:#f0f0f0;white-space:nowrap;letter-spacing:-0.7px">0,3414</div>
<div class="a" style="left:174.7px;top:38px;font-size:17.5px;color:#f0f0f0;white-space:nowrap;letter-spacing:-0.7px">0,3208</div>
<div class="a" style="left:252.4px;top:38px;font-size:17.5px;color:#f0f0f0;white-space:nowrap;letter-spacing:-0.7px">0,6815</div>
<div class="a" style="left:330.1px;top:38px;font-size:17.5px;color:#f0f0f0;white-space:nowrap;letter-spacing:-0.7px">0,0553</div>
<div class="a" style="left:407.8px;top:38px;font-size:17.5px;color:#f0f0f0;white-space:nowrap;letter-spacing:-0.7px">0,3477</div>
<div class="a" style="left:485.5px;top:38px;font-size:17.5px;color:#f0f0f0;white-space:nowrap;letter-spacing:-0.7px">0,1545</div>
<div class="a" style="left:563.2px;top:38px;font-size:17.5px;color:#f0f0f0;white-space:nowrap;letter-spacing:-0.7px">0,5359</div>
<div class="a" style="left:0;top:62px;width:634px;height:31px;background:#404040"></div>
<div class="a" style="left:12px;top:68px;font-size:17.5px;font-weight:bold;color:#f0f0f0;white-space:nowrap;letter-spacing:-0.6px">Y</div>
<div class="a" style="left:97.0px;top:69px;font-size:17.5px;color:#f0f0f0;white-space:nowrap;letter-spacing:-0.7px">277,4390</div>
<div class="a" style="left:174.7px;top:69px;font-size:17.5px;color:#f0f0f0;white-space:nowrap;letter-spacing:-0.7px">62,9360</div>
<div class="a" style="left:252.4px;top:69px;font-size:17.5px;color:#f0f0f0;white-space:nowrap;letter-spacing:-0.7px">194,7615</div>
<div class="a" style="left:330.1px;top:69px;font-size:17.5px;color:#f0f0f0;white-space:nowrap;letter-spacing:-0.7px">18,0252</div>
<div class="a" style="left:407.8px;top:69px;font-size:17.5px;color:#f0f0f0;white-space:nowrap;letter-spacing:-0.7px">212,6330</div>
<div class="a" style="left:485.5px;top:69px;font-size:17.5px;color:#f0f0f0;white-space:nowrap;letter-spacing:-0.7px">80,5643</div>
<div class="a" style="left:563.2px;top:69px;font-size:17.5px;color:#f0f0f0;white-space:nowrap;letter-spacing:-0.7px">257,7365</div>
<div class="a" style="left:0;top:93px;width:634px;height:31px;background:#7a7a7a"></div>
<div class="a" style="left:12px;top:99px;font-size:17.5px;font-weight:bold;color:#f0f0f0;white-space:nowrap;letter-spacing:-0.6px">Target Y</div>
<div class="a" style="left:97.0px;top:100px;font-size:17.5px;color:#f0f0f0;white-space:nowrap;letter-spacing:-0.7px">182,8363</div>
<div class="a" style="left:174.7px;top:100px;font-size:17.5px;color:#f0f0f0;white-space:nowrap;letter-spacing:-0.7px">38,8812</div>
<div class="a" style="left:252.4px;top:100px;font-size:17.5px;color:#f0f0f0;white-space:nowrap;letter-spacing:-0.7px">130,7569</div>
<div class="a" style="left:330.1px;top:100px;font-size:17.5px;color:#f0f0f0;white-space:nowrap;letter-spacing:-0.7px">13,1981</div>
<div class="a" style="left:407.8px;top:100px;font-size:17.5px;color:#f0f0f0;white-space:nowrap;letter-spacing:-0.7px">143,9551</div>
<div class="a" style="left:485.5px;top:100px;font-size:17.5px;color:#f0f0f0;white-space:nowrap;letter-spacing:-0.7px">52,0794</div>
<div class="a" style="left:563.2px;top:100px;font-size:17.5px;color:#f0f0f0;white-space:nowrap;letter-spacing:-0.7px">169,6382</div>
<div class="a" style="left:0;top:124px;width:634px;height:31px;background:#404040"></div>
<div class="a" style="left:12px;top:130px;font-size:17.5px;font-weight:bold;color:#f0f0f0;white-space:nowrap;letter-spacing:-0.6px">ΔE 2000</div>
<div class="a" style="left:97.0px;top:131px;font-size:17.5px;color:#f0f0f0;white-space:nowrap;letter-spacing:-0.7px">11,6157</div>
<div class="a" style="left:174.7px;top:131px;font-size:17.5px;color:#f0f0f0;white-space:nowrap;letter-spacing:-0.7px">11,2976</div>
<div class="a" style="left:252.4px;top:131px;font-size:17.5px;color:#f0f0f0;white-space:nowrap;letter-spacing:-0.7px">11,4969</div>
<div class="a" style="left:330.1px;top:131px;font-size:17.5px;color:#f0f0f0;white-space:nowrap;letter-spacing:-0.7px">4,3166</div>
<div class="a" style="left:407.8px;top:131px;font-size:17.5px;color:#f0f0f0;white-space:nowrap;letter-spacing:-0.7px">12,1384</div>
<div class="a" style="left:485.5px;top:131px;font-size:17.5px;color:#f0f0f0;white-space:nowrap;letter-spacing:-0.7px">10,4758</div>
<div class="a" style="left:563.2px;top:131px;font-size:17.5px;color:#f0f0f0;white-space:nowrap;letter-spacing:-0.7px">11,4640</div>
<div class="a" style="left:0;top:155px;width:634px;height:31px;background:#7a7a7a"></div>
<div class="a" style="left:12px;top:161px;font-size:17.5px;font-weight:bold;color:#f0f0f0;white-space:nowrap;letter-spacing:-0.6px">ΔE ITP</div>
<div class="a" style="left:97.0px;top:162px;font-size:17.5px;color:#f0f0f0;white-space:nowrap;letter-spacing:-0.7px">31,6556</div>
<div class="a" style="left:174.7px;top:162px;font-size:17.5px;color:#f0f0f0;white-space:nowrap;letter-spacing:-0.7px">54,3673</div>
<div class="a" style="left:252.4px;top:162px;font-size:17.5px;color:#f0f0f0;white-space:nowrap;letter-spacing:-0.7px">44,9057</div>
<div class="a" style="left:330.1px;top:162px;font-size:17.5px;color:#f0f0f0;white-space:nowrap;letter-spacing:-0.7px">30,5742</div>
<div class="a" style="left:407.8px;top:162px;font-size:17.5px;color:#f0f0f0;white-space:nowrap;letter-spacing:-0.7px">35,1302</div>
<div class="a" style="left:485.5px;top:162px;font-size:17.5px;color:#f0f0f0;white-space:nowrap;letter-spacing:-0.7px">42,3863</div>
<div class="a" style="left:563.2px;top:162px;font-size:17.5px;color:#f0f0f0;white-space:nowrap;letter-spacing:-0.7px">42,4211</div>
</div>
<div class="a" style="left:1628px;top:698px;width:16.5px;height:170px;background:#5c5c5c;border-radius:2px"></div>
<div class="a" style="left:1630px;top:700px;width:13px;height:16px;border-radius:3px;border:1px solid #8a8a8a;background:#6e6e6e"></div>
<div class="a" style="left:1632px;top:704px;border-left:5px solid transparent;border-right:5px solid transparent;border-bottom:5px solid #2a2a2a"></div>
<div class="a" style="left:1630px;top:720px;width:13px;height:106px;border-radius:6px;background:#3e3e3e"></div>
<div class="a" style="left:1630px;top:850px;width:13px;height:16px;border-radius:3px;border:1px solid #8a8a8a;background:#6e6e6e"></div>
<div class="a" style="left:1632px;top:855px;border-left:5px solid transparent;border-right:5px solid transparent;border-top:5px solid #2a2a2a"></div>
<div class="a" style="left:994.3px;top:868px;width:634px;height:19.5px;background:linear-gradient(#666,#5a5a5a)"></div>
<div class="a" style="left:1628px;top:868px;width:17px;height:20px;background:#333"></div>
<div class="a" style="left:997px;top:870px;width:14px;height:16px;border-radius:3px;border:1px solid #8a8a8a;background:#6e6e6e"></div>
<div class="a" style="left:1000px;top:872px;border-top:5.5px solid transparent;border-bottom:5.5px solid transparent;border-right:6px solid #2a2a2a"></div>
<div class="a" style="left:1014px;top:870px;width:526px;height:16px;border-radius:8px;background:#474747"></div>
<div class="a" style="left:1612px;top:870px;width:14px;height:16px;border-radius:3px;border:1px solid #8a8a8a;background:#6e6e6e"></div>
<div class="a" style="left:1616px;top:872px;border-top:5.5px solid transparent;border-bottom:5.5px solid transparent;border-left:6px solid #2a2a2a"></div>
<div class="a" style="left:0.0px;top:931.5px;width:155px;height:78px;border-radius:5px 5px 0 0;background:linear-gradient(#a8a8a8 0,#8e8e8e 38%,#6c6c6c 68%,#5a5a5a 100%)"></div>
<div class="a" style="left:6.0px;top:938px;width:142.5px;height:44.5px;border-radius:5px;background:#c0c0c0;box-shadow:inset 1px 1px 2px rgba(0,0,0,.45)"></div>
<div class="a" style="left:0.0px;top:990px;width:155px;text-align:center;font-size:12.8px;font-weight:bold;color:#2c2c2c">White</div>
<div class="a" style="left:157.8px;top:931.5px;width:155px;height:78px;border-radius:5px 5px 0 0;background:linear-gradient(#a8a8a8 0,#8e8e8e 38%,#6c6c6c 68%,#5a5a5a 100%)"></div>
<div class="a" style="left:163.8px;top:938px;width:142.5px;height:44.5px;border-radius:5px;background:#c00000;box-shadow:inset 0 1px 1.5px rgba(0,0,0,.35)"></div>
<div class="a" style="left:157.8px;top:990px;width:155px;text-align:center;font-size:12.8px;font-weight:bold;color:#2c2c2c">Red</div>
<div class="a" style="left:315.6px;top:931.5px;width:155px;height:78px;border-radius:5px 5px 0 0;background:linear-gradient(#a8a8a8 0,#8e8e8e 38%,#6c6c6c 68%,#5a5a5a 100%)"></div>
<div class="a" style="left:321.6px;top:938px;width:142.5px;height:44.5px;border-radius:5px;background:#00c000;box-shadow:inset 0 1px 1.5px rgba(0,0,0,.35)"></div>
<div class="a" style="left:315.6px;top:990px;width:155px;text-align:center;font-size:12.8px;font-weight:bold;color:#2c2c2c">Green</div>
<div class="a" style="left:473.4px;top:931.5px;width:155px;height:78px;border-radius:5px 5px 0 0;background:linear-gradient(#a8a8a8 0,#8e8e8e 38%,#6c6c6c 68%,#5a5a5a 100%)"></div>
<div class="a" style="left:479.4px;top:938px;width:142.5px;height:44.5px;border-radius:5px;background:#0000c0;box-shadow:inset 0 1px 1.5px rgba(0,0,0,.35)"></div>
<div class="a" style="left:473.4px;top:990px;width:155px;text-align:center;font-size:12.8px;font-weight:bold;color:#2c2c2c">Blue</div>
<div class="a" style="left:631.2px;top:931.5px;width:155px;height:78px;border-radius:5px 5px 0 0;background:linear-gradient(#a8a8a8 0,#8e8e8e 38%,#6c6c6c 68%,#5a5a5a 100%)"></div>
<div class="a" style="left:637.2px;top:938px;width:142.5px;height:44.5px;border-radius:5px;background:#00c0c0;box-shadow:inset 0 1px 1.5px rgba(0,0,0,.35)"></div>
<div class="a" style="left:631.2px;top:990px;width:155px;text-align:center;font-size:12.8px;font-weight:bold;color:#2c2c2c">Cyan</div>
<div class="a" style="left:789.0px;top:931.5px;width:155px;height:78px;border-radius:5px 5px 0 0;background:linear-gradient(#a8a8a8 0,#8e8e8e 38%,#6c6c6c 68%,#5a5a5a 100%)"></div>
<div class="a" style="left:795.0px;top:938px;width:142.5px;height:44.5px;border-radius:5px;background:#c000c0;box-shadow:inset 0 1px 1.5px rgba(0,0,0,.35)"></div>
<div class="a" style="left:789.0px;top:990px;width:155px;text-align:center;font-size:12.8px;font-weight:bold;color:#2c2c2c">Magenta</div>
<div class="a" style="left:946.8px;top:931.5px;width:155px;height:78px;border-radius:5px 5px 0 0;background:linear-gradient(#a8a8a8 0,#8e8e8e 38%,#6c6c6c 68%,#5a5a5a 100%)"></div>
<div class="a" style="left:952.8px;top:938px;width:142.5px;height:44.5px;border-radius:5px;background:#c0c000;box-shadow:inset 0 1px 1.5px rgba(0,0,0,.35)"></div>
<div class="a" style="left:946.8px;top:990px;width:155px;text-align:center;font-size:12.8px;font-weight:bold;color:#2c2c2c">Yellow</div>
<div class="a" style="left:1105px;top:931.5px;width:155px;height:78px;border-radius:5px 5px 0 0;background:linear-gradient(#1e1e1e,#2e2e2e)"></div>
<div class="a" style="left:1111px;top:937.5px;width:143px;height:45.5px;border-radius:5px;background:#fff;box-shadow:inset 2px 2px 2px rgba(0,0,0,.35)"></div>
<div class="a" style="left:1105px;top:990.5px;width:155px;text-align:center;font-size:12.8px;font-weight:bold;color:#fff">100W</div>
<div class="a" style="left:1265px;top:931.5px;width:59px;height:22px;border-radius:5px 5px 0 0;background:linear-gradient(#b6b6b6 0,#9c9c9c 40%,#6e6e6e 100%)"></div>
<div class="a" style="left:1285px;top:934px;width:19px;height:19px;border-radius:50%;background:linear-gradient(#787878,#9a9a9a 60%,#b2b2b2)"></div>
<div class="a" style="left:1288.5px;top:938px;border-left:6px solid transparent;border-right:6px solid transparent;border-bottom:6px solid #222"></div>
<div class="a" style="left:1265px;top:955px;width:59px;height:54px;background:linear-gradient(#a2a2a2,#8c8c8c 40%,#5e5e5e)"></div>
<div class="a" style="left:1274.5px;top:962px;width:38.5px;height:38px;border-radius:6px;border:3px solid #222;background:linear-gradient(#b0b0b0,#9a9a9a 50%,#8a8a8a 50%,#9c9c9c)"></div>
<div class="a" style="left:1286px;top:973px;width:17px;height:17px;background:linear-gradient(#1c1c1c 0,#1c1c1c 50%,#000 50%)"></div>
<div class="a" style="left:1325px;top:931px;width:58.5px;height:38px;background:linear-gradient(#b6b6b6 0,#9c9c9c 40%,#6e6e6e 100%);border-left:1px solid #3a3a3a"></div>
<div class="a" style="left:1342.2px;top:938px;width:25px;height:25px;border-radius:50%;background:linear-gradient(#787878,#9a9a9a 60%,#b2b2b2)"></div>
<div class="a" style="left:1384px;top:931px;width:55.3px;height:38px;background:linear-gradient(#b6b6b6 0,#9c9c9c 40%,#6e6e6e 100%);border-left:1px solid #3a3a3a"></div>
<div class="a" style="left:1399.7px;top:938px;width:25px;height:25px;border-radius:50%;background:linear-gradient(#787878,#9a9a9a 60%,#b2b2b2)"></div>
<div class="a" style="left:1439.8px;top:931px;width:55.7px;height:38px;background:linear-gradient(#7c7c7c 0,#666 40%,#4a4a4a 100%);border-left:1px solid #3a3a3a"></div>
<div class="a" style="left:1455.6px;top:938px;width:25px;height:25px;border-radius:50%;background:linear-gradient(#5a5a5a,#6e6e6e 60%,#7e7e7e)"></div>
<div class="a" style="left:1496.5px;top:931px;width:55.8px;height:38px;background:linear-gradient(#b6b6b6 0,#9c9c9c 40%,#6e6e6e 100%);border-left:1px solid #3a3a3a"></div>
<div class="a" style="left:1512.4px;top:938px;width:25px;height:25px;border-radius:50%;background:linear-gradient(#787878,#9a9a9a 60%,#b2b2b2)"></div>
<div class="a" style="left:1553px;top:931px;width:55.3px;height:38px;background:linear-gradient(#b6b6b6 0,#9c9c9c 40%,#6e6e6e 100%);border-left:1px solid #3a3a3a"></div>
<div class="a" style="left:1568.7px;top:938px;width:25px;height:25px;border-radius:50%;background:linear-gradient(#787878,#9a9a9a 60%,#b2b2b2)"></div>
<div class="a" style="left:1349px;top:945.5px;width:10.5px;height:9.5px;background:#2a2a2a"></div>
<div class="a" style="left:1408px;top:945.5px;border-top:6px solid transparent;border-bottom:6px solid transparent;border-left:10.5px solid #2a2a2a"></div>
<svg class="a" style="left:1455px;top:942px" width="26" height="18" viewBox="0 0 26 18"><path d="M6 2 H3.5 V15 H6 M18 2 H20.5 V15 H18" fill="none" stroke="#222" stroke-width="2"/><rect x="9.5" y="7.5" width="1.6" height="1.6" fill="#222"/><rect x="13" y="7.5" width="1.6" height="1.6" fill="#222"/></svg>
<svg class="a" style="left:1515px;top:942px" width="20" height="14" viewBox="0 0 20 14"><path d="M10 7 C7.5 3.5,3 3.5,3 7 C3 10.5,7.5 10.5,10 7 C12.5 3.5,17 3.5,17 7 C17 10.5,12.5 10.5,10 7 Z" fill="none" stroke="#2a2a2a" stroke-width="2.2"/></svg>
<svg class="a" style="left:1568.5px;top:937.5px" width="26" height="26" viewBox="0 0 26 26"><path d="M8 12.5 A5.3 5.3 0 0 1 17.5 9.5" fill="none" stroke="#2a2a2a" stroke-width="2.1"/><path d="M18 13.5 A5.3 5.3 0 0 1 8.5 16.5" fill="none" stroke="#2a2a2a" stroke-width="2.1"/><path d="M15.5 6.5 L19.5 10 L15 11 Z" fill="#2a2a2a"/><path d="M10.5 19.5 L6.5 16 L11 15 Z" fill="#2a2a2a"/></svg>
<svg class="a" style="left:1615px;top:929px" width="42" height="40" viewBox="0 0 42 40"><defs><filter id="ash" x="-20%" y="-20%" width="140%" height="140%"><feDropShadow dx="1" dy="1" stdDeviation="0.8" flood-color="#000" flood-opacity="0.6"/></filter></defs><g filter="url(#ash)" fill="#e01010"><rect x="17.2" y="2.5" width="7.6" height="35" rx="1"/><rect x="17.2" y="2.5" width="7.6" height="35" rx="1" transform="rotate(60 21 20)"/><rect x="17.2" y="2.5" width="7.6" height="35" rx="1" transform="rotate(120 21 20)"/></g></svg>
<div class="a" style="left:1325px;top:970.5px;width:170.5px;height:39px;border-radius:5px 0 0 0;background:linear-gradient(#b6b6b6 0,#9c9c9c 40%,#6e6e6e 100%)"></div>
<div class="a" style="left:1497px;top:970.5px;width:170px;height:39px;border-radius:5px 0 0 0;background:linear-gradient(#b6b6b6 0,#9c9c9c 40%,#6e6e6e 100%)"></div>
<div class="a" style="left:1352px;top:976.5px;width:25px;height:25px;border-radius:50%;background:linear-gradient(#787878,#9a9a9a 60%,#b2b2b2)"></div>
<div class="a" style="left:1618px;top:976.5px;width:25px;height:25px;border-radius:50%;background:linear-gradient(#787878,#9a9a9a 60%,#b2b2b2)"></div>
<svg class="a" style="left:1352px;top:976.5px" width="25" height="25" viewBox="0 0 25 25"><path d="M11 7 L6.5 12.5 L11 18 M16.5 7 L12 12.5 L16.5 18" fill="none" stroke="#2a2a2a" stroke-width="1.8"/></svg>
<svg class="a" style="left:1618px;top:976.5px" width="25" height="25" viewBox="0 0 25 25"><path d="M8.5 7 L13 12.5 L8.5 18 M14 7 L18.5 12.5 L14 18" fill="none" stroke="#2a2a2a" stroke-width="1.8"/></svg>
<div class="a" style="left:1398px;top:974px;font-size:27.5px;color:#2e2e2e;white-space:nowrap;letter-spacing:0.2px;-webkit-text-stroke:0.3px #2e2e2e">Back</div>
<div class="a" style="left:1531px;top:974px;font-size:27.5px;color:#2e2e2e;white-space:nowrap;letter-spacing:1.9px;-webkit-text-stroke:0.3px #2e2e2e">Next</div>
<div class="a" style="left:1658px;top:0;width:9px;height:1008px;background:linear-gradient(90deg,rgba(0,0,0,0),rgba(0,0,0,.45))"></div>
</body></html>
